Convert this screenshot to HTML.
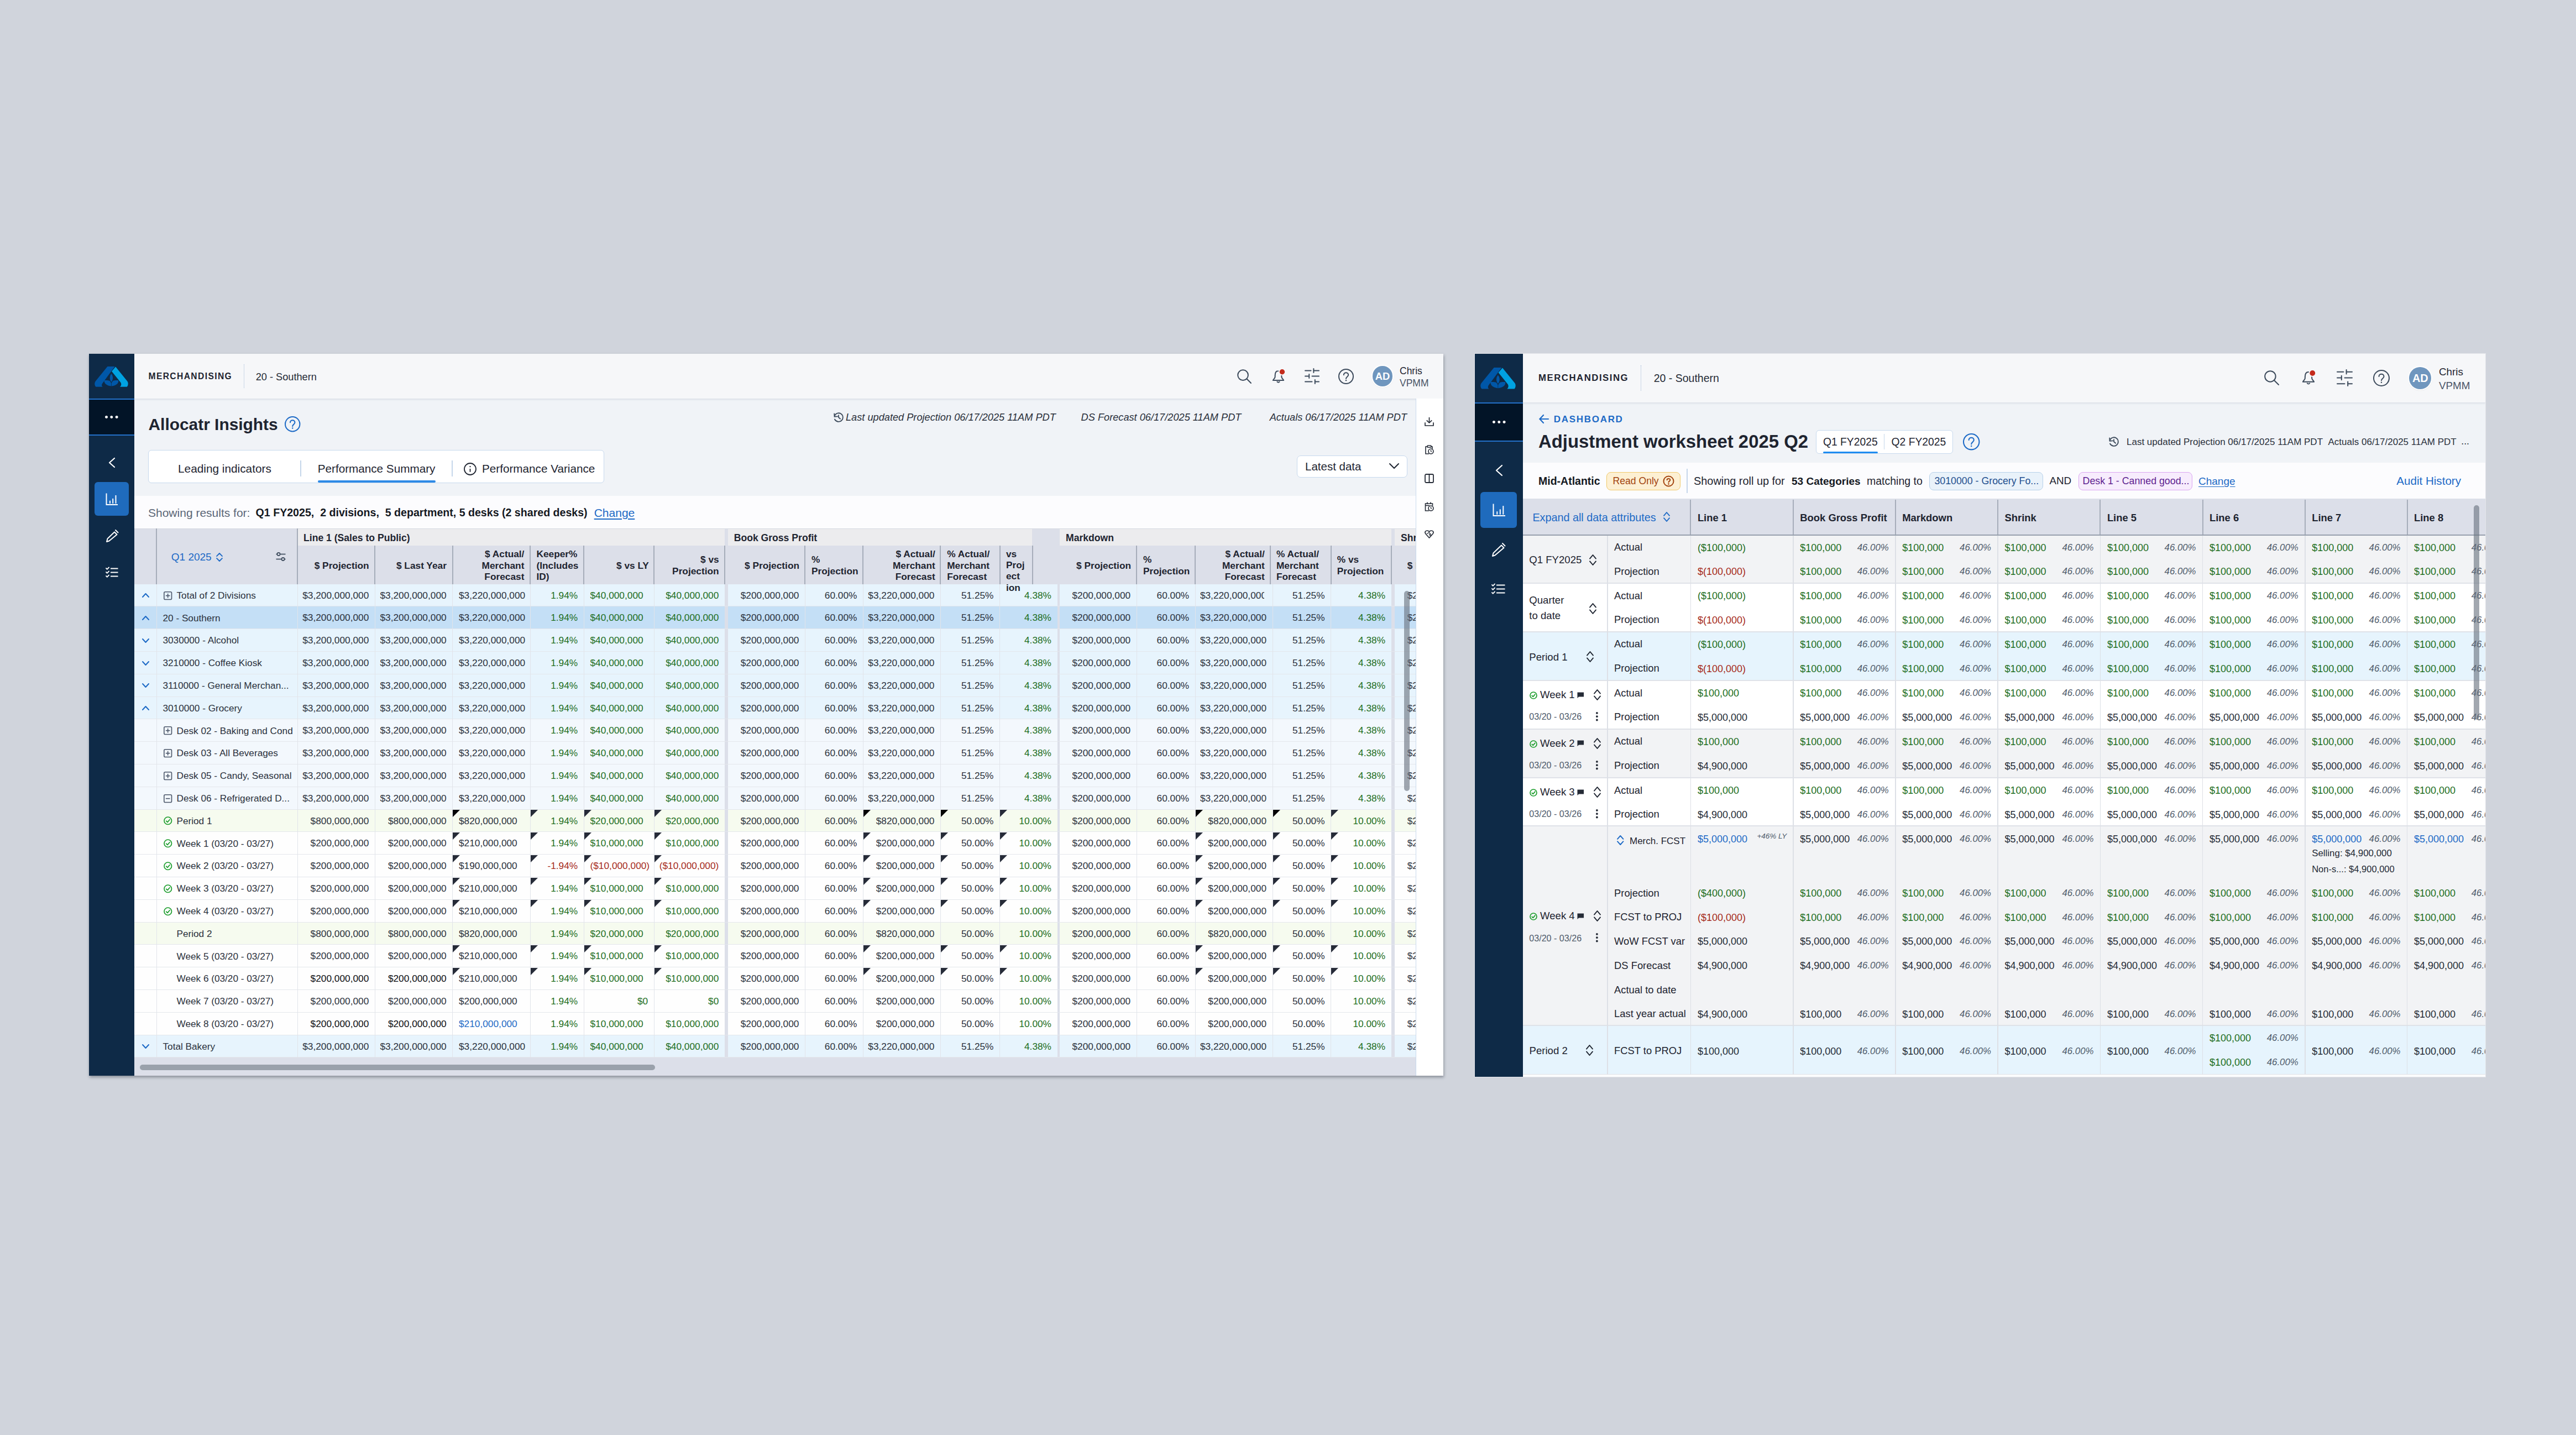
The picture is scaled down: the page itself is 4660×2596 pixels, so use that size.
<!DOCTYPE html>
<html><head><meta charset="utf-8"><title>Merchandising</title>
<style>
html,body{margin:0;padding:0;}
body{width:4660px;height:2596px;background:#d0d4dc;position:relative;overflow:hidden;font-family:'Liberation Sans', sans-serif;}
.a{position:absolute;}
.t{white-space:nowrap;}
svg{overflow:visible;}
</style></head><body>
<div class="a" style="left:161px;top:640px;width:2450px;height:1306px;overflow:hidden;box-shadow:1px 3px 5px rgba(30,36,50,0.38);background:#f0f3f7;"><div class="a" style="left:82.0px;top:81.0px;width:2368.0px;height:1225.0px;background:#f0f3f7;"></div><div class="a" style="left:0.0px;top:0.0px;width:82.0px;height:1306.0px;background:#0e2a47;"></div><svg class="a" style="left:10.2px;top:22.5px;width:61px;height:37px;" width="61" height="37" viewBox="0 0 64 38.6">
<path d="M24.6 0 L38.4 0 L15.2 31.5 C13 34.5 13.5 37 15.6 38.4 L2.5 38.4 C0 36 -0.5 31 1.8 28 Z" fill="#0057a8"/>
<path d="M40 0.4 L62.3 27.9 C64.5 31 64 36 61.6 38.4 L48.2 38.4 C51 36.5 51.5 32.5 49.3 29.7 L32.6 9.1 Z" fill="#00a2e2"/>
<path d="M31.9 30.8 C30.5 28 29 26.3 24 26.1 L19.5 26.1 C18 26.5 18.3 28 19 30 C21 35 27 36.5 31.9 37.2 Z" fill="#0057a8"/>
<path d="M31.9 30.8 C33.3 28 34.8 26.3 39.8 26.1 L44.3 26.1 C45.8 26.5 45.5 28 44.8 30 C42.8 35 36.8 36.5 31.9 37.2 Z" fill="#0057a8"/>
<path d="M31.9 12.3 C28 17 26.5 24 31.9 30.4 C37.3 24 35.8 17 31.9 12.3 Z" fill="#0057a8" stroke="#0e2a47" stroke-width="1.3"/>
<line x1="31.9" y1="31" x2="31.9" y2="37" stroke="#0e2a47" stroke-width="0.6"/>
</svg><div class="a" style="left:0.0px;top:81.0px;width:82.0px;height:2.0px;background:#2370c9;"></div><div class="a" style="left:0.0px;top:83.0px;width:82.0px;height:63.0px;background:#021427;"></div><div class="a" style="left:0.0px;top:146.0px;width:82.0px;height:2.0px;background:#2370c9;"></div><svg class="a" style="left:29.2px;top:112.0px;" width="23.6" height="5.0" viewBox="0 0 23.6 5.0"><circle cx="2.5" cy="2.5" r="2.5" fill="#fff"/><circle cx="11.8" cy="2.5" r="2.5" fill="#fff"/><circle cx="21.1" cy="2.5" r="2.5" fill="#fff"/></svg><svg class="a" style="left:36.0px;top:188.0px;" width="11" height="18" viewBox="0 0 11 18"><polyline points="10,1 1,9.0 10,17" fill="none" stroke="#fff" stroke-width="2.2" stroke-linecap="round" stroke-linejoin="round"/></svg><div class="a" style="left:10.4px;top:232.0px;width:61.2px;height:61.0px;background:#1f6bbd;border-radius:6px;"></div><svg class="a" style="left:30.0px;top:252.0px;" width="23" height="22" viewBox="0 0 23 22"><polyline points="1.5,0.5 1.5,21 22,21" fill="none" stroke="#fff" stroke-width="2"/>
<line x1="7.92" y1="13.64" x2="7.92" y2="18.919999999999998" stroke="#fff" stroke-width="2"/>
<line x1="13.2" y1="9.9" x2="13.2" y2="18.919999999999998" stroke="#fff" stroke-width="2"/>
<line x1="18.48" y1="3.96" x2="18.48" y2="18.919999999999998" stroke="#fff" stroke-width="2"/></svg><svg class="a" style="left:30.0px;top:318.0px;" width="23" height="23" viewBox="0 0 23 23"><path d="M2 22 L3.5 16.5 L16 4.5 L20.5 9 L6.5 20.5 Z" fill="none" stroke="#fff" stroke-width="2" stroke-linejoin="round"/>
<line x1="18" y1="1" x2="22.5" y2="5.5" stroke="#fff" stroke-width="2" stroke-linecap="round"/></svg><svg class="a" style="left:30.0px;top:386.0px;" width="23" height="19" viewBox="0 0 23 19"><polyline points="1,2.0 2.8,3.8 6,0.5" fill="none" stroke="#fff" stroke-width="1.8" stroke-linecap="round"/><line x1="9" y1="2.5" x2="22.5" y2="2.5" stroke="#fff" stroke-width="2"/><polyline points="1,9.0 2.8,10.8 6,7.5" fill="none" stroke="#fff" stroke-width="1.8" stroke-linecap="round"/><line x1="9" y1="9.5" x2="22.5" y2="9.5" stroke="#fff" stroke-width="2"/><polyline points="1,16.0 2.8,17.8 6,14.5" fill="none" stroke="#fff" stroke-width="1.8" stroke-linecap="round"/><line x1="9" y1="16.5" x2="22.5" y2="16.5" stroke="#fff" stroke-width="2"/></svg><div class="a" style="left:82.0px;top:0.0px;width:2368.0px;height:81.0px;background:#f6f7f9;border-bottom:1px solid #dde3ea;box-shadow:0 1px 3px rgba(40,60,90,0.10);"></div><div class="a t" style="top:33.2px;font-size:15.6px;line-height:15.6px;color:#1e2430;font-weight:700;letter-spacing:1.4px;left:107.5px;">MERCHANDISING</div><div class="a" style="left:280.0px;top:19.0px;width:0.0px;height:43.0px;border-left:1.5px dotted #9fb8d6;"></div><div class="a t" style="top:33.0px;font-size:18.2px;line-height:18.2px;color:#252b36;left:301.7px;">20 - Southern</div><svg class="a" style="left:2077.0px;top:28.0px;" width="26" height="26" viewBox="0 0 26 26"><circle cx="10.559999999999999" cy="10.559999999999999" r="9.36" fill="none" stroke="#3d4b5c" stroke-width="2"/><line x1="17.2992" y1="17.2992" x2="25" y2="25" stroke="#3d4b5c" stroke-width="2" stroke-linecap="round"/></svg><svg class="a" style="left:2141.0px;top:28.0px;" width="23" height="25" viewBox="0 0 23 25"><path d="M10.5 3.0 C5.880000000000001 3.0 4.62 7.5 4.62 11.25 L4.62 13.750000000000002 C4.62 16.5 1.68 17.5 0.84 20.0 L20.16 20.0 C19.32 17.5 16.38 16.5 16.38 13.750000000000002 L16.38 11.25 C16.38 7.5 15.12 3.0 10.5 3.0 Z" fill="none" stroke="#3d4b5c" stroke-width="2" stroke-linejoin="round"/>
<path d="M8.4 22.5 Q10.5 24.75 12.6 22.5" fill="none" stroke="#3d4b5c" stroke-width="2" stroke-linecap="round"/>
<circle cx="17.43" cy="4.75" r="5.67" fill="#c42b1c" stroke="#f6f7f9" stroke-width="1.89"/></svg><svg class="a" style="left:2200.0px;top:27.0px;" width="25" height="27" viewBox="0 0 25 27"><line x1="0.0" y1="3.5100000000000002" x2="10.576923076923077" y2="3.5100000000000002" stroke="#3d4b5c" stroke-width="2" stroke-linecap="round"/><line x1="15.384615384615385" y1="3.5100000000000002" x2="25.0" y2="3.5100000000000002" stroke="#3d4b5c" stroke-width="2" stroke-linecap="round"/><line x1="15.384615384615385" y1="0.048461538461538556" x2="15.384615384615385" y2="6.9715384615384615" stroke="#3d4b5c" stroke-width="2" stroke-linecap="round"/><line x1="0.0" y1="13.5" x2="7.211538461538462" y2="13.5" stroke="#3d4b5c" stroke-width="2" stroke-linecap="round"/><line x1="12.5" y1="13.5" x2="25.0" y2="13.5" stroke="#3d4b5c" stroke-width="2" stroke-linecap="round"/><line x1="7.211538461538462" y1="10.038461538461538" x2="7.211538461538462" y2="16.96153846153846" stroke="#3d4b5c" stroke-width="2" stroke-linecap="round"/><line x1="0.0" y1="23.49" x2="12.5" y2="23.49" stroke="#3d4b5c" stroke-width="2" stroke-linecap="round"/><line x1="17.78846153846154" y1="23.49" x2="25.0" y2="23.49" stroke="#3d4b5c" stroke-width="2" stroke-linecap="round"/><line x1="17.78846153846154" y1="20.028461538461535" x2="17.78846153846154" y2="26.951538461538462" stroke="#3d4b5c" stroke-width="2" stroke-linecap="round"/></svg><svg class="a" style="left:2259.5px;top:26.5px;" width="28" height="28" viewBox="0 0 28 28"><circle cx="14.0" cy="14.0" r="13" fill="none" stroke="#3d4b5c" stroke-width="2"/>
<path d="M9.84 11.14 C9.84 5.9399999999999995 18.16 5.9399999999999995 18.16 11.14 C18.16 14.65 14.0 14.65 14.0 17.9" fill="none" stroke="#3d4b5c" stroke-width="2" stroke-linecap="round"/>
<circle cx="14.0" cy="21.15" r="1.2" fill="#3d4b5c"/></svg><div class="a" style="left:2321.6px;top:22.3px;width:36.8px;height:36.8px;border-radius:50%;background:#6f96be;box-shadow:0 0 0 2px #fff,0 1px 3px rgba(0,0,0,0.25);"></div><div class="a t" style="top:32.2px;font-size:18.4px;line-height:18.4px;color:#fff;font-weight:700;left:1590.0px;width:1500px;text-align:center;">AD</div><div class="a t" style="top:22.8px;font-size:17.5px;line-height:17.5px;color:#1e2430;left:2371.0px;">Chris</div><div class="a t" style="top:45.1px;font-size:17.5px;line-height:17.5px;color:#4a5568;left:2371.0px;">VPMM</div><div class="a t" style="top:113.1px;font-size:29.9px;line-height:29.9px;color:#1e2430;font-weight:700;left:107.5px;">Allocatr Insights</div><svg class="a" style="left:354.4px;top:112.8px;" width="28.4" height="28.4" viewBox="0 0 28.4 28.4"><circle cx="14.2" cy="14.2" r="13.2" fill="none" stroke="#1d6ac6" stroke-width="2"/>
<path d="M9.975999999999999 11.296 C9.975999999999999 6.016 18.424 6.016 18.424 11.296 C18.424 14.86 14.2 14.86 14.2 18.16" fill="none" stroke="#1d6ac6" stroke-width="2" stroke-linecap="round"/>
<circle cx="14.2" cy="21.46" r="1.2" fill="#1d6ac6"/></svg><svg class="a" style="left:1347.0px;top:106.0px;" width="18" height="18" viewBox="0 0 18 18"><path d="M1.5900000000000007 6.66 A7.8 7.8 0 1 1 1.9800000000000004 12.51" fill="none" stroke="#3d4b5c" stroke-width="1.8" stroke-linecap="round"/>
<polyline points="1.2000000000000002 2.37,1.5900000000000007 7.83,7.05 7.4399999999999995" fill="none" stroke="#3d4b5c" stroke-width="1.8" stroke-linecap="round" stroke-linejoin="round"/>
<polyline points="9.0 5.1,9.0 9.0,12.120000000000001 11.73" fill="none" stroke="#3d4b5c" stroke-width="1.8" stroke-linecap="round"/></svg><div class="a t" style="top:105.5px;font-size:18.2px;line-height:18.2px;color:#2a303b;font-style:italic;left:1369.0px;">Last updated Projection 06/17/2025 11AM PDT</div><div class="a t" style="top:105.5px;font-size:18.2px;line-height:18.2px;color:#2a303b;font-style:italic;left:1794.6px;">DS Forecast 06/17/2025 11AM PDT</div><div class="a t" style="top:105.5px;font-size:18.2px;line-height:18.2px;color:#2a303b;font-style:italic;left:884.0px;width:1500px;text-align:right;">Actuals 06/17/2025 11AM PDT</div><div class="a" style="left:107.0px;top:174.0px;width:825.0px;height:60.0px;background:#fff;box-sizing:border-box;border:1.5px solid #c7d9ed;border-radius:6px;"></div><div class="a t" style="top:197.8px;font-size:20.8px;line-height:20.8px;color:#1e2430;left:161.0px;">Leading indicators</div><div class="a" style="left:382.0px;top:193.0px;width:1.5px;height:29.0px;background:#c5d6ea;"></div><div class="a t" style="top:197.9px;font-size:20.7px;line-height:20.7px;color:#1e2430;left:413.7px;">Performance Summary</div><div class="a" style="left:413.5px;top:229.0px;width:213.5px;height:4.0px;background:#2d8ae6;border-radius:2px;"></div><div class="a" style="left:656.0px;top:193.0px;width:1.5px;height:29.0px;background:#c5d6ea;"></div><svg class="a" style="left:677.5px;top:196.5px;" width="23.0" height="23.0" viewBox="0 0 23.0 23.0"><circle cx="11.5" cy="11.5" r="10.5" fill="none" stroke="#1e2430" stroke-width="1.8"/>
<line x1="11.5" y1="10.975" x2="11.5" y2="16.75" stroke="#1e2430" stroke-width="1.8"/>
<circle cx="11.5" cy="7.09" r="1.1700000000000002" fill="#1e2430"/></svg><div class="a t" style="top:197.9px;font-size:20.7px;line-height:20.7px;color:#1e2430;left:711.0px;">Performance Variance</div><div class="a" style="left:2185.0px;top:184.0px;width:200.0px;height:40.0px;background:#fff;box-sizing:border-box;border:1.5px solid #c7d9ed;border-radius:7px;"></div><div class="a t" style="top:193.9px;font-size:20.5px;line-height:20.5px;color:#1e2430;left:2200.0px;">Latest data</div><svg class="a" style="left:2352.0px;top:198.0px;" width="18" height="10" viewBox="0 0 18 10"><polyline points="1,1 9.0,9 17,1" fill="none" stroke="#1e2430" stroke-width="2" stroke-linecap="round" stroke-linejoin="round"/></svg><div class="a" style="left:2400.0px;top:81.0px;width:50.0px;height:1225.0px;background:#fff;border-left:1px solid #c9daee;"></div><svg class="a" style="left:2416.0px;top:114.0px;" width="17" height="17" viewBox="0 0 17 17"><line x1="8.5" y1="1" x2="8.5" y2="10.54" stroke="#252b36" stroke-width="1.7"/><polyline points="3.74,6.46 8.5,10.88 13.26,6.46" fill="none" stroke="#252b36" stroke-width="1.7" stroke-linejoin="round"/><polyline points="1,10.2 1,16 16,16 16,10.2" fill="none" stroke="#252b36" stroke-width="1.7" stroke-linejoin="round"/></svg><svg class="a" style="left:2416.0px;top:165.0px;" width="17" height="17" viewBox="0 0 17 17"><path d="M6 3 L2 3 L2 16 L8 16" fill="none" stroke="#252b36" stroke-width="1.6"/><rect x="5" y="1" width="7" height="3.2" rx="1" fill="none" stroke="#252b36" stroke-width="1.6"/><path d="M11 3 L14 3 L14 7" fill="none" stroke="#252b36" stroke-width="1.6"/><circle cx="11.5" cy="11.5" r="4.5" fill="#fff" stroke="#252b36" stroke-width="1.6"/><polyline points="11.5,9 11.5,11.5 13,12.5" fill="none" stroke="#252b36" stroke-width="1.3"/></svg><svg class="a" style="left:2416.0px;top:217.0px;" width="17" height="17" viewBox="0 0 17 17"><rect x="1" y="1" width="15" height="15" rx="2" fill="none" stroke="#252b36" stroke-width="1.8"/><line x1="8.5" y1="1" x2="8.5" y2="16" stroke="#252b36" stroke-width="1.8"/></svg><svg class="a" style="left:2416.0px;top:268.0px;" width="17" height="17" viewBox="0 0 17 17"><path d="M8 16 L1.5 16 L1.5 3 L14.5 3 L14.5 7" fill="none" stroke="#252b36" stroke-width="1.6"/><line x1="1.5" y1="6.5" x2="9" y2="6.5" stroke="#252b36" stroke-width="1.6"/><line x1="5" y1="0.5" x2="5" y2="4" stroke="#252b36" stroke-width="1.6"/><line x1="11" y1="0.5" x2="11" y2="4" stroke="#252b36" stroke-width="1.6"/><circle cx="11.5" cy="11.5" r="4.5" fill="#fff" stroke="#252b36" stroke-width="1.6"/><polyline points="11.5,9 11.5,11.5 13,12.5" fill="none" stroke="#252b36" stroke-width="1.3"/></svg><svg class="a" style="left:2416.0px;top:319.0px;" width="17" height="15" viewBox="0 0 17 15"><path d="M8.5 14 L2 6.75 C-0.5 3.0 2 1 5 1 C6.8 1 7.8 2 8.5 3 C9.2 2 10.2 1 12 1 C15 1 17.5 3.0 15 6.75 Z" fill="none" stroke="#252b36" stroke-width="1.7" stroke-linejoin="round"/><path d="M4 6.75 L8 4.5 L11 7 M8 9 L11 6.5 M9.5 10.5 L12 8" fill="none" stroke="#252b36" stroke-width="1.4"/></svg><div class="a" style="left:82.0px;top:256.5px;width:2318.0px;height:60.0px;background:#fcfcfe;"></div><div class="a t" style="top:276.6px;font-size:21px;line-height:21px;color:#5b6676;left:107.0px;">Showing results for:</div><div class="a t" style="top:277.8px;font-size:19.6px;line-height:19.6px;color:#14181f;font-weight:700;left:301.6px;">Q1 FY2025,  2 divisions,  5 department, 5 desks (2 shared desks)</div><div class="a t" style="top:276.6px;font-size:21px;line-height:21px;color:#1d6ac6;left:913.7px;text-decoration:underline;text-underline-offset:3px;">Change</div><div class="a" style="left:0;top:0;width:2400px;height:1306px;overflow:hidden;clip-path:inset(0 0 0 82px);"><div class="a" style="left:82.0px;top:316.4px;width:2318.0px;height:100.2px;background:#dcdfe9;border-top:1px solid #d3d7e0;box-sizing:border-box;"></div><div class="a" style="left:377.0px;top:317.4px;width:773.3px;height:30.0px;background:#ececee;"></div><div class="a t" style="top:325.3px;font-size:17.6px;line-height:17.6px;color:#1e2430;font-weight:700;left:388.0px;">Line 1 (Sales to Public)</div><div class="a" style="left:1155.7px;top:317.4px;width:550.8px;height:30.0px;background:#ececee;"></div><div class="a t" style="top:325.3px;font-size:17.6px;line-height:17.6px;color:#1e2430;font-weight:700;left:1166.7px;">Book Gross Profit</div><div class="a" style="left:1756.0px;top:317.4px;width:600.1px;height:30.0px;background:#ececee;"></div><div class="a t" style="top:325.3px;font-size:17.6px;line-height:17.6px;color:#1e2430;font-weight:700;left:1767.0px;">Markdown</div><div class="a" style="left:2362.0px;top:317.4px;width:38.0px;height:30.0px;background:#ececee;"></div><div class="a t" style="top:325.3px;font-size:17.6px;line-height:17.6px;color:#1e2430;font-weight:700;left:2373.0px;">Shrink</div><div class="a" style="left:121.0px;top:316.4px;width:2.0px;height:100.2px;background:#a6adba;"></div><div class="a" style="left:376.0px;top:316.4px;width:2.0px;height:100.2px;background:#a6adba;"></div><div class="a" style="left:516.3px;top:347.4px;width:2.0px;height:69.2px;background:#a6adba;"></div><div class="a" style="left:656.6px;top:347.4px;width:2.0px;height:69.2px;background:#a6adba;"></div><div class="a" style="left:797.1px;top:347.4px;width:2.0px;height:69.2px;background:#a6adba;"></div><div class="a" style="left:894.2px;top:347.4px;width:2.0px;height:69.2px;background:#a6adba;"></div><div class="a" style="left:1021.2px;top:347.4px;width:2.0px;height:69.2px;background:#a6adba;"></div><div class="a" style="left:1149.3px;top:347.4px;width:2.0px;height:69.2px;background:#a6adba;"></div><div class="a" style="left:1294.4px;top:347.4px;width:2.0px;height:69.2px;background:#a6adba;"></div><div class="a" style="left:1399.4px;top:347.4px;width:2.0px;height:69.2px;background:#a6adba;"></div><div class="a" style="left:1539.4px;top:347.4px;width:2.0px;height:69.2px;background:#a6adba;"></div><div class="a" style="left:1646.5px;top:347.4px;width:2.0px;height:69.2px;background:#a6adba;"></div><div class="a" style="left:1705.5px;top:347.4px;width:2.0px;height:69.2px;background:#a6adba;"></div><div class="a" style="left:1894.2px;top:347.4px;width:2.0px;height:69.2px;background:#a6adba;"></div><div class="a" style="left:2000.2px;top:347.4px;width:2.0px;height:69.2px;background:#a6adba;"></div><div class="a" style="left:2135.5px;top:347.4px;width:2.0px;height:69.2px;background:#a6adba;"></div><div class="a" style="left:2245.6px;top:347.4px;width:2.0px;height:69.2px;background:#a6adba;"></div><div class="a" style="left:2355.1px;top:347.4px;width:2.0px;height:69.2px;background:#a6adba;"></div><div class="a t" style="top:358.2px;font-size:19px;line-height:19px;color:#1d6ac6;left:148.8px;">Q1 2025</div><svg class="a" style="left:230.4px;top:359.7px;" width="12" height="16" viewBox="0 0 12 16"><polyline points="1,6.08 6.0,1 11,6.08" fill="none" stroke="#1d6ac6" stroke-width="1.8" stroke-linecap="round" stroke-linejoin="round"/><polyline points="1,9.92 6.0,15 11,9.92" fill="none" stroke="#1d6ac6" stroke-width="1.8" stroke-linecap="round" stroke-linejoin="round"/></svg><svg class="a" style="left:338.0px;top:359.0px;" width="18" height="16" viewBox="0 0 18 16"><line x1="0.5" y1="3.5" x2="17.5" y2="3.5" stroke="#3d4b5c" stroke-width="1.7"/>
<circle cx="5" cy="3.5" r="2.6" fill="#dcdfe9" stroke="#3d4b5c" stroke-width="1.7"/>
<line x1="0.5" y1="12.5" x2="17.5" y2="12.5" stroke="#3d4b5c" stroke-width="1.7"/>
<circle cx="13" cy="12.5" r="2.6" fill="#dcdfe9" stroke="#3d4b5c" stroke-width="1.7"/></svg><div class="a t" style="top:374.6px;font-size:17.3px;line-height:17.3px;color:#1e2430;font-weight:700;left:-993.4px;width:1500px;text-align:right;">$ Projection</div><div class="a t" style="top:374.6px;font-size:17.3px;line-height:17.3px;color:#1e2430;font-weight:700;left:-853.1px;width:1500px;text-align:right;">$ Last Year</div><div class="a t" style="top:354.2px;font-size:17.3px;line-height:17.3px;color:#1e2430;font-weight:700;left:-712.6px;width:1500px;text-align:right;">$ Actual/</div><div class="a t" style="top:374.6px;font-size:17.3px;line-height:17.3px;color:#1e2430;font-weight:700;left:-712.6px;width:1500px;text-align:right;">Merchant</div><div class="a t" style="top:395.0px;font-size:17.3px;line-height:17.3px;color:#1e2430;font-weight:700;left:-712.6px;width:1500px;text-align:right;">Forecast</div><div class="a t" style="top:354.2px;font-size:17.3px;line-height:17.3px;color:#1e2430;font-weight:700;left:809.5px;">Keeper%</div><div class="a t" style="top:374.6px;font-size:17.3px;line-height:17.3px;color:#1e2430;font-weight:700;left:809.5px;">(Includes</div><div class="a t" style="top:395.0px;font-size:17.3px;line-height:17.3px;color:#1e2430;font-weight:700;left:809.5px;">ID)</div><div class="a t" style="top:374.6px;font-size:17.3px;line-height:17.3px;color:#1e2430;font-weight:700;left:-487.1px;width:1500px;text-align:right;">$ vs LY</div><div class="a t" style="top:364.4px;font-size:17.3px;line-height:17.3px;color:#1e2430;font-weight:700;left:-360.4px;width:1500px;text-align:right;">$ vs</div><div class="a t" style="top:384.8px;font-size:17.3px;line-height:17.3px;color:#1e2430;font-weight:700;left:-360.4px;width:1500px;text-align:right;">Projection</div><div class="a t" style="top:374.6px;font-size:17.3px;line-height:17.3px;color:#1e2430;font-weight:700;left:-215.0px;width:1500px;text-align:right;">$ Projection</div><div class="a t" style="top:364.4px;font-size:17.3px;line-height:17.3px;color:#1e2430;font-weight:700;left:1307.0px;">%</div><div class="a t" style="top:384.8px;font-size:17.3px;line-height:17.3px;color:#1e2430;font-weight:700;left:1307.0px;">Projection</div><div class="a t" style="top:354.2px;font-size:17.3px;line-height:17.3px;color:#1e2430;font-weight:700;left:30.8px;width:1500px;text-align:right;">$ Actual/</div><div class="a t" style="top:374.6px;font-size:17.3px;line-height:17.3px;color:#1e2430;font-weight:700;left:30.8px;width:1500px;text-align:right;">Merchant</div><div class="a t" style="top:395.0px;font-size:17.3px;line-height:17.3px;color:#1e2430;font-weight:700;left:30.8px;width:1500px;text-align:right;">Forecast</div><div class="a t" style="top:354.2px;font-size:17.3px;line-height:17.3px;color:#1e2430;font-weight:700;left:1552.2px;">% Actual/</div><div class="a t" style="top:374.6px;font-size:17.3px;line-height:17.3px;color:#1e2430;font-weight:700;left:1552.2px;">Merchant</div><div class="a t" style="top:395.0px;font-size:17.3px;line-height:17.3px;color:#1e2430;font-weight:700;left:1552.2px;">Forecast</div><div class="a t" style="top:374.6px;font-size:17.3px;line-height:17.3px;color:#1e2430;font-weight:700;left:385.0px;width:1500px;text-align:right;">$ Projection</div><div class="a t" style="top:364.4px;font-size:17.3px;line-height:17.3px;color:#1e2430;font-weight:700;left:1906.9px;">%</div><div class="a t" style="top:384.8px;font-size:17.3px;line-height:17.3px;color:#1e2430;font-weight:700;left:1906.9px;">Projection</div><div class="a t" style="top:354.2px;font-size:17.3px;line-height:17.3px;color:#1e2430;font-weight:700;left:626.8px;width:1500px;text-align:right;">$ Actual/</div><div class="a t" style="top:374.6px;font-size:17.3px;line-height:17.3px;color:#1e2430;font-weight:700;left:626.8px;width:1500px;text-align:right;">Merchant</div><div class="a t" style="top:395.0px;font-size:17.3px;line-height:17.3px;color:#1e2430;font-weight:700;left:626.8px;width:1500px;text-align:right;">Forecast</div><div class="a t" style="top:354.2px;font-size:17.3px;line-height:17.3px;color:#1e2430;font-weight:700;left:2147.9px;">% Actual/</div><div class="a t" style="top:374.6px;font-size:17.3px;line-height:17.3px;color:#1e2430;font-weight:700;left:2147.9px;">Merchant</div><div class="a t" style="top:395.0px;font-size:17.3px;line-height:17.3px;color:#1e2430;font-weight:700;left:2147.9px;">Forecast</div><div class="a t" style="top:364.4px;font-size:17.3px;line-height:17.3px;color:#1e2430;font-weight:700;left:2257.8px;">% vs</div><div class="a t" style="top:384.8px;font-size:17.3px;line-height:17.3px;color:#1e2430;font-weight:700;left:2257.8px;">Projection</div><div class="a t" style="top:374.8px;font-size:17.3px;line-height:17.3px;color:#1e2430;font-weight:700;left:2384.7px;">$ Projection</div><div class="a" style="left:82.0px;top:416.6px;width:2318.0px;height:40.8px;background:#e7f4fd;"></div><div class="a" style="left:1150.3px;top:416.6px;width:5.4px;height:40.8px;background:#dcdfe9;"></div><div class="a" style="left:1752.0px;top:416.6px;width:4.0px;height:40.8px;background:#dcdfe9;"></div><div class="a" style="left:2356.1px;top:416.6px;width:5.9px;height:40.8px;background:#dcdfe9;"></div><div class="a" style="left:82.0px;top:456.4px;width:2318.0px;height:1.0px;background:#e4e7ec;"></div><div class="a" style="left:121.5px;top:416.6px;width:1.0px;height:40.8px;background:#e1e4ea;"></div><div class="a" style="left:376.5px;top:416.6px;width:1.0px;height:40.8px;background:#e1e4ea;"></div><div class="a" style="left:516.8px;top:416.6px;width:1.0px;height:40.8px;background:#e1e4ea;"></div><div class="a" style="left:657.1px;top:416.6px;width:1.0px;height:40.8px;background:#e1e4ea;"></div><div class="a" style="left:797.6px;top:416.6px;width:1.0px;height:40.8px;background:#e1e4ea;"></div><div class="a" style="left:894.7px;top:416.6px;width:1.0px;height:40.8px;background:#e1e4ea;"></div><div class="a" style="left:1021.7px;top:416.6px;width:1.0px;height:40.8px;background:#e1e4ea;"></div><div class="a" style="left:1294.9px;top:416.6px;width:1.0px;height:40.8px;background:#e1e4ea;"></div><div class="a" style="left:1399.9px;top:416.6px;width:1.0px;height:40.8px;background:#e1e4ea;"></div><div class="a" style="left:1539.9px;top:416.6px;width:1.0px;height:40.8px;background:#e1e4ea;"></div><div class="a" style="left:1647.0px;top:416.6px;width:1.0px;height:40.8px;background:#e1e4ea;"></div><div class="a" style="left:1894.7px;top:416.6px;width:1.0px;height:40.8px;background:#e1e4ea;"></div><div class="a" style="left:2000.7px;top:416.6px;width:1.0px;height:40.8px;background:#e1e4ea;"></div><div class="a" style="left:2140.5px;top:416.6px;width:1.0px;height:40.8px;background:#e1e4ea;"></div><div class="a" style="left:2246.1px;top:416.6px;width:1.0px;height:40.8px;background:#e1e4ea;"></div><svg class="a" style="left:96.0px;top:433.1px;" width="13" height="8" viewBox="0 0 13 8"><polyline points="1,7 6.5,1 12,7" fill="none" stroke="#1d6ac6" stroke-width="2" stroke-linecap="round" stroke-linejoin="round"/></svg><svg class="a" style="left:135.0px;top:429.6px;" width="15.3" height="15.3" viewBox="0 0 15.3 15.3"><rect x="0.8" y="0.8" width="13.700000000000001" height="13.700000000000001" rx="2" fill="none" stroke="#4a5568" stroke-width="1.6"/><line x1="3.825" y1="7.65" x2="11.475000000000001" y2="7.65" stroke="#4a5568" stroke-width="1.6"/><line x1="7.65" y1="3.825" x2="7.65" y2="11.475000000000001" stroke="#4a5568" stroke-width="1.6"/></svg><div class="a t" style="top:428.7px;font-size:17.2px;line-height:17.2px;color:#2b313c;left:158.5px;">Total of 2 Divisions</div><div class="a t" style="top:428.6px;font-size:17.3px;line-height:17.3px;color:#2b313c;left:-993.7px;width:1500px;text-align:right;">$3,200,000,000</div><div class="a t" style="top:428.6px;font-size:17.3px;line-height:17.3px;color:#2b313c;left:-853.4px;width:1500px;text-align:right;">$3,200,000,000</div><div class="a t" style="top:428.6px;font-size:17.3px;line-height:17.3px;color:#2b313c;left:669.0px;">$3,220,000,000</div><div class="a t" style="top:428.6px;font-size:17.3px;line-height:17.3px;color:#1d6e1d;left:-615.8px;width:1500px;text-align:right;">1.94%</div><div class="a t" style="top:428.6px;font-size:17.3px;line-height:17.3px;color:#1d6e1d;left:906.5px;">$40,000,000</div><div class="a t" style="top:428.6px;font-size:17.3px;line-height:17.3px;color:#1d6e1d;left:-360.7px;width:1500px;text-align:right;">$40,000,000</div><div class="a t" style="top:428.6px;font-size:17.3px;line-height:17.3px;color:#2b313c;left:-215.6px;width:1500px;text-align:right;">$200,000,000</div><div class="a t" style="top:428.6px;font-size:17.3px;line-height:17.3px;color:#2b313c;left:-110.6px;width:1500px;text-align:right;">60.00%</div><div class="a t" style="top:428.6px;font-size:17.3px;line-height:17.3px;color:#2b313c;left:29.4px;width:1500px;text-align:right;">$3,220,000,000</div><div class="a t" style="top:428.6px;font-size:17.3px;line-height:17.3px;color:#2b313c;left:136.5px;width:1500px;text-align:right;">51.25%</div><div class="a t" style="top:428.6px;font-size:17.3px;line-height:17.3px;color:#1d6e1d;left:241.0px;width:1500px;text-align:right;">4.38%</div><div class="a t" style="top:428.6px;font-size:17.3px;line-height:17.3px;color:#2b313c;left:384.2px;width:1500px;text-align:right;">$200,000,000</div><div class="a t" style="top:428.6px;font-size:17.3px;line-height:17.3px;color:#2b313c;left:490.2px;width:1500px;text-align:right;">60.00%</div><div class="a" style="left:2001.2px;top:416.6px;width:125.29999999999995px;height:40.8px;overflow:hidden;"><div class="a t" style="top:12.0px;font-size:17.3px;line-height:17.3px;color:#2b313c;left:-1371.2px;width:1500px;text-align:right;">$3,220,000,000</div></div><div class="a t" style="top:428.6px;font-size:17.3px;line-height:17.3px;color:#2b313c;left:735.6px;width:1500px;text-align:right;">51.25%</div><div class="a t" style="top:428.6px;font-size:17.3px;line-height:17.3px;color:#1d6e1d;left:845.1px;width:1500px;text-align:right;">4.38%</div><div class="a t" style="top:428.6px;font-size:17.3px;line-height:17.3px;color:#2b313c;left:2384.7px;">$200,000,000</div><div class="a" style="left:82.0px;top:457.4px;width:2318.0px;height:40.8px;background:#c4dff6;"></div><div class="a" style="left:1150.3px;top:457.4px;width:5.4px;height:40.8px;background:#dcdfe9;"></div><div class="a" style="left:1752.0px;top:457.4px;width:4.0px;height:40.8px;background:#dcdfe9;"></div><div class="a" style="left:2356.1px;top:457.4px;width:5.9px;height:40.8px;background:#dcdfe9;"></div><div class="a" style="left:82.0px;top:497.2px;width:2318.0px;height:1.0px;background:#e4e7ec;"></div><div class="a" style="left:121.5px;top:457.4px;width:1.0px;height:40.8px;background:#e1e4ea;"></div><div class="a" style="left:376.5px;top:457.4px;width:1.0px;height:40.8px;background:#e1e4ea;"></div><div class="a" style="left:516.8px;top:457.4px;width:1.0px;height:40.8px;background:#e1e4ea;"></div><div class="a" style="left:657.1px;top:457.4px;width:1.0px;height:40.8px;background:#e1e4ea;"></div><div class="a" style="left:797.6px;top:457.4px;width:1.0px;height:40.8px;background:#e1e4ea;"></div><div class="a" style="left:894.7px;top:457.4px;width:1.0px;height:40.8px;background:#e1e4ea;"></div><div class="a" style="left:1021.7px;top:457.4px;width:1.0px;height:40.8px;background:#e1e4ea;"></div><div class="a" style="left:1294.9px;top:457.4px;width:1.0px;height:40.8px;background:#e1e4ea;"></div><div class="a" style="left:1399.9px;top:457.4px;width:1.0px;height:40.8px;background:#e1e4ea;"></div><div class="a" style="left:1539.9px;top:457.4px;width:1.0px;height:40.8px;background:#e1e4ea;"></div><div class="a" style="left:1647.0px;top:457.4px;width:1.0px;height:40.8px;background:#e1e4ea;"></div><div class="a" style="left:1894.7px;top:457.4px;width:1.0px;height:40.8px;background:#e1e4ea;"></div><div class="a" style="left:2000.7px;top:457.4px;width:1.0px;height:40.8px;background:#e1e4ea;"></div><div class="a" style="left:2140.5px;top:457.4px;width:1.0px;height:40.8px;background:#e1e4ea;"></div><div class="a" style="left:2246.1px;top:457.4px;width:1.0px;height:40.8px;background:#e1e4ea;"></div><svg class="a" style="left:96.0px;top:473.9px;" width="13" height="8" viewBox="0 0 13 8"><polyline points="1,7 6.5,1 12,7" fill="none" stroke="#1d6ac6" stroke-width="2" stroke-linecap="round" stroke-linejoin="round"/></svg><div class="a t" style="top:469.5px;font-size:17.2px;line-height:17.2px;color:#2b313c;left:133.5px;">20 - Southern</div><div class="a t" style="top:469.4px;font-size:17.3px;line-height:17.3px;color:#2b313c;left:-993.7px;width:1500px;text-align:right;">$3,200,000,000</div><div class="a t" style="top:469.4px;font-size:17.3px;line-height:17.3px;color:#2b313c;left:-853.4px;width:1500px;text-align:right;">$3,200,000,000</div><div class="a t" style="top:469.4px;font-size:17.3px;line-height:17.3px;color:#2b313c;left:669.0px;">$3,220,000,000</div><div class="a t" style="top:469.4px;font-size:17.3px;line-height:17.3px;color:#1d6e1d;left:-615.8px;width:1500px;text-align:right;">1.94%</div><div class="a t" style="top:469.4px;font-size:17.3px;line-height:17.3px;color:#1d6e1d;left:906.5px;">$40,000,000</div><div class="a t" style="top:469.4px;font-size:17.3px;line-height:17.3px;color:#1d6e1d;left:-360.7px;width:1500px;text-align:right;">$40,000,000</div><div class="a t" style="top:469.4px;font-size:17.3px;line-height:17.3px;color:#2b313c;left:-215.6px;width:1500px;text-align:right;">$200,000,000</div><div class="a t" style="top:469.4px;font-size:17.3px;line-height:17.3px;color:#2b313c;left:-110.6px;width:1500px;text-align:right;">60.00%</div><div class="a t" style="top:469.4px;font-size:17.3px;line-height:17.3px;color:#2b313c;left:29.4px;width:1500px;text-align:right;">$3,220,000,000</div><div class="a t" style="top:469.4px;font-size:17.3px;line-height:17.3px;color:#2b313c;left:136.5px;width:1500px;text-align:right;">51.25%</div><div class="a t" style="top:469.4px;font-size:17.3px;line-height:17.3px;color:#1d6e1d;left:241.0px;width:1500px;text-align:right;">4.38%</div><div class="a t" style="top:469.4px;font-size:17.3px;line-height:17.3px;color:#2b313c;left:384.2px;width:1500px;text-align:right;">$200,000,000</div><div class="a t" style="top:469.4px;font-size:17.3px;line-height:17.3px;color:#2b313c;left:490.2px;width:1500px;text-align:right;">60.00%</div><div class="a t" style="top:469.4px;font-size:17.3px;line-height:17.3px;color:#2b313c;left:630.0px;width:1500px;text-align:right;">$3,220,000,000</div><div class="a t" style="top:469.4px;font-size:17.3px;line-height:17.3px;color:#2b313c;left:735.6px;width:1500px;text-align:right;">51.25%</div><div class="a t" style="top:469.4px;font-size:17.3px;line-height:17.3px;color:#1d6e1d;left:845.1px;width:1500px;text-align:right;">4.38%</div><div class="a t" style="top:469.4px;font-size:17.3px;line-height:17.3px;color:#2b313c;left:2384.7px;">$200,000,000</div><div class="a" style="left:82.0px;top:498.2px;width:2318.0px;height:40.8px;background:#e7f4fd;"></div><div class="a" style="left:1150.3px;top:498.2px;width:5.4px;height:40.8px;background:#dcdfe9;"></div><div class="a" style="left:1752.0px;top:498.2px;width:4.0px;height:40.8px;background:#dcdfe9;"></div><div class="a" style="left:2356.1px;top:498.2px;width:5.9px;height:40.8px;background:#dcdfe9;"></div><div class="a" style="left:82.0px;top:538.0px;width:2318.0px;height:1.0px;background:#e4e7ec;"></div><div class="a" style="left:121.5px;top:498.2px;width:1.0px;height:40.8px;background:#e1e4ea;"></div><div class="a" style="left:376.5px;top:498.2px;width:1.0px;height:40.8px;background:#e1e4ea;"></div><div class="a" style="left:516.8px;top:498.2px;width:1.0px;height:40.8px;background:#e1e4ea;"></div><div class="a" style="left:657.1px;top:498.2px;width:1.0px;height:40.8px;background:#e1e4ea;"></div><div class="a" style="left:797.6px;top:498.2px;width:1.0px;height:40.8px;background:#e1e4ea;"></div><div class="a" style="left:894.7px;top:498.2px;width:1.0px;height:40.8px;background:#e1e4ea;"></div><div class="a" style="left:1021.7px;top:498.2px;width:1.0px;height:40.8px;background:#e1e4ea;"></div><div class="a" style="left:1294.9px;top:498.2px;width:1.0px;height:40.8px;background:#e1e4ea;"></div><div class="a" style="left:1399.9px;top:498.2px;width:1.0px;height:40.8px;background:#e1e4ea;"></div><div class="a" style="left:1539.9px;top:498.2px;width:1.0px;height:40.8px;background:#e1e4ea;"></div><div class="a" style="left:1647.0px;top:498.2px;width:1.0px;height:40.8px;background:#e1e4ea;"></div><div class="a" style="left:1894.7px;top:498.2px;width:1.0px;height:40.8px;background:#e1e4ea;"></div><div class="a" style="left:2000.7px;top:498.2px;width:1.0px;height:40.8px;background:#e1e4ea;"></div><div class="a" style="left:2140.5px;top:498.2px;width:1.0px;height:40.8px;background:#e1e4ea;"></div><div class="a" style="left:2246.1px;top:498.2px;width:1.0px;height:40.8px;background:#e1e4ea;"></div><svg class="a" style="left:96.0px;top:514.7px;" width="13" height="8" viewBox="0 0 13 8"><polyline points="1,1 6.5,7 12,1" fill="none" stroke="#1d6ac6" stroke-width="2" stroke-linecap="round" stroke-linejoin="round"/></svg><div class="a t" style="top:510.3px;font-size:17.2px;line-height:17.2px;color:#2b313c;left:133.5px;">3030000 - Alcohol</div><div class="a t" style="top:510.2px;font-size:17.3px;line-height:17.3px;color:#2b313c;left:-993.7px;width:1500px;text-align:right;">$3,200,000,000</div><div class="a t" style="top:510.2px;font-size:17.3px;line-height:17.3px;color:#2b313c;left:-853.4px;width:1500px;text-align:right;">$3,200,000,000</div><div class="a t" style="top:510.2px;font-size:17.3px;line-height:17.3px;color:#2b313c;left:669.0px;">$3,220,000,000</div><div class="a t" style="top:510.2px;font-size:17.3px;line-height:17.3px;color:#1d6e1d;left:-615.8px;width:1500px;text-align:right;">1.94%</div><div class="a t" style="top:510.2px;font-size:17.3px;line-height:17.3px;color:#1d6e1d;left:906.5px;">$40,000,000</div><div class="a t" style="top:510.2px;font-size:17.3px;line-height:17.3px;color:#1d6e1d;left:-360.7px;width:1500px;text-align:right;">$40,000,000</div><div class="a t" style="top:510.2px;font-size:17.3px;line-height:17.3px;color:#2b313c;left:-215.6px;width:1500px;text-align:right;">$200,000,000</div><div class="a t" style="top:510.2px;font-size:17.3px;line-height:17.3px;color:#2b313c;left:-110.6px;width:1500px;text-align:right;">60.00%</div><div class="a t" style="top:510.2px;font-size:17.3px;line-height:17.3px;color:#2b313c;left:29.4px;width:1500px;text-align:right;">$3,220,000,000</div><div class="a t" style="top:510.2px;font-size:17.3px;line-height:17.3px;color:#2b313c;left:136.5px;width:1500px;text-align:right;">51.25%</div><div class="a t" style="top:510.2px;font-size:17.3px;line-height:17.3px;color:#1d6e1d;left:241.0px;width:1500px;text-align:right;">4.38%</div><div class="a t" style="top:510.2px;font-size:17.3px;line-height:17.3px;color:#2b313c;left:384.2px;width:1500px;text-align:right;">$200,000,000</div><div class="a t" style="top:510.2px;font-size:17.3px;line-height:17.3px;color:#2b313c;left:490.2px;width:1500px;text-align:right;">60.00%</div><div class="a t" style="top:510.2px;font-size:17.3px;line-height:17.3px;color:#2b313c;left:630.0px;width:1500px;text-align:right;">$3,220,000,000</div><div class="a t" style="top:510.2px;font-size:17.3px;line-height:17.3px;color:#2b313c;left:735.6px;width:1500px;text-align:right;">51.25%</div><div class="a t" style="top:510.2px;font-size:17.3px;line-height:17.3px;color:#1d6e1d;left:845.1px;width:1500px;text-align:right;">4.38%</div><div class="a t" style="top:510.2px;font-size:17.3px;line-height:17.3px;color:#2b313c;left:2384.7px;">$200,000,000</div><div class="a" style="left:82.0px;top:539.0px;width:2318.0px;height:40.8px;background:#e7f4fd;"></div><div class="a" style="left:1150.3px;top:539.0px;width:5.4px;height:40.8px;background:#dcdfe9;"></div><div class="a" style="left:1752.0px;top:539.0px;width:4.0px;height:40.8px;background:#dcdfe9;"></div><div class="a" style="left:2356.1px;top:539.0px;width:5.9px;height:40.8px;background:#dcdfe9;"></div><div class="a" style="left:82.0px;top:578.8px;width:2318.0px;height:1.0px;background:#e4e7ec;"></div><div class="a" style="left:121.5px;top:539.0px;width:1.0px;height:40.8px;background:#e1e4ea;"></div><div class="a" style="left:376.5px;top:539.0px;width:1.0px;height:40.8px;background:#e1e4ea;"></div><div class="a" style="left:516.8px;top:539.0px;width:1.0px;height:40.8px;background:#e1e4ea;"></div><div class="a" style="left:657.1px;top:539.0px;width:1.0px;height:40.8px;background:#e1e4ea;"></div><div class="a" style="left:797.6px;top:539.0px;width:1.0px;height:40.8px;background:#e1e4ea;"></div><div class="a" style="left:894.7px;top:539.0px;width:1.0px;height:40.8px;background:#e1e4ea;"></div><div class="a" style="left:1021.7px;top:539.0px;width:1.0px;height:40.8px;background:#e1e4ea;"></div><div class="a" style="left:1294.9px;top:539.0px;width:1.0px;height:40.8px;background:#e1e4ea;"></div><div class="a" style="left:1399.9px;top:539.0px;width:1.0px;height:40.8px;background:#e1e4ea;"></div><div class="a" style="left:1539.9px;top:539.0px;width:1.0px;height:40.8px;background:#e1e4ea;"></div><div class="a" style="left:1647.0px;top:539.0px;width:1.0px;height:40.8px;background:#e1e4ea;"></div><div class="a" style="left:1894.7px;top:539.0px;width:1.0px;height:40.8px;background:#e1e4ea;"></div><div class="a" style="left:2000.7px;top:539.0px;width:1.0px;height:40.8px;background:#e1e4ea;"></div><div class="a" style="left:2140.5px;top:539.0px;width:1.0px;height:40.8px;background:#e1e4ea;"></div><div class="a" style="left:2246.1px;top:539.0px;width:1.0px;height:40.8px;background:#e1e4ea;"></div><svg class="a" style="left:96.0px;top:555.5px;" width="13" height="8" viewBox="0 0 13 8"><polyline points="1,1 6.5,7 12,1" fill="none" stroke="#1d6ac6" stroke-width="2" stroke-linecap="round" stroke-linejoin="round"/></svg><div class="a t" style="top:551.1px;font-size:17.2px;line-height:17.2px;color:#2b313c;left:133.5px;">3210000 - Coffee Kiosk</div><div class="a t" style="top:551.0px;font-size:17.3px;line-height:17.3px;color:#2b313c;left:-993.7px;width:1500px;text-align:right;">$3,200,000,000</div><div class="a t" style="top:551.0px;font-size:17.3px;line-height:17.3px;color:#2b313c;left:-853.4px;width:1500px;text-align:right;">$3,200,000,000</div><div class="a t" style="top:551.0px;font-size:17.3px;line-height:17.3px;color:#2b313c;left:669.0px;">$3,220,000,000</div><div class="a t" style="top:551.0px;font-size:17.3px;line-height:17.3px;color:#1d6e1d;left:-615.8px;width:1500px;text-align:right;">1.94%</div><div class="a t" style="top:551.0px;font-size:17.3px;line-height:17.3px;color:#1d6e1d;left:906.5px;">$40,000,000</div><div class="a t" style="top:551.0px;font-size:17.3px;line-height:17.3px;color:#1d6e1d;left:-360.7px;width:1500px;text-align:right;">$40,000,000</div><div class="a t" style="top:551.0px;font-size:17.3px;line-height:17.3px;color:#2b313c;left:-215.6px;width:1500px;text-align:right;">$200,000,000</div><div class="a t" style="top:551.0px;font-size:17.3px;line-height:17.3px;color:#2b313c;left:-110.6px;width:1500px;text-align:right;">60.00%</div><div class="a t" style="top:551.0px;font-size:17.3px;line-height:17.3px;color:#2b313c;left:29.4px;width:1500px;text-align:right;">$3,220,000,000</div><div class="a t" style="top:551.0px;font-size:17.3px;line-height:17.3px;color:#2b313c;left:136.5px;width:1500px;text-align:right;">51.25%</div><div class="a t" style="top:551.0px;font-size:17.3px;line-height:17.3px;color:#1d6e1d;left:241.0px;width:1500px;text-align:right;">4.38%</div><div class="a t" style="top:551.0px;font-size:17.3px;line-height:17.3px;color:#2b313c;left:384.2px;width:1500px;text-align:right;">$200,000,000</div><div class="a t" style="top:551.0px;font-size:17.3px;line-height:17.3px;color:#2b313c;left:490.2px;width:1500px;text-align:right;">60.00%</div><div class="a t" style="top:551.0px;font-size:17.3px;line-height:17.3px;color:#2b313c;left:630.0px;width:1500px;text-align:right;">$3,220,000,000</div><div class="a t" style="top:551.0px;font-size:17.3px;line-height:17.3px;color:#2b313c;left:735.6px;width:1500px;text-align:right;">51.25%</div><div class="a t" style="top:551.0px;font-size:17.3px;line-height:17.3px;color:#1d6e1d;left:845.1px;width:1500px;text-align:right;">4.38%</div><div class="a t" style="top:551.0px;font-size:17.3px;line-height:17.3px;color:#2b313c;left:2384.7px;">$200,000,000</div><div class="a" style="left:82.0px;top:579.8px;width:2318.0px;height:40.8px;background:#e7f4fd;"></div><div class="a" style="left:1150.3px;top:579.8px;width:5.4px;height:40.8px;background:#dcdfe9;"></div><div class="a" style="left:1752.0px;top:579.8px;width:4.0px;height:40.8px;background:#dcdfe9;"></div><div class="a" style="left:2356.1px;top:579.8px;width:5.9px;height:40.8px;background:#dcdfe9;"></div><div class="a" style="left:82.0px;top:619.6px;width:2318.0px;height:1.0px;background:#e4e7ec;"></div><div class="a" style="left:121.5px;top:579.8px;width:1.0px;height:40.8px;background:#e1e4ea;"></div><div class="a" style="left:376.5px;top:579.8px;width:1.0px;height:40.8px;background:#e1e4ea;"></div><div class="a" style="left:516.8px;top:579.8px;width:1.0px;height:40.8px;background:#e1e4ea;"></div><div class="a" style="left:657.1px;top:579.8px;width:1.0px;height:40.8px;background:#e1e4ea;"></div><div class="a" style="left:797.6px;top:579.8px;width:1.0px;height:40.8px;background:#e1e4ea;"></div><div class="a" style="left:894.7px;top:579.8px;width:1.0px;height:40.8px;background:#e1e4ea;"></div><div class="a" style="left:1021.7px;top:579.8px;width:1.0px;height:40.8px;background:#e1e4ea;"></div><div class="a" style="left:1294.9px;top:579.8px;width:1.0px;height:40.8px;background:#e1e4ea;"></div><div class="a" style="left:1399.9px;top:579.8px;width:1.0px;height:40.8px;background:#e1e4ea;"></div><div class="a" style="left:1539.9px;top:579.8px;width:1.0px;height:40.8px;background:#e1e4ea;"></div><div class="a" style="left:1647.0px;top:579.8px;width:1.0px;height:40.8px;background:#e1e4ea;"></div><div class="a" style="left:1894.7px;top:579.8px;width:1.0px;height:40.8px;background:#e1e4ea;"></div><div class="a" style="left:2000.7px;top:579.8px;width:1.0px;height:40.8px;background:#e1e4ea;"></div><div class="a" style="left:2140.5px;top:579.8px;width:1.0px;height:40.8px;background:#e1e4ea;"></div><div class="a" style="left:2246.1px;top:579.8px;width:1.0px;height:40.8px;background:#e1e4ea;"></div><svg class="a" style="left:96.0px;top:596.3px;" width="13" height="8" viewBox="0 0 13 8"><polyline points="1,1 6.5,7 12,1" fill="none" stroke="#1d6ac6" stroke-width="2" stroke-linecap="round" stroke-linejoin="round"/></svg><div class="a t" style="top:591.9px;font-size:17.2px;line-height:17.2px;color:#2b313c;left:133.5px;">3110000 - General Merchan...</div><div class="a t" style="top:591.8px;font-size:17.3px;line-height:17.3px;color:#2b313c;left:-993.7px;width:1500px;text-align:right;">$3,200,000,000</div><div class="a t" style="top:591.8px;font-size:17.3px;line-height:17.3px;color:#2b313c;left:-853.4px;width:1500px;text-align:right;">$3,200,000,000</div><div class="a t" style="top:591.8px;font-size:17.3px;line-height:17.3px;color:#2b313c;left:669.0px;">$3,220,000,000</div><div class="a t" style="top:591.8px;font-size:17.3px;line-height:17.3px;color:#1d6e1d;left:-615.8px;width:1500px;text-align:right;">1.94%</div><div class="a t" style="top:591.8px;font-size:17.3px;line-height:17.3px;color:#1d6e1d;left:906.5px;">$40,000,000</div><div class="a t" style="top:591.8px;font-size:17.3px;line-height:17.3px;color:#1d6e1d;left:-360.7px;width:1500px;text-align:right;">$40,000,000</div><div class="a t" style="top:591.8px;font-size:17.3px;line-height:17.3px;color:#2b313c;left:-215.6px;width:1500px;text-align:right;">$200,000,000</div><div class="a t" style="top:591.8px;font-size:17.3px;line-height:17.3px;color:#2b313c;left:-110.6px;width:1500px;text-align:right;">60.00%</div><div class="a t" style="top:591.8px;font-size:17.3px;line-height:17.3px;color:#2b313c;left:29.4px;width:1500px;text-align:right;">$3,220,000,000</div><div class="a t" style="top:591.8px;font-size:17.3px;line-height:17.3px;color:#2b313c;left:136.5px;width:1500px;text-align:right;">51.25%</div><div class="a t" style="top:591.8px;font-size:17.3px;line-height:17.3px;color:#1d6e1d;left:241.0px;width:1500px;text-align:right;">4.38%</div><div class="a t" style="top:591.8px;font-size:17.3px;line-height:17.3px;color:#2b313c;left:384.2px;width:1500px;text-align:right;">$200,000,000</div><div class="a t" style="top:591.8px;font-size:17.3px;line-height:17.3px;color:#2b313c;left:490.2px;width:1500px;text-align:right;">60.00%</div><div class="a t" style="top:591.8px;font-size:17.3px;line-height:17.3px;color:#2b313c;left:630.0px;width:1500px;text-align:right;">$3,220,000,000</div><div class="a t" style="top:591.8px;font-size:17.3px;line-height:17.3px;color:#2b313c;left:735.6px;width:1500px;text-align:right;">51.25%</div><div class="a t" style="top:591.8px;font-size:17.3px;line-height:17.3px;color:#1d6e1d;left:845.1px;width:1500px;text-align:right;">4.38%</div><div class="a t" style="top:591.8px;font-size:17.3px;line-height:17.3px;color:#2b313c;left:2384.7px;">$200,000,000</div><div class="a" style="left:82.0px;top:620.6px;width:2318.0px;height:40.8px;background:#e7f4fd;"></div><div class="a" style="left:1150.3px;top:620.6px;width:5.4px;height:40.8px;background:#dcdfe9;"></div><div class="a" style="left:1752.0px;top:620.6px;width:4.0px;height:40.8px;background:#dcdfe9;"></div><div class="a" style="left:2356.1px;top:620.6px;width:5.9px;height:40.8px;background:#dcdfe9;"></div><div class="a" style="left:82.0px;top:660.4px;width:2318.0px;height:1.0px;background:#e4e7ec;"></div><div class="a" style="left:121.5px;top:620.6px;width:1.0px;height:40.8px;background:#e1e4ea;"></div><div class="a" style="left:376.5px;top:620.6px;width:1.0px;height:40.8px;background:#e1e4ea;"></div><div class="a" style="left:516.8px;top:620.6px;width:1.0px;height:40.8px;background:#e1e4ea;"></div><div class="a" style="left:657.1px;top:620.6px;width:1.0px;height:40.8px;background:#e1e4ea;"></div><div class="a" style="left:797.6px;top:620.6px;width:1.0px;height:40.8px;background:#e1e4ea;"></div><div class="a" style="left:894.7px;top:620.6px;width:1.0px;height:40.8px;background:#e1e4ea;"></div><div class="a" style="left:1021.7px;top:620.6px;width:1.0px;height:40.8px;background:#e1e4ea;"></div><div class="a" style="left:1294.9px;top:620.6px;width:1.0px;height:40.8px;background:#e1e4ea;"></div><div class="a" style="left:1399.9px;top:620.6px;width:1.0px;height:40.8px;background:#e1e4ea;"></div><div class="a" style="left:1539.9px;top:620.6px;width:1.0px;height:40.8px;background:#e1e4ea;"></div><div class="a" style="left:1647.0px;top:620.6px;width:1.0px;height:40.8px;background:#e1e4ea;"></div><div class="a" style="left:1894.7px;top:620.6px;width:1.0px;height:40.8px;background:#e1e4ea;"></div><div class="a" style="left:2000.7px;top:620.6px;width:1.0px;height:40.8px;background:#e1e4ea;"></div><div class="a" style="left:2140.5px;top:620.6px;width:1.0px;height:40.8px;background:#e1e4ea;"></div><div class="a" style="left:2246.1px;top:620.6px;width:1.0px;height:40.8px;background:#e1e4ea;"></div><svg class="a" style="left:96.0px;top:637.1px;" width="13" height="8" viewBox="0 0 13 8"><polyline points="1,7 6.5,1 12,7" fill="none" stroke="#1d6ac6" stroke-width="2" stroke-linecap="round" stroke-linejoin="round"/></svg><div class="a t" style="top:632.7px;font-size:17.2px;line-height:17.2px;color:#2b313c;left:133.5px;">3010000 - Grocery</div><div class="a t" style="top:632.6px;font-size:17.3px;line-height:17.3px;color:#2b313c;left:-993.7px;width:1500px;text-align:right;">$3,200,000,000</div><div class="a t" style="top:632.6px;font-size:17.3px;line-height:17.3px;color:#2b313c;left:-853.4px;width:1500px;text-align:right;">$3,200,000,000</div><div class="a t" style="top:632.6px;font-size:17.3px;line-height:17.3px;color:#2b313c;left:669.0px;">$3,220,000,000</div><div class="a t" style="top:632.6px;font-size:17.3px;line-height:17.3px;color:#1d6e1d;left:-615.8px;width:1500px;text-align:right;">1.94%</div><div class="a t" style="top:632.6px;font-size:17.3px;line-height:17.3px;color:#1d6e1d;left:906.5px;">$40,000,000</div><div class="a t" style="top:632.6px;font-size:17.3px;line-height:17.3px;color:#1d6e1d;left:-360.7px;width:1500px;text-align:right;">$40,000,000</div><div class="a t" style="top:632.6px;font-size:17.3px;line-height:17.3px;color:#2b313c;left:-215.6px;width:1500px;text-align:right;">$200,000,000</div><div class="a t" style="top:632.6px;font-size:17.3px;line-height:17.3px;color:#2b313c;left:-110.6px;width:1500px;text-align:right;">60.00%</div><div class="a t" style="top:632.6px;font-size:17.3px;line-height:17.3px;color:#2b313c;left:29.4px;width:1500px;text-align:right;">$3,220,000,000</div><div class="a t" style="top:632.6px;font-size:17.3px;line-height:17.3px;color:#2b313c;left:136.5px;width:1500px;text-align:right;">51.25%</div><div class="a t" style="top:632.6px;font-size:17.3px;line-height:17.3px;color:#1d6e1d;left:241.0px;width:1500px;text-align:right;">4.38%</div><div class="a t" style="top:632.6px;font-size:17.3px;line-height:17.3px;color:#2b313c;left:384.2px;width:1500px;text-align:right;">$200,000,000</div><div class="a t" style="top:632.6px;font-size:17.3px;line-height:17.3px;color:#2b313c;left:490.2px;width:1500px;text-align:right;">60.00%</div><div class="a t" style="top:632.6px;font-size:17.3px;line-height:17.3px;color:#2b313c;left:630.0px;width:1500px;text-align:right;">$3,220,000,000</div><div class="a t" style="top:632.6px;font-size:17.3px;line-height:17.3px;color:#2b313c;left:735.6px;width:1500px;text-align:right;">51.25%</div><div class="a t" style="top:632.6px;font-size:17.3px;line-height:17.3px;color:#1d6e1d;left:845.1px;width:1500px;text-align:right;">4.38%</div><div class="a t" style="top:632.6px;font-size:17.3px;line-height:17.3px;color:#2b313c;left:2384.7px;">$200,000,000</div><div class="a" style="left:82.0px;top:661.4px;width:2318.0px;height:40.8px;background:#f3f8fd;"></div><div class="a" style="left:1150.3px;top:661.4px;width:5.4px;height:40.8px;background:#dcdfe9;"></div><div class="a" style="left:1752.0px;top:661.4px;width:4.0px;height:40.8px;background:#dcdfe9;"></div><div class="a" style="left:2356.1px;top:661.4px;width:5.9px;height:40.8px;background:#dcdfe9;"></div><div class="a" style="left:82.0px;top:701.2px;width:2318.0px;height:1.0px;background:#e4e7ec;"></div><div class="a" style="left:121.5px;top:661.4px;width:1.0px;height:40.8px;background:#e1e4ea;"></div><div class="a" style="left:376.5px;top:661.4px;width:1.0px;height:40.8px;background:#e1e4ea;"></div><div class="a" style="left:516.8px;top:661.4px;width:1.0px;height:40.8px;background:#e1e4ea;"></div><div class="a" style="left:657.1px;top:661.4px;width:1.0px;height:40.8px;background:#e1e4ea;"></div><div class="a" style="left:797.6px;top:661.4px;width:1.0px;height:40.8px;background:#e1e4ea;"></div><div class="a" style="left:894.7px;top:661.4px;width:1.0px;height:40.8px;background:#e1e4ea;"></div><div class="a" style="left:1021.7px;top:661.4px;width:1.0px;height:40.8px;background:#e1e4ea;"></div><div class="a" style="left:1294.9px;top:661.4px;width:1.0px;height:40.8px;background:#e1e4ea;"></div><div class="a" style="left:1399.9px;top:661.4px;width:1.0px;height:40.8px;background:#e1e4ea;"></div><div class="a" style="left:1539.9px;top:661.4px;width:1.0px;height:40.8px;background:#e1e4ea;"></div><div class="a" style="left:1647.0px;top:661.4px;width:1.0px;height:40.8px;background:#e1e4ea;"></div><div class="a" style="left:1894.7px;top:661.4px;width:1.0px;height:40.8px;background:#e1e4ea;"></div><div class="a" style="left:2000.7px;top:661.4px;width:1.0px;height:40.8px;background:#e1e4ea;"></div><div class="a" style="left:2140.5px;top:661.4px;width:1.0px;height:40.8px;background:#e1e4ea;"></div><div class="a" style="left:2246.1px;top:661.4px;width:1.0px;height:40.8px;background:#e1e4ea;"></div><svg class="a" style="left:135.0px;top:674.4px;" width="15.3" height="15.3" viewBox="0 0 15.3 15.3"><rect x="0.8" y="0.8" width="13.700000000000001" height="13.700000000000001" rx="2" fill="none" stroke="#4a5568" stroke-width="1.6"/><line x1="3.825" y1="7.65" x2="11.475000000000001" y2="7.65" stroke="#4a5568" stroke-width="1.6"/><line x1="7.65" y1="3.825" x2="7.65" y2="11.475000000000001" stroke="#4a5568" stroke-width="1.6"/></svg><div class="a t" style="top:673.5px;font-size:17.2px;line-height:17.2px;color:#2b313c;left:158.5px;">Desk 02 - Baking and Cond</div><div class="a t" style="top:673.4px;font-size:17.3px;line-height:17.3px;color:#2b313c;left:-993.7px;width:1500px;text-align:right;">$3,200,000,000</div><div class="a t" style="top:673.4px;font-size:17.3px;line-height:17.3px;color:#2b313c;left:-853.4px;width:1500px;text-align:right;">$3,200,000,000</div><div class="a t" style="top:673.4px;font-size:17.3px;line-height:17.3px;color:#2b313c;left:669.0px;">$3,220,000,000</div><div class="a t" style="top:673.4px;font-size:17.3px;line-height:17.3px;color:#1d6e1d;left:-615.8px;width:1500px;text-align:right;">1.94%</div><div class="a t" style="top:673.4px;font-size:17.3px;line-height:17.3px;color:#1d6e1d;left:906.5px;">$40,000,000</div><div class="a t" style="top:673.4px;font-size:17.3px;line-height:17.3px;color:#1d6e1d;left:-360.7px;width:1500px;text-align:right;">$40,000,000</div><div class="a t" style="top:673.4px;font-size:17.3px;line-height:17.3px;color:#2b313c;left:-215.6px;width:1500px;text-align:right;">$200,000,000</div><div class="a t" style="top:673.4px;font-size:17.3px;line-height:17.3px;color:#2b313c;left:-110.6px;width:1500px;text-align:right;">60.00%</div><div class="a t" style="top:673.4px;font-size:17.3px;line-height:17.3px;color:#2b313c;left:29.4px;width:1500px;text-align:right;">$3,220,000,000</div><div class="a t" style="top:673.4px;font-size:17.3px;line-height:17.3px;color:#2b313c;left:136.5px;width:1500px;text-align:right;">51.25%</div><div class="a t" style="top:673.4px;font-size:17.3px;line-height:17.3px;color:#1d6e1d;left:241.0px;width:1500px;text-align:right;">4.38%</div><div class="a t" style="top:673.4px;font-size:17.3px;line-height:17.3px;color:#2b313c;left:384.2px;width:1500px;text-align:right;">$200,000,000</div><div class="a t" style="top:673.4px;font-size:17.3px;line-height:17.3px;color:#2b313c;left:490.2px;width:1500px;text-align:right;">60.00%</div><div class="a t" style="top:673.4px;font-size:17.3px;line-height:17.3px;color:#2b313c;left:630.0px;width:1500px;text-align:right;">$3,220,000,000</div><div class="a t" style="top:673.4px;font-size:17.3px;line-height:17.3px;color:#2b313c;left:735.6px;width:1500px;text-align:right;">51.25%</div><div class="a t" style="top:673.4px;font-size:17.3px;line-height:17.3px;color:#1d6e1d;left:845.1px;width:1500px;text-align:right;">4.38%</div><div class="a t" style="top:673.4px;font-size:17.3px;line-height:17.3px;color:#2b313c;left:2384.7px;">$200,000,000</div><div class="a" style="left:82.0px;top:702.2px;width:2318.0px;height:40.8px;background:#f3f8fd;"></div><div class="a" style="left:1150.3px;top:702.2px;width:5.4px;height:40.8px;background:#dcdfe9;"></div><div class="a" style="left:1752.0px;top:702.2px;width:4.0px;height:40.8px;background:#dcdfe9;"></div><div class="a" style="left:2356.1px;top:702.2px;width:5.9px;height:40.8px;background:#dcdfe9;"></div><div class="a" style="left:82.0px;top:742.0px;width:2318.0px;height:1.0px;background:#e4e7ec;"></div><div class="a" style="left:121.5px;top:702.2px;width:1.0px;height:40.8px;background:#e1e4ea;"></div><div class="a" style="left:376.5px;top:702.2px;width:1.0px;height:40.8px;background:#e1e4ea;"></div><div class="a" style="left:516.8px;top:702.2px;width:1.0px;height:40.8px;background:#e1e4ea;"></div><div class="a" style="left:657.1px;top:702.2px;width:1.0px;height:40.8px;background:#e1e4ea;"></div><div class="a" style="left:797.6px;top:702.2px;width:1.0px;height:40.8px;background:#e1e4ea;"></div><div class="a" style="left:894.7px;top:702.2px;width:1.0px;height:40.8px;background:#e1e4ea;"></div><div class="a" style="left:1021.7px;top:702.2px;width:1.0px;height:40.8px;background:#e1e4ea;"></div><div class="a" style="left:1294.9px;top:702.2px;width:1.0px;height:40.8px;background:#e1e4ea;"></div><div class="a" style="left:1399.9px;top:702.2px;width:1.0px;height:40.8px;background:#e1e4ea;"></div><div class="a" style="left:1539.9px;top:702.2px;width:1.0px;height:40.8px;background:#e1e4ea;"></div><div class="a" style="left:1647.0px;top:702.2px;width:1.0px;height:40.8px;background:#e1e4ea;"></div><div class="a" style="left:1894.7px;top:702.2px;width:1.0px;height:40.8px;background:#e1e4ea;"></div><div class="a" style="left:2000.7px;top:702.2px;width:1.0px;height:40.8px;background:#e1e4ea;"></div><div class="a" style="left:2140.5px;top:702.2px;width:1.0px;height:40.8px;background:#e1e4ea;"></div><div class="a" style="left:2246.1px;top:702.2px;width:1.0px;height:40.8px;background:#e1e4ea;"></div><svg class="a" style="left:135.0px;top:715.2px;" width="15.3" height="15.3" viewBox="0 0 15.3 15.3"><rect x="0.8" y="0.8" width="13.700000000000001" height="13.700000000000001" rx="2" fill="none" stroke="#4a5568" stroke-width="1.6"/><line x1="3.825" y1="7.65" x2="11.475000000000001" y2="7.65" stroke="#4a5568" stroke-width="1.6"/><line x1="7.65" y1="3.825" x2="7.65" y2="11.475000000000001" stroke="#4a5568" stroke-width="1.6"/></svg><div class="a t" style="top:714.3px;font-size:17.2px;line-height:17.2px;color:#2b313c;left:158.5px;">Desk 03 - All Beverages</div><div class="a t" style="top:714.2px;font-size:17.3px;line-height:17.3px;color:#2b313c;left:-993.7px;width:1500px;text-align:right;">$3,200,000,000</div><div class="a t" style="top:714.2px;font-size:17.3px;line-height:17.3px;color:#2b313c;left:-853.4px;width:1500px;text-align:right;">$3,200,000,000</div><div class="a t" style="top:714.2px;font-size:17.3px;line-height:17.3px;color:#2b313c;left:669.0px;">$3,220,000,000</div><div class="a t" style="top:714.2px;font-size:17.3px;line-height:17.3px;color:#1d6e1d;left:-615.8px;width:1500px;text-align:right;">1.94%</div><div class="a t" style="top:714.2px;font-size:17.3px;line-height:17.3px;color:#1d6e1d;left:906.5px;">$40,000,000</div><div class="a t" style="top:714.2px;font-size:17.3px;line-height:17.3px;color:#1d6e1d;left:-360.7px;width:1500px;text-align:right;">$40,000,000</div><div class="a t" style="top:714.2px;font-size:17.3px;line-height:17.3px;color:#2b313c;left:-215.6px;width:1500px;text-align:right;">$200,000,000</div><div class="a t" style="top:714.2px;font-size:17.3px;line-height:17.3px;color:#2b313c;left:-110.6px;width:1500px;text-align:right;">60.00%</div><div class="a t" style="top:714.2px;font-size:17.3px;line-height:17.3px;color:#2b313c;left:29.4px;width:1500px;text-align:right;">$3,220,000,000</div><div class="a t" style="top:714.2px;font-size:17.3px;line-height:17.3px;color:#2b313c;left:136.5px;width:1500px;text-align:right;">51.25%</div><div class="a t" style="top:714.2px;font-size:17.3px;line-height:17.3px;color:#1d6e1d;left:241.0px;width:1500px;text-align:right;">4.38%</div><div class="a t" style="top:714.2px;font-size:17.3px;line-height:17.3px;color:#2b313c;left:384.2px;width:1500px;text-align:right;">$200,000,000</div><div class="a t" style="top:714.2px;font-size:17.3px;line-height:17.3px;color:#2b313c;left:490.2px;width:1500px;text-align:right;">60.00%</div><div class="a t" style="top:714.2px;font-size:17.3px;line-height:17.3px;color:#2b313c;left:630.0px;width:1500px;text-align:right;">$3,220,000,000</div><div class="a t" style="top:714.2px;font-size:17.3px;line-height:17.3px;color:#2b313c;left:735.6px;width:1500px;text-align:right;">51.25%</div><div class="a t" style="top:714.2px;font-size:17.3px;line-height:17.3px;color:#1d6e1d;left:845.1px;width:1500px;text-align:right;">4.38%</div><div class="a t" style="top:714.2px;font-size:17.3px;line-height:17.3px;color:#2b313c;left:2384.7px;">$200,000,000</div><div class="a" style="left:82.0px;top:743.0px;width:2318.0px;height:40.8px;background:#f3f8fd;"></div><div class="a" style="left:1150.3px;top:743.0px;width:5.4px;height:40.8px;background:#dcdfe9;"></div><div class="a" style="left:1752.0px;top:743.0px;width:4.0px;height:40.8px;background:#dcdfe9;"></div><div class="a" style="left:2356.1px;top:743.0px;width:5.9px;height:40.8px;background:#dcdfe9;"></div><div class="a" style="left:82.0px;top:782.8px;width:2318.0px;height:1.0px;background:#e4e7ec;"></div><div class="a" style="left:121.5px;top:743.0px;width:1.0px;height:40.8px;background:#e1e4ea;"></div><div class="a" style="left:376.5px;top:743.0px;width:1.0px;height:40.8px;background:#e1e4ea;"></div><div class="a" style="left:516.8px;top:743.0px;width:1.0px;height:40.8px;background:#e1e4ea;"></div><div class="a" style="left:657.1px;top:743.0px;width:1.0px;height:40.8px;background:#e1e4ea;"></div><div class="a" style="left:797.6px;top:743.0px;width:1.0px;height:40.8px;background:#e1e4ea;"></div><div class="a" style="left:894.7px;top:743.0px;width:1.0px;height:40.8px;background:#e1e4ea;"></div><div class="a" style="left:1021.7px;top:743.0px;width:1.0px;height:40.8px;background:#e1e4ea;"></div><div class="a" style="left:1294.9px;top:743.0px;width:1.0px;height:40.8px;background:#e1e4ea;"></div><div class="a" style="left:1399.9px;top:743.0px;width:1.0px;height:40.8px;background:#e1e4ea;"></div><div class="a" style="left:1539.9px;top:743.0px;width:1.0px;height:40.8px;background:#e1e4ea;"></div><div class="a" style="left:1647.0px;top:743.0px;width:1.0px;height:40.8px;background:#e1e4ea;"></div><div class="a" style="left:1894.7px;top:743.0px;width:1.0px;height:40.8px;background:#e1e4ea;"></div><div class="a" style="left:2000.7px;top:743.0px;width:1.0px;height:40.8px;background:#e1e4ea;"></div><div class="a" style="left:2140.5px;top:743.0px;width:1.0px;height:40.8px;background:#e1e4ea;"></div><div class="a" style="left:2246.1px;top:743.0px;width:1.0px;height:40.8px;background:#e1e4ea;"></div><svg class="a" style="left:135.0px;top:756.0px;" width="15.3" height="15.3" viewBox="0 0 15.3 15.3"><rect x="0.8" y="0.8" width="13.700000000000001" height="13.700000000000001" rx="2" fill="none" stroke="#4a5568" stroke-width="1.6"/><line x1="3.825" y1="7.65" x2="11.475000000000001" y2="7.65" stroke="#4a5568" stroke-width="1.6"/><line x1="7.65" y1="3.825" x2="7.65" y2="11.475000000000001" stroke="#4a5568" stroke-width="1.6"/></svg><div class="a t" style="top:755.1px;font-size:17.2px;line-height:17.2px;color:#2b313c;left:158.5px;">Desk 05 - Candy, Seasonal</div><div class="a t" style="top:755.0px;font-size:17.3px;line-height:17.3px;color:#2b313c;left:-993.7px;width:1500px;text-align:right;">$3,200,000,000</div><div class="a t" style="top:755.0px;font-size:17.3px;line-height:17.3px;color:#2b313c;left:-853.4px;width:1500px;text-align:right;">$3,200,000,000</div><div class="a t" style="top:755.0px;font-size:17.3px;line-height:17.3px;color:#2b313c;left:669.0px;">$3,220,000,000</div><div class="a t" style="top:755.0px;font-size:17.3px;line-height:17.3px;color:#1d6e1d;left:-615.8px;width:1500px;text-align:right;">1.94%</div><div class="a t" style="top:755.0px;font-size:17.3px;line-height:17.3px;color:#1d6e1d;left:906.5px;">$40,000,000</div><div class="a t" style="top:755.0px;font-size:17.3px;line-height:17.3px;color:#1d6e1d;left:-360.7px;width:1500px;text-align:right;">$40,000,000</div><div class="a t" style="top:755.0px;font-size:17.3px;line-height:17.3px;color:#2b313c;left:-215.6px;width:1500px;text-align:right;">$200,000,000</div><div class="a t" style="top:755.0px;font-size:17.3px;line-height:17.3px;color:#2b313c;left:-110.6px;width:1500px;text-align:right;">60.00%</div><div class="a t" style="top:755.0px;font-size:17.3px;line-height:17.3px;color:#2b313c;left:29.4px;width:1500px;text-align:right;">$3,220,000,000</div><div class="a t" style="top:755.0px;font-size:17.3px;line-height:17.3px;color:#2b313c;left:136.5px;width:1500px;text-align:right;">51.25%</div><div class="a t" style="top:755.0px;font-size:17.3px;line-height:17.3px;color:#1d6e1d;left:241.0px;width:1500px;text-align:right;">4.38%</div><div class="a t" style="top:755.0px;font-size:17.3px;line-height:17.3px;color:#2b313c;left:384.2px;width:1500px;text-align:right;">$200,000,000</div><div class="a t" style="top:755.0px;font-size:17.3px;line-height:17.3px;color:#2b313c;left:490.2px;width:1500px;text-align:right;">60.00%</div><div class="a t" style="top:755.0px;font-size:17.3px;line-height:17.3px;color:#2b313c;left:630.0px;width:1500px;text-align:right;">$3,220,000,000</div><div class="a t" style="top:755.0px;font-size:17.3px;line-height:17.3px;color:#2b313c;left:735.6px;width:1500px;text-align:right;">51.25%</div><div class="a t" style="top:755.0px;font-size:17.3px;line-height:17.3px;color:#1d6e1d;left:845.1px;width:1500px;text-align:right;">4.38%</div><div class="a t" style="top:755.0px;font-size:17.3px;line-height:17.3px;color:#2b313c;left:2384.7px;">$200,000,000</div><div class="a" style="left:82.0px;top:783.8px;width:2318.0px;height:40.8px;background:#f3f8fd;"></div><div class="a" style="left:1150.3px;top:783.8px;width:5.4px;height:40.8px;background:#dcdfe9;"></div><div class="a" style="left:1752.0px;top:783.8px;width:4.0px;height:40.8px;background:#dcdfe9;"></div><div class="a" style="left:2356.1px;top:783.8px;width:5.9px;height:40.8px;background:#dcdfe9;"></div><div class="a" style="left:82.0px;top:823.6px;width:2318.0px;height:1.0px;background:#e4e7ec;"></div><div class="a" style="left:121.5px;top:783.8px;width:1.0px;height:40.8px;background:#e1e4ea;"></div><div class="a" style="left:376.5px;top:783.8px;width:1.0px;height:40.8px;background:#e1e4ea;"></div><div class="a" style="left:516.8px;top:783.8px;width:1.0px;height:40.8px;background:#e1e4ea;"></div><div class="a" style="left:657.1px;top:783.8px;width:1.0px;height:40.8px;background:#e1e4ea;"></div><div class="a" style="left:797.6px;top:783.8px;width:1.0px;height:40.8px;background:#e1e4ea;"></div><div class="a" style="left:894.7px;top:783.8px;width:1.0px;height:40.8px;background:#e1e4ea;"></div><div class="a" style="left:1021.7px;top:783.8px;width:1.0px;height:40.8px;background:#e1e4ea;"></div><div class="a" style="left:1294.9px;top:783.8px;width:1.0px;height:40.8px;background:#e1e4ea;"></div><div class="a" style="left:1399.9px;top:783.8px;width:1.0px;height:40.8px;background:#e1e4ea;"></div><div class="a" style="left:1539.9px;top:783.8px;width:1.0px;height:40.8px;background:#e1e4ea;"></div><div class="a" style="left:1647.0px;top:783.8px;width:1.0px;height:40.8px;background:#e1e4ea;"></div><div class="a" style="left:1894.7px;top:783.8px;width:1.0px;height:40.8px;background:#e1e4ea;"></div><div class="a" style="left:2000.7px;top:783.8px;width:1.0px;height:40.8px;background:#e1e4ea;"></div><div class="a" style="left:2140.5px;top:783.8px;width:1.0px;height:40.8px;background:#e1e4ea;"></div><div class="a" style="left:2246.1px;top:783.8px;width:1.0px;height:40.8px;background:#e1e4ea;"></div><svg class="a" style="left:135.0px;top:796.8px;" width="15.3" height="15.3" viewBox="0 0 15.3 15.3"><rect x="0.8" y="0.8" width="13.700000000000001" height="13.700000000000001" rx="2" fill="none" stroke="#4a5568" stroke-width="1.6"/><line x1="3.825" y1="7.65" x2="11.475000000000001" y2="7.65" stroke="#4a5568" stroke-width="1.6"/></svg><div class="a t" style="top:795.9px;font-size:17.2px;line-height:17.2px;color:#2b313c;left:158.5px;">Desk 06 - Refrigerated D...</div><div class="a t" style="top:795.8px;font-size:17.3px;line-height:17.3px;color:#2b313c;left:-993.7px;width:1500px;text-align:right;">$3,200,000,000</div><div class="a t" style="top:795.8px;font-size:17.3px;line-height:17.3px;color:#2b313c;left:-853.4px;width:1500px;text-align:right;">$3,200,000,000</div><div class="a t" style="top:795.8px;font-size:17.3px;line-height:17.3px;color:#2b313c;left:669.0px;">$3,220,000,000</div><div class="a t" style="top:795.8px;font-size:17.3px;line-height:17.3px;color:#1d6e1d;left:-615.8px;width:1500px;text-align:right;">1.94%</div><div class="a t" style="top:795.8px;font-size:17.3px;line-height:17.3px;color:#1d6e1d;left:906.5px;">$40,000,000</div><div class="a t" style="top:795.8px;font-size:17.3px;line-height:17.3px;color:#1d6e1d;left:-360.7px;width:1500px;text-align:right;">$40,000,000</div><div class="a t" style="top:795.8px;font-size:17.3px;line-height:17.3px;color:#2b313c;left:-215.6px;width:1500px;text-align:right;">$200,000,000</div><div class="a t" style="top:795.8px;font-size:17.3px;line-height:17.3px;color:#2b313c;left:-110.6px;width:1500px;text-align:right;">60.00%</div><div class="a t" style="top:795.8px;font-size:17.3px;line-height:17.3px;color:#2b313c;left:29.4px;width:1500px;text-align:right;">$3,220,000,000</div><div class="a t" style="top:795.8px;font-size:17.3px;line-height:17.3px;color:#2b313c;left:136.5px;width:1500px;text-align:right;">51.25%</div><div class="a t" style="top:795.8px;font-size:17.3px;line-height:17.3px;color:#1d6e1d;left:241.0px;width:1500px;text-align:right;">4.38%</div><div class="a t" style="top:795.8px;font-size:17.3px;line-height:17.3px;color:#2b313c;left:384.2px;width:1500px;text-align:right;">$200,000,000</div><div class="a t" style="top:795.8px;font-size:17.3px;line-height:17.3px;color:#2b313c;left:490.2px;width:1500px;text-align:right;">60.00%</div><div class="a t" style="top:795.8px;font-size:17.3px;line-height:17.3px;color:#2b313c;left:630.0px;width:1500px;text-align:right;">$3,220,000,000</div><div class="a t" style="top:795.8px;font-size:17.3px;line-height:17.3px;color:#2b313c;left:735.6px;width:1500px;text-align:right;">51.25%</div><div class="a t" style="top:795.8px;font-size:17.3px;line-height:17.3px;color:#1d6e1d;left:845.1px;width:1500px;text-align:right;">4.38%</div><div class="a t" style="top:795.8px;font-size:17.3px;line-height:17.3px;color:#2b313c;left:2384.7px;">$200,000,000</div><div class="a" style="left:82.0px;top:824.6px;width:2318.0px;height:40.8px;background:#f6fbef;"></div><div class="a" style="left:1150.3px;top:824.6px;width:5.4px;height:40.8px;background:#dcdfe9;"></div><div class="a" style="left:1752.0px;top:824.6px;width:4.0px;height:40.8px;background:#dcdfe9;"></div><div class="a" style="left:2356.1px;top:824.6px;width:5.9px;height:40.8px;background:#dcdfe9;"></div><div class="a" style="left:82.0px;top:864.4px;width:2318.0px;height:1.0px;background:#e4e7ec;"></div><div class="a" style="left:121.5px;top:824.6px;width:1.0px;height:40.8px;background:#e1e4ea;"></div><div class="a" style="left:376.5px;top:824.6px;width:1.0px;height:40.8px;background:#e1e4ea;"></div><div class="a" style="left:516.8px;top:824.6px;width:1.0px;height:40.8px;background:#e1e4ea;"></div><div class="a" style="left:657.1px;top:824.6px;width:1.0px;height:40.8px;background:#e1e4ea;"></div><div class="a" style="left:797.6px;top:824.6px;width:1.0px;height:40.8px;background:#e1e4ea;"></div><div class="a" style="left:894.7px;top:824.6px;width:1.0px;height:40.8px;background:#e1e4ea;"></div><div class="a" style="left:1021.7px;top:824.6px;width:1.0px;height:40.8px;background:#e1e4ea;"></div><div class="a" style="left:1294.9px;top:824.6px;width:1.0px;height:40.8px;background:#e1e4ea;"></div><div class="a" style="left:1399.9px;top:824.6px;width:1.0px;height:40.8px;background:#e1e4ea;"></div><div class="a" style="left:1539.9px;top:824.6px;width:1.0px;height:40.8px;background:#e1e4ea;"></div><div class="a" style="left:1647.0px;top:824.6px;width:1.0px;height:40.8px;background:#e1e4ea;"></div><div class="a" style="left:1894.7px;top:824.6px;width:1.0px;height:40.8px;background:#e1e4ea;"></div><div class="a" style="left:2000.7px;top:824.6px;width:1.0px;height:40.8px;background:#e1e4ea;"></div><div class="a" style="left:2140.5px;top:824.6px;width:1.0px;height:40.8px;background:#e1e4ea;"></div><div class="a" style="left:2246.1px;top:824.6px;width:1.0px;height:40.8px;background:#e1e4ea;"></div><svg class="a" style="left:135.0px;top:837.3px;" width="15.5" height="15.5" viewBox="0 0 15.5 15.5"><circle cx="7.75" cy="7.75" r="6.75" fill="none" stroke="#1a9c2a" stroke-width="1.7"/><polyline points="4.6499999999999995,8.06 6.9750000000000005,10.385 11.004999999999999,5.735" fill="none" stroke="#1a9c2a" stroke-width="1.7" stroke-linecap="round" stroke-linejoin="round"/></svg><div class="a t" style="top:836.7px;font-size:17.2px;line-height:17.2px;color:#2b313c;left:158.5px;">Period 1</div><div class="a t" style="top:836.6px;font-size:17.3px;line-height:17.3px;color:#2b313c;left:-993.7px;width:1500px;text-align:right;">$800,000,000</div><div class="a t" style="top:836.6px;font-size:17.3px;line-height:17.3px;color:#2b313c;left:-853.4px;width:1500px;text-align:right;">$800,000,000</div><div class="a t" style="top:836.6px;font-size:17.3px;line-height:17.3px;color:#2b313c;left:669.0px;">$820,000,000</div><div class="a t" style="top:836.6px;font-size:17.3px;line-height:17.3px;color:#1d6e1d;left:-615.8px;width:1500px;text-align:right;">1.94%</div><div class="a t" style="top:836.6px;font-size:17.3px;line-height:17.3px;color:#1d6e1d;left:906.5px;">$20,000,000</div><div class="a t" style="top:836.6px;font-size:17.3px;line-height:17.3px;color:#1d6e1d;left:-360.7px;width:1500px;text-align:right;">$20,000,000</div><div class="a t" style="top:836.6px;font-size:17.3px;line-height:17.3px;color:#2b313c;left:-215.6px;width:1500px;text-align:right;">$200,000,000</div><div class="a t" style="top:836.6px;font-size:17.3px;line-height:17.3px;color:#2b313c;left:-110.6px;width:1500px;text-align:right;">60.00%</div><div class="a t" style="top:836.6px;font-size:17.3px;line-height:17.3px;color:#2b313c;left:29.4px;width:1500px;text-align:right;">$820,000,000</div><div class="a t" style="top:836.6px;font-size:17.3px;line-height:17.3px;color:#2b313c;left:136.5px;width:1500px;text-align:right;">50.00%</div><div class="a t" style="top:836.6px;font-size:17.3px;line-height:17.3px;color:#1d6e1d;left:241.0px;width:1500px;text-align:right;">10.00%</div><div class="a t" style="top:836.6px;font-size:17.3px;line-height:17.3px;color:#2b313c;left:384.2px;width:1500px;text-align:right;">$200,000,000</div><div class="a t" style="top:836.6px;font-size:17.3px;line-height:17.3px;color:#2b313c;left:490.2px;width:1500px;text-align:right;">60.00%</div><div class="a t" style="top:836.6px;font-size:17.3px;line-height:17.3px;color:#2b313c;left:630.0px;width:1500px;text-align:right;">$820,000,000</div><div class="a t" style="top:836.6px;font-size:17.3px;line-height:17.3px;color:#2b313c;left:735.6px;width:1500px;text-align:right;">50.00%</div><div class="a t" style="top:836.6px;font-size:17.3px;line-height:17.3px;color:#1d6e1d;left:845.1px;width:1500px;text-align:right;">10.00%</div><div class="a t" style="top:836.6px;font-size:17.3px;line-height:17.3px;color:#2b313c;left:2384.7px;">$200,000,000</div><svg class="a" style="left:658.1px;top:825.1px;" width="13" height="13" viewBox="0 0 13 13"><polygon points="0,0 13,0 0,13" fill="#050505"/></svg><svg class="a" style="left:798.6px;top:825.1px;" width="13" height="13" viewBox="0 0 13 13"><polygon points="0,0 13,0 0,13" fill="#262b38"/></svg><svg class="a" style="left:895.7px;top:825.1px;" width="13" height="13" viewBox="0 0 13 13"><polygon points="0,0 13,0 0,13" fill="#262b38"/></svg><svg class="a" style="left:1022.7px;top:825.1px;" width="13" height="13" viewBox="0 0 13 13"><polygon points="0,0 13,0 0,13" fill="#262b38"/></svg><svg class="a" style="left:1400.9px;top:825.1px;" width="13" height="13" viewBox="0 0 13 13"><polygon points="0,0 13,0 0,13" fill="#050505"/></svg><svg class="a" style="left:1540.9px;top:825.1px;" width="13" height="13" viewBox="0 0 13 13"><polygon points="0,0 13,0 0,13" fill="#050505"/></svg><svg class="a" style="left:1648.0px;top:825.1px;" width="13" height="13" viewBox="0 0 13 13"><polygon points="0,0 13,0 0,13" fill="#262b38"/></svg><svg class="a" style="left:2001.7px;top:825.1px;" width="13" height="13" viewBox="0 0 13 13"><polygon points="0,0 13,0 0,13" fill="#050505"/></svg><svg class="a" style="left:2141.5px;top:825.1px;" width="13" height="13" viewBox="0 0 13 13"><polygon points="0,0 13,0 0,13" fill="#050505"/></svg><svg class="a" style="left:2247.1px;top:825.1px;" width="13" height="13" viewBox="0 0 13 13"><polygon points="0,0 13,0 0,13" fill="#262b38"/></svg><div class="a" style="left:82.0px;top:865.4px;width:2318.0px;height:40.8px;background:#fefefe;"></div><div class="a" style="left:1150.3px;top:865.4px;width:5.4px;height:40.8px;background:#dcdfe9;"></div><div class="a" style="left:1752.0px;top:865.4px;width:4.0px;height:40.8px;background:#dcdfe9;"></div><div class="a" style="left:2356.1px;top:865.4px;width:5.9px;height:40.8px;background:#dcdfe9;"></div><div class="a" style="left:82.0px;top:905.2px;width:2318.0px;height:1.0px;background:#e4e7ec;"></div><div class="a" style="left:121.5px;top:865.4px;width:1.0px;height:40.8px;background:#e1e4ea;"></div><div class="a" style="left:376.5px;top:865.4px;width:1.0px;height:40.8px;background:#e1e4ea;"></div><div class="a" style="left:516.8px;top:865.4px;width:1.0px;height:40.8px;background:#e1e4ea;"></div><div class="a" style="left:657.1px;top:865.4px;width:1.0px;height:40.8px;background:#e1e4ea;"></div><div class="a" style="left:797.6px;top:865.4px;width:1.0px;height:40.8px;background:#e1e4ea;"></div><div class="a" style="left:894.7px;top:865.4px;width:1.0px;height:40.8px;background:#e1e4ea;"></div><div class="a" style="left:1021.7px;top:865.4px;width:1.0px;height:40.8px;background:#e1e4ea;"></div><div class="a" style="left:1294.9px;top:865.4px;width:1.0px;height:40.8px;background:#e1e4ea;"></div><div class="a" style="left:1399.9px;top:865.4px;width:1.0px;height:40.8px;background:#e1e4ea;"></div><div class="a" style="left:1539.9px;top:865.4px;width:1.0px;height:40.8px;background:#e1e4ea;"></div><div class="a" style="left:1647.0px;top:865.4px;width:1.0px;height:40.8px;background:#e1e4ea;"></div><div class="a" style="left:1894.7px;top:865.4px;width:1.0px;height:40.8px;background:#e1e4ea;"></div><div class="a" style="left:2000.7px;top:865.4px;width:1.0px;height:40.8px;background:#e1e4ea;"></div><div class="a" style="left:2140.5px;top:865.4px;width:1.0px;height:40.8px;background:#e1e4ea;"></div><div class="a" style="left:2246.1px;top:865.4px;width:1.0px;height:40.8px;background:#e1e4ea;"></div><svg class="a" style="left:135.0px;top:878.1px;" width="15.5" height="15.5" viewBox="0 0 15.5 15.5"><circle cx="7.75" cy="7.75" r="6.75" fill="none" stroke="#1a9c2a" stroke-width="1.7"/><polyline points="4.6499999999999995,8.06 6.9750000000000005,10.385 11.004999999999999,5.735" fill="none" stroke="#1a9c2a" stroke-width="1.7" stroke-linecap="round" stroke-linejoin="round"/></svg><div class="a t" style="top:877.5px;font-size:17.2px;line-height:17.2px;color:#2b313c;left:158.5px;">Week 1 (03/20 - 03/27)</div><div class="a t" style="top:877.4px;font-size:17.3px;line-height:17.3px;color:#2b313c;left:-993.7px;width:1500px;text-align:right;">$200,000,000</div><div class="a t" style="top:877.4px;font-size:17.3px;line-height:17.3px;color:#2b313c;left:-853.4px;width:1500px;text-align:right;">$200,000,000</div><div class="a t" style="top:877.4px;font-size:17.3px;line-height:17.3px;color:#2b313c;left:669.0px;">$210,000,000</div><div class="a t" style="top:877.4px;font-size:17.3px;line-height:17.3px;color:#1d6e1d;left:-615.8px;width:1500px;text-align:right;">1.94%</div><div class="a t" style="top:877.4px;font-size:17.3px;line-height:17.3px;color:#1d6e1d;left:906.5px;">$10,000,000</div><div class="a t" style="top:877.4px;font-size:17.3px;line-height:17.3px;color:#1d6e1d;left:-360.7px;width:1500px;text-align:right;">$10,000,000</div><div class="a t" style="top:877.4px;font-size:17.3px;line-height:17.3px;color:#2b313c;left:-215.6px;width:1500px;text-align:right;">$200,000,000</div><div class="a t" style="top:877.4px;font-size:17.3px;line-height:17.3px;color:#2b313c;left:-110.6px;width:1500px;text-align:right;">60.00%</div><div class="a t" style="top:877.4px;font-size:17.3px;line-height:17.3px;color:#2b313c;left:29.4px;width:1500px;text-align:right;">$200,000,000</div><div class="a t" style="top:877.4px;font-size:17.3px;line-height:17.3px;color:#2b313c;left:136.5px;width:1500px;text-align:right;">50.00%</div><div class="a t" style="top:877.4px;font-size:17.3px;line-height:17.3px;color:#1d6e1d;left:241.0px;width:1500px;text-align:right;">10.00%</div><div class="a t" style="top:877.4px;font-size:17.3px;line-height:17.3px;color:#2b313c;left:384.2px;width:1500px;text-align:right;">$200,000,000</div><div class="a t" style="top:877.4px;font-size:17.3px;line-height:17.3px;color:#2b313c;left:490.2px;width:1500px;text-align:right;">60.00%</div><div class="a t" style="top:877.4px;font-size:17.3px;line-height:17.3px;color:#2b313c;left:630.0px;width:1500px;text-align:right;">$200,000,000</div><div class="a t" style="top:877.4px;font-size:17.3px;line-height:17.3px;color:#2b313c;left:735.6px;width:1500px;text-align:right;">50.00%</div><div class="a t" style="top:877.4px;font-size:17.3px;line-height:17.3px;color:#1d6e1d;left:845.1px;width:1500px;text-align:right;">10.00%</div><div class="a t" style="top:877.4px;font-size:17.3px;line-height:17.3px;color:#2b313c;left:2384.7px;">$200,000,000</div><svg class="a" style="left:658.1px;top:865.9px;" width="13" height="13" viewBox="0 0 13 13"><polygon points="0,0 13,0 0,13" fill="#262b38"/></svg><svg class="a" style="left:798.6px;top:865.9px;" width="13" height="13" viewBox="0 0 13 13"><polygon points="0,0 13,0 0,13" fill="#262b38"/></svg><svg class="a" style="left:895.7px;top:865.9px;" width="13" height="13" viewBox="0 0 13 13"><polygon points="0,0 13,0 0,13" fill="#262b38"/></svg><svg class="a" style="left:1022.7px;top:865.9px;" width="13" height="13" viewBox="0 0 13 13"><polygon points="0,0 13,0 0,13" fill="#262b38"/></svg><svg class="a" style="left:1400.9px;top:865.9px;" width="13" height="13" viewBox="0 0 13 13"><polygon points="0,0 13,0 0,13" fill="#262b38"/></svg><svg class="a" style="left:1540.9px;top:865.9px;" width="13" height="13" viewBox="0 0 13 13"><polygon points="0,0 13,0 0,13" fill="#262b38"/></svg><svg class="a" style="left:1648.0px;top:865.9px;" width="13" height="13" viewBox="0 0 13 13"><polygon points="0,0 13,0 0,13" fill="#262b38"/></svg><svg class="a" style="left:2001.7px;top:865.9px;" width="13" height="13" viewBox="0 0 13 13"><polygon points="0,0 13,0 0,13" fill="#262b38"/></svg><svg class="a" style="left:2141.5px;top:865.9px;" width="13" height="13" viewBox="0 0 13 13"><polygon points="0,0 13,0 0,13" fill="#262b38"/></svg><svg class="a" style="left:2247.1px;top:865.9px;" width="13" height="13" viewBox="0 0 13 13"><polygon points="0,0 13,0 0,13" fill="#262b38"/></svg><div class="a" style="left:82.0px;top:906.2px;width:2318.0px;height:40.8px;background:#fefefe;"></div><div class="a" style="left:1150.3px;top:906.2px;width:5.4px;height:40.8px;background:#dcdfe9;"></div><div class="a" style="left:1752.0px;top:906.2px;width:4.0px;height:40.8px;background:#dcdfe9;"></div><div class="a" style="left:2356.1px;top:906.2px;width:5.9px;height:40.8px;background:#dcdfe9;"></div><div class="a" style="left:82.0px;top:946.0px;width:2318.0px;height:1.0px;background:#e4e7ec;"></div><div class="a" style="left:121.5px;top:906.2px;width:1.0px;height:40.8px;background:#e1e4ea;"></div><div class="a" style="left:376.5px;top:906.2px;width:1.0px;height:40.8px;background:#e1e4ea;"></div><div class="a" style="left:516.8px;top:906.2px;width:1.0px;height:40.8px;background:#e1e4ea;"></div><div class="a" style="left:657.1px;top:906.2px;width:1.0px;height:40.8px;background:#e1e4ea;"></div><div class="a" style="left:797.6px;top:906.2px;width:1.0px;height:40.8px;background:#e1e4ea;"></div><div class="a" style="left:894.7px;top:906.2px;width:1.0px;height:40.8px;background:#e1e4ea;"></div><div class="a" style="left:1021.7px;top:906.2px;width:1.0px;height:40.8px;background:#e1e4ea;"></div><div class="a" style="left:1294.9px;top:906.2px;width:1.0px;height:40.8px;background:#e1e4ea;"></div><div class="a" style="left:1399.9px;top:906.2px;width:1.0px;height:40.8px;background:#e1e4ea;"></div><div class="a" style="left:1539.9px;top:906.2px;width:1.0px;height:40.8px;background:#e1e4ea;"></div><div class="a" style="left:1647.0px;top:906.2px;width:1.0px;height:40.8px;background:#e1e4ea;"></div><div class="a" style="left:1894.7px;top:906.2px;width:1.0px;height:40.8px;background:#e1e4ea;"></div><div class="a" style="left:2000.7px;top:906.2px;width:1.0px;height:40.8px;background:#e1e4ea;"></div><div class="a" style="left:2140.5px;top:906.2px;width:1.0px;height:40.8px;background:#e1e4ea;"></div><div class="a" style="left:2246.1px;top:906.2px;width:1.0px;height:40.8px;background:#e1e4ea;"></div><svg class="a" style="left:135.0px;top:918.9px;" width="15.5" height="15.5" viewBox="0 0 15.5 15.5"><circle cx="7.75" cy="7.75" r="6.75" fill="none" stroke="#1a9c2a" stroke-width="1.7"/><polyline points="4.6499999999999995,8.06 6.9750000000000005,10.385 11.004999999999999,5.735" fill="none" stroke="#1a9c2a" stroke-width="1.7" stroke-linecap="round" stroke-linejoin="round"/></svg><div class="a t" style="top:918.3px;font-size:17.2px;line-height:17.2px;color:#2b313c;left:158.5px;">Week 2 (03/20 - 03/27)</div><div class="a t" style="top:918.2px;font-size:17.3px;line-height:17.3px;color:#2b313c;left:-993.7px;width:1500px;text-align:right;">$200,000,000</div><div class="a t" style="top:918.2px;font-size:17.3px;line-height:17.3px;color:#2b313c;left:-853.4px;width:1500px;text-align:right;">$200,000,000</div><div class="a t" style="top:918.2px;font-size:17.3px;line-height:17.3px;color:#2b313c;left:669.0px;">$190,000,000</div><div class="a t" style="top:918.2px;font-size:17.3px;line-height:17.3px;color:#a62a1a;left:-615.8px;width:1500px;text-align:right;">-1.94%</div><div class="a t" style="top:918.2px;font-size:17.3px;line-height:17.3px;color:#a62a1a;left:906.5px;">($10,000,000)</div><div class="a t" style="top:918.2px;font-size:17.3px;line-height:17.3px;color:#a62a1a;left:-360.7px;width:1500px;text-align:right;">($10,000,000)</div><div class="a t" style="top:918.2px;font-size:17.3px;line-height:17.3px;color:#2b313c;left:-215.6px;width:1500px;text-align:right;">$200,000,000</div><div class="a t" style="top:918.2px;font-size:17.3px;line-height:17.3px;color:#2b313c;left:-110.6px;width:1500px;text-align:right;">60.00%</div><div class="a t" style="top:918.2px;font-size:17.3px;line-height:17.3px;color:#2b313c;left:29.4px;width:1500px;text-align:right;">$200,000,000</div><div class="a t" style="top:918.2px;font-size:17.3px;line-height:17.3px;color:#2b313c;left:136.5px;width:1500px;text-align:right;">50.00%</div><div class="a t" style="top:918.2px;font-size:17.3px;line-height:17.3px;color:#1d6e1d;left:241.0px;width:1500px;text-align:right;">10.00%</div><div class="a t" style="top:918.2px;font-size:17.3px;line-height:17.3px;color:#2b313c;left:384.2px;width:1500px;text-align:right;">$200,000,000</div><div class="a t" style="top:918.2px;font-size:17.3px;line-height:17.3px;color:#2b313c;left:490.2px;width:1500px;text-align:right;">60.00%</div><div class="a t" style="top:918.2px;font-size:17.3px;line-height:17.3px;color:#2b313c;left:630.0px;width:1500px;text-align:right;">$200,000,000</div><div class="a t" style="top:918.2px;font-size:17.3px;line-height:17.3px;color:#2b313c;left:735.6px;width:1500px;text-align:right;">50.00%</div><div class="a t" style="top:918.2px;font-size:17.3px;line-height:17.3px;color:#1d6e1d;left:845.1px;width:1500px;text-align:right;">10.00%</div><div class="a t" style="top:918.2px;font-size:17.3px;line-height:17.3px;color:#2b313c;left:2384.7px;">$200,000,000</div><svg class="a" style="left:658.1px;top:906.7px;" width="13" height="13" viewBox="0 0 13 13"><polygon points="0,0 13,0 0,13" fill="#262b38"/></svg><svg class="a" style="left:798.6px;top:906.7px;" width="13" height="13" viewBox="0 0 13 13"><polygon points="0,0 13,0 0,13" fill="#262b38"/></svg><svg class="a" style="left:895.7px;top:906.7px;" width="13" height="13" viewBox="0 0 13 13"><polygon points="0,0 13,0 0,13" fill="#262b38"/></svg><svg class="a" style="left:1022.7px;top:906.7px;" width="13" height="13" viewBox="0 0 13 13"><polygon points="0,0 13,0 0,13" fill="#262b38"/></svg><svg class="a" style="left:1400.9px;top:906.7px;" width="13" height="13" viewBox="0 0 13 13"><polygon points="0,0 13,0 0,13" fill="#262b38"/></svg><svg class="a" style="left:1540.9px;top:906.7px;" width="13" height="13" viewBox="0 0 13 13"><polygon points="0,0 13,0 0,13" fill="#262b38"/></svg><svg class="a" style="left:1648.0px;top:906.7px;" width="13" height="13" viewBox="0 0 13 13"><polygon points="0,0 13,0 0,13" fill="#262b38"/></svg><svg class="a" style="left:2001.7px;top:906.7px;" width="13" height="13" viewBox="0 0 13 13"><polygon points="0,0 13,0 0,13" fill="#262b38"/></svg><svg class="a" style="left:2141.5px;top:906.7px;" width="13" height="13" viewBox="0 0 13 13"><polygon points="0,0 13,0 0,13" fill="#262b38"/></svg><svg class="a" style="left:2247.1px;top:906.7px;" width="13" height="13" viewBox="0 0 13 13"><polygon points="0,0 13,0 0,13" fill="#262b38"/></svg><div class="a" style="left:82.0px;top:947.0px;width:2318.0px;height:40.8px;background:#fefefe;"></div><div class="a" style="left:1150.3px;top:947.0px;width:5.4px;height:40.8px;background:#dcdfe9;"></div><div class="a" style="left:1752.0px;top:947.0px;width:4.0px;height:40.8px;background:#dcdfe9;"></div><div class="a" style="left:2356.1px;top:947.0px;width:5.9px;height:40.8px;background:#dcdfe9;"></div><div class="a" style="left:82.0px;top:986.8px;width:2318.0px;height:1.0px;background:#e4e7ec;"></div><div class="a" style="left:121.5px;top:947.0px;width:1.0px;height:40.8px;background:#e1e4ea;"></div><div class="a" style="left:376.5px;top:947.0px;width:1.0px;height:40.8px;background:#e1e4ea;"></div><div class="a" style="left:516.8px;top:947.0px;width:1.0px;height:40.8px;background:#e1e4ea;"></div><div class="a" style="left:657.1px;top:947.0px;width:1.0px;height:40.8px;background:#e1e4ea;"></div><div class="a" style="left:797.6px;top:947.0px;width:1.0px;height:40.8px;background:#e1e4ea;"></div><div class="a" style="left:894.7px;top:947.0px;width:1.0px;height:40.8px;background:#e1e4ea;"></div><div class="a" style="left:1021.7px;top:947.0px;width:1.0px;height:40.8px;background:#e1e4ea;"></div><div class="a" style="left:1294.9px;top:947.0px;width:1.0px;height:40.8px;background:#e1e4ea;"></div><div class="a" style="left:1399.9px;top:947.0px;width:1.0px;height:40.8px;background:#e1e4ea;"></div><div class="a" style="left:1539.9px;top:947.0px;width:1.0px;height:40.8px;background:#e1e4ea;"></div><div class="a" style="left:1647.0px;top:947.0px;width:1.0px;height:40.8px;background:#e1e4ea;"></div><div class="a" style="left:1894.7px;top:947.0px;width:1.0px;height:40.8px;background:#e1e4ea;"></div><div class="a" style="left:2000.7px;top:947.0px;width:1.0px;height:40.8px;background:#e1e4ea;"></div><div class="a" style="left:2140.5px;top:947.0px;width:1.0px;height:40.8px;background:#e1e4ea;"></div><div class="a" style="left:2246.1px;top:947.0px;width:1.0px;height:40.8px;background:#e1e4ea;"></div><svg class="a" style="left:135.0px;top:959.7px;" width="15.5" height="15.5" viewBox="0 0 15.5 15.5"><circle cx="7.75" cy="7.75" r="6.75" fill="none" stroke="#1a9c2a" stroke-width="1.7"/><polyline points="4.6499999999999995,8.06 6.9750000000000005,10.385 11.004999999999999,5.735" fill="none" stroke="#1a9c2a" stroke-width="1.7" stroke-linecap="round" stroke-linejoin="round"/></svg><div class="a t" style="top:959.1px;font-size:17.2px;line-height:17.2px;color:#2b313c;left:158.5px;">Week 3 (03/20 - 03/27)</div><div class="a t" style="top:959.0px;font-size:17.3px;line-height:17.3px;color:#2b313c;left:-993.7px;width:1500px;text-align:right;">$200,000,000</div><div class="a t" style="top:959.0px;font-size:17.3px;line-height:17.3px;color:#2b313c;left:-853.4px;width:1500px;text-align:right;">$200,000,000</div><div class="a t" style="top:959.0px;font-size:17.3px;line-height:17.3px;color:#2b313c;left:669.0px;">$210,000,000</div><div class="a t" style="top:959.0px;font-size:17.3px;line-height:17.3px;color:#1d6e1d;left:-615.8px;width:1500px;text-align:right;">1.94%</div><div class="a t" style="top:959.0px;font-size:17.3px;line-height:17.3px;color:#1d6e1d;left:906.5px;">$10,000,000</div><div class="a t" style="top:959.0px;font-size:17.3px;line-height:17.3px;color:#1d6e1d;left:-360.7px;width:1500px;text-align:right;">$10,000,000</div><div class="a t" style="top:959.0px;font-size:17.3px;line-height:17.3px;color:#2b313c;left:-215.6px;width:1500px;text-align:right;">$200,000,000</div><div class="a t" style="top:959.0px;font-size:17.3px;line-height:17.3px;color:#2b313c;left:-110.6px;width:1500px;text-align:right;">60.00%</div><div class="a t" style="top:959.0px;font-size:17.3px;line-height:17.3px;color:#2b313c;left:29.4px;width:1500px;text-align:right;">$200,000,000</div><div class="a t" style="top:959.0px;font-size:17.3px;line-height:17.3px;color:#2b313c;left:136.5px;width:1500px;text-align:right;">50.00%</div><div class="a t" style="top:959.0px;font-size:17.3px;line-height:17.3px;color:#1d6e1d;left:241.0px;width:1500px;text-align:right;">10.00%</div><div class="a t" style="top:959.0px;font-size:17.3px;line-height:17.3px;color:#2b313c;left:384.2px;width:1500px;text-align:right;">$200,000,000</div><div class="a t" style="top:959.0px;font-size:17.3px;line-height:17.3px;color:#2b313c;left:490.2px;width:1500px;text-align:right;">60.00%</div><div class="a t" style="top:959.0px;font-size:17.3px;line-height:17.3px;color:#2b313c;left:630.0px;width:1500px;text-align:right;">$200,000,000</div><div class="a t" style="top:959.0px;font-size:17.3px;line-height:17.3px;color:#2b313c;left:735.6px;width:1500px;text-align:right;">50.00%</div><div class="a t" style="top:959.0px;font-size:17.3px;line-height:17.3px;color:#1d6e1d;left:845.1px;width:1500px;text-align:right;">10.00%</div><div class="a t" style="top:959.0px;font-size:17.3px;line-height:17.3px;color:#2b313c;left:2384.7px;">$200,000,000</div><svg class="a" style="left:658.1px;top:947.5px;" width="13" height="13" viewBox="0 0 13 13"><polygon points="0,0 13,0 0,13" fill="#262b38"/></svg><svg class="a" style="left:798.6px;top:947.5px;" width="13" height="13" viewBox="0 0 13 13"><polygon points="0,0 13,0 0,13" fill="#262b38"/></svg><svg class="a" style="left:895.7px;top:947.5px;" width="13" height="13" viewBox="0 0 13 13"><polygon points="0,0 13,0 0,13" fill="#262b38"/></svg><svg class="a" style="left:1022.7px;top:947.5px;" width="13" height="13" viewBox="0 0 13 13"><polygon points="0,0 13,0 0,13" fill="#262b38"/></svg><svg class="a" style="left:1400.9px;top:947.5px;" width="13" height="13" viewBox="0 0 13 13"><polygon points="0,0 13,0 0,13" fill="#262b38"/></svg><svg class="a" style="left:1540.9px;top:947.5px;" width="13" height="13" viewBox="0 0 13 13"><polygon points="0,0 13,0 0,13" fill="#262b38"/></svg><svg class="a" style="left:1648.0px;top:947.5px;" width="13" height="13" viewBox="0 0 13 13"><polygon points="0,0 13,0 0,13" fill="#262b38"/></svg><svg class="a" style="left:2001.7px;top:947.5px;" width="13" height="13" viewBox="0 0 13 13"><polygon points="0,0 13,0 0,13" fill="#262b38"/></svg><svg class="a" style="left:2141.5px;top:947.5px;" width="13" height="13" viewBox="0 0 13 13"><polygon points="0,0 13,0 0,13" fill="#262b38"/></svg><svg class="a" style="left:2247.1px;top:947.5px;" width="13" height="13" viewBox="0 0 13 13"><polygon points="0,0 13,0 0,13" fill="#262b38"/></svg><div class="a" style="left:82.0px;top:987.8px;width:2318.0px;height:40.8px;background:#fefefe;"></div><div class="a" style="left:1150.3px;top:987.8px;width:5.4px;height:40.8px;background:#dcdfe9;"></div><div class="a" style="left:1752.0px;top:987.8px;width:4.0px;height:40.8px;background:#dcdfe9;"></div><div class="a" style="left:2356.1px;top:987.8px;width:5.9px;height:40.8px;background:#dcdfe9;"></div><div class="a" style="left:82.0px;top:1027.6px;width:2318.0px;height:1.0px;background:#e4e7ec;"></div><div class="a" style="left:121.5px;top:987.8px;width:1.0px;height:40.8px;background:#e1e4ea;"></div><div class="a" style="left:376.5px;top:987.8px;width:1.0px;height:40.8px;background:#e1e4ea;"></div><div class="a" style="left:516.8px;top:987.8px;width:1.0px;height:40.8px;background:#e1e4ea;"></div><div class="a" style="left:657.1px;top:987.8px;width:1.0px;height:40.8px;background:#e1e4ea;"></div><div class="a" style="left:797.6px;top:987.8px;width:1.0px;height:40.8px;background:#e1e4ea;"></div><div class="a" style="left:894.7px;top:987.8px;width:1.0px;height:40.8px;background:#e1e4ea;"></div><div class="a" style="left:1021.7px;top:987.8px;width:1.0px;height:40.8px;background:#e1e4ea;"></div><div class="a" style="left:1294.9px;top:987.8px;width:1.0px;height:40.8px;background:#e1e4ea;"></div><div class="a" style="left:1399.9px;top:987.8px;width:1.0px;height:40.8px;background:#e1e4ea;"></div><div class="a" style="left:1539.9px;top:987.8px;width:1.0px;height:40.8px;background:#e1e4ea;"></div><div class="a" style="left:1647.0px;top:987.8px;width:1.0px;height:40.8px;background:#e1e4ea;"></div><div class="a" style="left:1894.7px;top:987.8px;width:1.0px;height:40.8px;background:#e1e4ea;"></div><div class="a" style="left:2000.7px;top:987.8px;width:1.0px;height:40.8px;background:#e1e4ea;"></div><div class="a" style="left:2140.5px;top:987.8px;width:1.0px;height:40.8px;background:#e1e4ea;"></div><div class="a" style="left:2246.1px;top:987.8px;width:1.0px;height:40.8px;background:#e1e4ea;"></div><svg class="a" style="left:135.0px;top:1000.5px;" width="15.5" height="15.5" viewBox="0 0 15.5 15.5"><circle cx="7.75" cy="7.75" r="6.75" fill="none" stroke="#1a9c2a" stroke-width="1.7"/><polyline points="4.6499999999999995,8.06 6.9750000000000005,10.385 11.004999999999999,5.735" fill="none" stroke="#1a9c2a" stroke-width="1.7" stroke-linecap="round" stroke-linejoin="round"/></svg><div class="a t" style="top:999.9px;font-size:17.2px;line-height:17.2px;color:#2b313c;left:158.5px;">Week 4 (03/20 - 03/27)</div><div class="a t" style="top:999.8px;font-size:17.3px;line-height:17.3px;color:#2b313c;left:-993.7px;width:1500px;text-align:right;">$200,000,000</div><div class="a t" style="top:999.8px;font-size:17.3px;line-height:17.3px;color:#2b313c;left:-853.4px;width:1500px;text-align:right;">$200,000,000</div><div class="a t" style="top:999.8px;font-size:17.3px;line-height:17.3px;color:#2b313c;left:669.0px;">$210,000,000</div><div class="a t" style="top:999.8px;font-size:17.3px;line-height:17.3px;color:#1d6e1d;left:-615.8px;width:1500px;text-align:right;">1.94%</div><div class="a t" style="top:999.8px;font-size:17.3px;line-height:17.3px;color:#1d6e1d;left:906.5px;">$10,000,000</div><div class="a t" style="top:999.8px;font-size:17.3px;line-height:17.3px;color:#1d6e1d;left:-360.7px;width:1500px;text-align:right;">$10,000,000</div><div class="a t" style="top:999.8px;font-size:17.3px;line-height:17.3px;color:#2b313c;left:-215.6px;width:1500px;text-align:right;">$200,000,000</div><div class="a t" style="top:999.8px;font-size:17.3px;line-height:17.3px;color:#2b313c;left:-110.6px;width:1500px;text-align:right;">60.00%</div><div class="a t" style="top:999.8px;font-size:17.3px;line-height:17.3px;color:#2b313c;left:29.4px;width:1500px;text-align:right;">$200,000,000</div><div class="a t" style="top:999.8px;font-size:17.3px;line-height:17.3px;color:#2b313c;left:136.5px;width:1500px;text-align:right;">50.00%</div><div class="a t" style="top:999.8px;font-size:17.3px;line-height:17.3px;color:#1d6e1d;left:241.0px;width:1500px;text-align:right;">10.00%</div><div class="a t" style="top:999.8px;font-size:17.3px;line-height:17.3px;color:#2b313c;left:384.2px;width:1500px;text-align:right;">$200,000,000</div><div class="a t" style="top:999.8px;font-size:17.3px;line-height:17.3px;color:#2b313c;left:490.2px;width:1500px;text-align:right;">60.00%</div><div class="a t" style="top:999.8px;font-size:17.3px;line-height:17.3px;color:#2b313c;left:630.0px;width:1500px;text-align:right;">$200,000,000</div><div class="a t" style="top:999.8px;font-size:17.3px;line-height:17.3px;color:#2b313c;left:735.6px;width:1500px;text-align:right;">50.00%</div><div class="a t" style="top:999.8px;font-size:17.3px;line-height:17.3px;color:#1d6e1d;left:845.1px;width:1500px;text-align:right;">10.00%</div><div class="a t" style="top:999.8px;font-size:17.3px;line-height:17.3px;color:#2b313c;left:2384.7px;">$200,000,000</div><svg class="a" style="left:658.1px;top:988.3px;" width="13" height="13" viewBox="0 0 13 13"><polygon points="0,0 13,0 0,13" fill="#262b38"/></svg><svg class="a" style="left:798.6px;top:988.3px;" width="13" height="13" viewBox="0 0 13 13"><polygon points="0,0 13,0 0,13" fill="#262b38"/></svg><svg class="a" style="left:895.7px;top:988.3px;" width="13" height="13" viewBox="0 0 13 13"><polygon points="0,0 13,0 0,13" fill="#262b38"/></svg><svg class="a" style="left:1022.7px;top:988.3px;" width="13" height="13" viewBox="0 0 13 13"><polygon points="0,0 13,0 0,13" fill="#262b38"/></svg><svg class="a" style="left:1400.9px;top:988.3px;" width="13" height="13" viewBox="0 0 13 13"><polygon points="0,0 13,0 0,13" fill="#262b38"/></svg><svg class="a" style="left:1540.9px;top:988.3px;" width="13" height="13" viewBox="0 0 13 13"><polygon points="0,0 13,0 0,13" fill="#262b38"/></svg><svg class="a" style="left:1648.0px;top:988.3px;" width="13" height="13" viewBox="0 0 13 13"><polygon points="0,0 13,0 0,13" fill="#262b38"/></svg><svg class="a" style="left:2001.7px;top:988.3px;" width="13" height="13" viewBox="0 0 13 13"><polygon points="0,0 13,0 0,13" fill="#262b38"/></svg><svg class="a" style="left:2141.5px;top:988.3px;" width="13" height="13" viewBox="0 0 13 13"><polygon points="0,0 13,0 0,13" fill="#262b38"/></svg><svg class="a" style="left:2247.1px;top:988.3px;" width="13" height="13" viewBox="0 0 13 13"><polygon points="0,0 13,0 0,13" fill="#262b38"/></svg><div class="a" style="left:82.0px;top:1028.6px;width:2318.0px;height:40.8px;background:#f6fbef;"></div><div class="a" style="left:1150.3px;top:1028.6px;width:5.4px;height:40.8px;background:#dcdfe9;"></div><div class="a" style="left:1752.0px;top:1028.6px;width:4.0px;height:40.8px;background:#dcdfe9;"></div><div class="a" style="left:2356.1px;top:1028.6px;width:5.9px;height:40.8px;background:#dcdfe9;"></div><div class="a" style="left:82.0px;top:1068.4px;width:2318.0px;height:1.0px;background:#e4e7ec;"></div><div class="a" style="left:121.5px;top:1028.6px;width:1.0px;height:40.8px;background:#e1e4ea;"></div><div class="a" style="left:376.5px;top:1028.6px;width:1.0px;height:40.8px;background:#e1e4ea;"></div><div class="a" style="left:516.8px;top:1028.6px;width:1.0px;height:40.8px;background:#e1e4ea;"></div><div class="a" style="left:657.1px;top:1028.6px;width:1.0px;height:40.8px;background:#e1e4ea;"></div><div class="a" style="left:797.6px;top:1028.6px;width:1.0px;height:40.8px;background:#e1e4ea;"></div><div class="a" style="left:894.7px;top:1028.6px;width:1.0px;height:40.8px;background:#e1e4ea;"></div><div class="a" style="left:1021.7px;top:1028.6px;width:1.0px;height:40.8px;background:#e1e4ea;"></div><div class="a" style="left:1294.9px;top:1028.6px;width:1.0px;height:40.8px;background:#e1e4ea;"></div><div class="a" style="left:1399.9px;top:1028.6px;width:1.0px;height:40.8px;background:#e1e4ea;"></div><div class="a" style="left:1539.9px;top:1028.6px;width:1.0px;height:40.8px;background:#e1e4ea;"></div><div class="a" style="left:1647.0px;top:1028.6px;width:1.0px;height:40.8px;background:#e1e4ea;"></div><div class="a" style="left:1894.7px;top:1028.6px;width:1.0px;height:40.8px;background:#e1e4ea;"></div><div class="a" style="left:2000.7px;top:1028.6px;width:1.0px;height:40.8px;background:#e1e4ea;"></div><div class="a" style="left:2140.5px;top:1028.6px;width:1.0px;height:40.8px;background:#e1e4ea;"></div><div class="a" style="left:2246.1px;top:1028.6px;width:1.0px;height:40.8px;background:#e1e4ea;"></div><div class="a t" style="top:1040.7px;font-size:17.2px;line-height:17.2px;color:#2b313c;left:158.5px;">Period 2</div><div class="a t" style="top:1040.6px;font-size:17.3px;line-height:17.3px;color:#2b313c;left:-993.7px;width:1500px;text-align:right;">$800,000,000</div><div class="a t" style="top:1040.6px;font-size:17.3px;line-height:17.3px;color:#2b313c;left:-853.4px;width:1500px;text-align:right;">$800,000,000</div><div class="a t" style="top:1040.6px;font-size:17.3px;line-height:17.3px;color:#2b313c;left:669.0px;">$820,000,000</div><div class="a t" style="top:1040.6px;font-size:17.3px;line-height:17.3px;color:#1d6e1d;left:-615.8px;width:1500px;text-align:right;">1.94%</div><div class="a t" style="top:1040.6px;font-size:17.3px;line-height:17.3px;color:#1d6e1d;left:906.5px;">$20,000,000</div><div class="a t" style="top:1040.6px;font-size:17.3px;line-height:17.3px;color:#1d6e1d;left:-360.7px;width:1500px;text-align:right;">$20,000,000</div><div class="a t" style="top:1040.6px;font-size:17.3px;line-height:17.3px;color:#2b313c;left:-215.6px;width:1500px;text-align:right;">$200,000,000</div><div class="a t" style="top:1040.6px;font-size:17.3px;line-height:17.3px;color:#2b313c;left:-110.6px;width:1500px;text-align:right;">60.00%</div><div class="a t" style="top:1040.6px;font-size:17.3px;line-height:17.3px;color:#2b313c;left:29.4px;width:1500px;text-align:right;">$820,000,000</div><div class="a t" style="top:1040.6px;font-size:17.3px;line-height:17.3px;color:#2b313c;left:136.5px;width:1500px;text-align:right;">50.00%</div><div class="a t" style="top:1040.6px;font-size:17.3px;line-height:17.3px;color:#1d6e1d;left:241.0px;width:1500px;text-align:right;">10.00%</div><div class="a t" style="top:1040.6px;font-size:17.3px;line-height:17.3px;color:#2b313c;left:384.2px;width:1500px;text-align:right;">$200,000,000</div><div class="a t" style="top:1040.6px;font-size:17.3px;line-height:17.3px;color:#2b313c;left:490.2px;width:1500px;text-align:right;">60.00%</div><div class="a t" style="top:1040.6px;font-size:17.3px;line-height:17.3px;color:#2b313c;left:630.0px;width:1500px;text-align:right;">$820,000,000</div><div class="a t" style="top:1040.6px;font-size:17.3px;line-height:17.3px;color:#2b313c;left:735.6px;width:1500px;text-align:right;">50.00%</div><div class="a t" style="top:1040.6px;font-size:17.3px;line-height:17.3px;color:#1d6e1d;left:845.1px;width:1500px;text-align:right;">10.00%</div><div class="a t" style="top:1040.6px;font-size:17.3px;line-height:17.3px;color:#2b313c;left:2384.7px;">$200,000,000</div><div class="a" style="left:82.0px;top:1069.4px;width:2318.0px;height:40.8px;background:#fefefe;"></div><div class="a" style="left:1150.3px;top:1069.4px;width:5.4px;height:40.8px;background:#dcdfe9;"></div><div class="a" style="left:1752.0px;top:1069.4px;width:4.0px;height:40.8px;background:#dcdfe9;"></div><div class="a" style="left:2356.1px;top:1069.4px;width:5.9px;height:40.8px;background:#dcdfe9;"></div><div class="a" style="left:82.0px;top:1109.2px;width:2318.0px;height:1.0px;background:#e4e7ec;"></div><div class="a" style="left:121.5px;top:1069.4px;width:1.0px;height:40.8px;background:#e1e4ea;"></div><div class="a" style="left:376.5px;top:1069.4px;width:1.0px;height:40.8px;background:#e1e4ea;"></div><div class="a" style="left:516.8px;top:1069.4px;width:1.0px;height:40.8px;background:#e1e4ea;"></div><div class="a" style="left:657.1px;top:1069.4px;width:1.0px;height:40.8px;background:#e1e4ea;"></div><div class="a" style="left:797.6px;top:1069.4px;width:1.0px;height:40.8px;background:#e1e4ea;"></div><div class="a" style="left:894.7px;top:1069.4px;width:1.0px;height:40.8px;background:#e1e4ea;"></div><div class="a" style="left:1021.7px;top:1069.4px;width:1.0px;height:40.8px;background:#e1e4ea;"></div><div class="a" style="left:1294.9px;top:1069.4px;width:1.0px;height:40.8px;background:#e1e4ea;"></div><div class="a" style="left:1399.9px;top:1069.4px;width:1.0px;height:40.8px;background:#e1e4ea;"></div><div class="a" style="left:1539.9px;top:1069.4px;width:1.0px;height:40.8px;background:#e1e4ea;"></div><div class="a" style="left:1647.0px;top:1069.4px;width:1.0px;height:40.8px;background:#e1e4ea;"></div><div class="a" style="left:1894.7px;top:1069.4px;width:1.0px;height:40.8px;background:#e1e4ea;"></div><div class="a" style="left:2000.7px;top:1069.4px;width:1.0px;height:40.8px;background:#e1e4ea;"></div><div class="a" style="left:2140.5px;top:1069.4px;width:1.0px;height:40.8px;background:#e1e4ea;"></div><div class="a" style="left:2246.1px;top:1069.4px;width:1.0px;height:40.8px;background:#e1e4ea;"></div><div class="a t" style="top:1081.5px;font-size:17.2px;line-height:17.2px;color:#2b313c;left:158.5px;">Week 5 (03/20 - 03/27)</div><div class="a t" style="top:1081.4px;font-size:17.3px;line-height:17.3px;color:#2b313c;left:-993.7px;width:1500px;text-align:right;">$200,000,000</div><div class="a t" style="top:1081.4px;font-size:17.3px;line-height:17.3px;color:#2b313c;left:-853.4px;width:1500px;text-align:right;">$200,000,000</div><div class="a t" style="top:1081.4px;font-size:17.3px;line-height:17.3px;color:#2b313c;left:669.0px;">$210,000,000</div><div class="a t" style="top:1081.4px;font-size:17.3px;line-height:17.3px;color:#1d6e1d;left:-615.8px;width:1500px;text-align:right;">1.94%</div><div class="a t" style="top:1081.4px;font-size:17.3px;line-height:17.3px;color:#1d6e1d;left:906.5px;">$10,000,000</div><div class="a t" style="top:1081.4px;font-size:17.3px;line-height:17.3px;color:#1d6e1d;left:-360.7px;width:1500px;text-align:right;">$10,000,000</div><div class="a t" style="top:1081.4px;font-size:17.3px;line-height:17.3px;color:#2b313c;left:-215.6px;width:1500px;text-align:right;">$200,000,000</div><div class="a t" style="top:1081.4px;font-size:17.3px;line-height:17.3px;color:#2b313c;left:-110.6px;width:1500px;text-align:right;">60.00%</div><div class="a t" style="top:1081.4px;font-size:17.3px;line-height:17.3px;color:#2b313c;left:29.4px;width:1500px;text-align:right;">$200,000,000</div><div class="a t" style="top:1081.4px;font-size:17.3px;line-height:17.3px;color:#2b313c;left:136.5px;width:1500px;text-align:right;">50.00%</div><div class="a t" style="top:1081.4px;font-size:17.3px;line-height:17.3px;color:#1d6e1d;left:241.0px;width:1500px;text-align:right;">10.00%</div><div class="a t" style="top:1081.4px;font-size:17.3px;line-height:17.3px;color:#2b313c;left:384.2px;width:1500px;text-align:right;">$200,000,000</div><div class="a t" style="top:1081.4px;font-size:17.3px;line-height:17.3px;color:#2b313c;left:490.2px;width:1500px;text-align:right;">60.00%</div><div class="a t" style="top:1081.4px;font-size:17.3px;line-height:17.3px;color:#2b313c;left:630.0px;width:1500px;text-align:right;">$200,000,000</div><div class="a t" style="top:1081.4px;font-size:17.3px;line-height:17.3px;color:#2b313c;left:735.6px;width:1500px;text-align:right;">50.00%</div><div class="a t" style="top:1081.4px;font-size:17.3px;line-height:17.3px;color:#1d6e1d;left:845.1px;width:1500px;text-align:right;">10.00%</div><div class="a t" style="top:1081.4px;font-size:17.3px;line-height:17.3px;color:#2b313c;left:2384.7px;">$200,000,000</div><svg class="a" style="left:658.1px;top:1069.9px;" width="13" height="13" viewBox="0 0 13 13"><polygon points="0,0 13,0 0,13" fill="#262b38"/></svg><svg class="a" style="left:798.6px;top:1069.9px;" width="13" height="13" viewBox="0 0 13 13"><polygon points="0,0 13,0 0,13" fill="#262b38"/></svg><svg class="a" style="left:895.7px;top:1069.9px;" width="13" height="13" viewBox="0 0 13 13"><polygon points="0,0 13,0 0,13" fill="#262b38"/></svg><svg class="a" style="left:1022.7px;top:1069.9px;" width="13" height="13" viewBox="0 0 13 13"><polygon points="0,0 13,0 0,13" fill="#262b38"/></svg><svg class="a" style="left:1400.9px;top:1069.9px;" width="13" height="13" viewBox="0 0 13 13"><polygon points="0,0 13,0 0,13" fill="#262b38"/></svg><svg class="a" style="left:1540.9px;top:1069.9px;" width="13" height="13" viewBox="0 0 13 13"><polygon points="0,0 13,0 0,13" fill="#262b38"/></svg><svg class="a" style="left:1648.0px;top:1069.9px;" width="13" height="13" viewBox="0 0 13 13"><polygon points="0,0 13,0 0,13" fill="#262b38"/></svg><svg class="a" style="left:2001.7px;top:1069.9px;" width="13" height="13" viewBox="0 0 13 13"><polygon points="0,0 13,0 0,13" fill="#262b38"/></svg><svg class="a" style="left:2141.5px;top:1069.9px;" width="13" height="13" viewBox="0 0 13 13"><polygon points="0,0 13,0 0,13" fill="#262b38"/></svg><svg class="a" style="left:2247.1px;top:1069.9px;" width="13" height="13" viewBox="0 0 13 13"><polygon points="0,0 13,0 0,13" fill="#262b38"/></svg><div class="a" style="left:82.0px;top:1110.2px;width:2318.0px;height:40.8px;background:#fefefe;"></div><div class="a" style="left:1150.3px;top:1110.2px;width:5.4px;height:40.8px;background:#dcdfe9;"></div><div class="a" style="left:1752.0px;top:1110.2px;width:4.0px;height:40.8px;background:#dcdfe9;"></div><div class="a" style="left:2356.1px;top:1110.2px;width:5.9px;height:40.8px;background:#dcdfe9;"></div><div class="a" style="left:82.0px;top:1150.0px;width:2318.0px;height:1.0px;background:#e4e7ec;"></div><div class="a" style="left:121.5px;top:1110.2px;width:1.0px;height:40.8px;background:#e1e4ea;"></div><div class="a" style="left:376.5px;top:1110.2px;width:1.0px;height:40.8px;background:#e1e4ea;"></div><div class="a" style="left:516.8px;top:1110.2px;width:1.0px;height:40.8px;background:#e1e4ea;"></div><div class="a" style="left:657.1px;top:1110.2px;width:1.0px;height:40.8px;background:#e1e4ea;"></div><div class="a" style="left:797.6px;top:1110.2px;width:1.0px;height:40.8px;background:#e1e4ea;"></div><div class="a" style="left:894.7px;top:1110.2px;width:1.0px;height:40.8px;background:#e1e4ea;"></div><div class="a" style="left:1021.7px;top:1110.2px;width:1.0px;height:40.8px;background:#e1e4ea;"></div><div class="a" style="left:1294.9px;top:1110.2px;width:1.0px;height:40.8px;background:#e1e4ea;"></div><div class="a" style="left:1399.9px;top:1110.2px;width:1.0px;height:40.8px;background:#e1e4ea;"></div><div class="a" style="left:1539.9px;top:1110.2px;width:1.0px;height:40.8px;background:#e1e4ea;"></div><div class="a" style="left:1647.0px;top:1110.2px;width:1.0px;height:40.8px;background:#e1e4ea;"></div><div class="a" style="left:1894.7px;top:1110.2px;width:1.0px;height:40.8px;background:#e1e4ea;"></div><div class="a" style="left:2000.7px;top:1110.2px;width:1.0px;height:40.8px;background:#e1e4ea;"></div><div class="a" style="left:2140.5px;top:1110.2px;width:1.0px;height:40.8px;background:#e1e4ea;"></div><div class="a" style="left:2246.1px;top:1110.2px;width:1.0px;height:40.8px;background:#e1e4ea;"></div><div class="a t" style="top:1122.3px;font-size:17.2px;line-height:17.2px;color:#2b313c;left:158.5px;">Week 6 (03/20 - 03/27)</div><div class="a t" style="top:1122.2px;font-size:17.3px;line-height:17.3px;color:#0a0c10;left:-993.7px;width:1500px;text-align:right;">$200,000,000</div><div class="a t" style="top:1122.2px;font-size:17.3px;line-height:17.3px;color:#0a0c10;left:-853.4px;width:1500px;text-align:right;">$200,000,000</div><div class="a t" style="top:1122.2px;font-size:17.3px;line-height:17.3px;color:#2b313c;left:669.0px;">$210,000,000</div><div class="a t" style="top:1122.2px;font-size:17.3px;line-height:17.3px;color:#1d6e1d;left:-615.8px;width:1500px;text-align:right;">1.94%</div><div class="a t" style="top:1122.2px;font-size:17.3px;line-height:17.3px;color:#1d6e1d;left:906.5px;">$10,000,000</div><div class="a t" style="top:1122.2px;font-size:17.3px;line-height:17.3px;color:#1d6e1d;left:-360.7px;width:1500px;text-align:right;">$10,000,000</div><div class="a t" style="top:1122.2px;font-size:17.3px;line-height:17.3px;color:#2b313c;left:-215.6px;width:1500px;text-align:right;">$200,000,000</div><div class="a t" style="top:1122.2px;font-size:17.3px;line-height:17.3px;color:#2b313c;left:-110.6px;width:1500px;text-align:right;">60.00%</div><div class="a t" style="top:1122.2px;font-size:17.3px;line-height:17.3px;color:#2b313c;left:29.4px;width:1500px;text-align:right;">$200,000,000</div><div class="a t" style="top:1122.2px;font-size:17.3px;line-height:17.3px;color:#2b313c;left:136.5px;width:1500px;text-align:right;">50.00%</div><div class="a t" style="top:1122.2px;font-size:17.3px;line-height:17.3px;color:#1d6e1d;left:241.0px;width:1500px;text-align:right;">10.00%</div><div class="a t" style="top:1122.2px;font-size:17.3px;line-height:17.3px;color:#2b313c;left:384.2px;width:1500px;text-align:right;">$200,000,000</div><div class="a t" style="top:1122.2px;font-size:17.3px;line-height:17.3px;color:#2b313c;left:490.2px;width:1500px;text-align:right;">60.00%</div><div class="a t" style="top:1122.2px;font-size:17.3px;line-height:17.3px;color:#2b313c;left:630.0px;width:1500px;text-align:right;">$200,000,000</div><div class="a t" style="top:1122.2px;font-size:17.3px;line-height:17.3px;color:#2b313c;left:735.6px;width:1500px;text-align:right;">50.00%</div><div class="a t" style="top:1122.2px;font-size:17.3px;line-height:17.3px;color:#1d6e1d;left:845.1px;width:1500px;text-align:right;">10.00%</div><div class="a t" style="top:1122.2px;font-size:17.3px;line-height:17.3px;color:#2b313c;left:2384.7px;">$200,000,000</div><svg class="a" style="left:658.1px;top:1110.7px;" width="13" height="13" viewBox="0 0 13 13"><polygon points="0,0 13,0 0,13" fill="#262b38"/></svg><svg class="a" style="left:798.6px;top:1110.7px;" width="13" height="13" viewBox="0 0 13 13"><polygon points="0,0 13,0 0,13" fill="#262b38"/></svg><svg class="a" style="left:895.7px;top:1110.7px;" width="13" height="13" viewBox="0 0 13 13"><polygon points="0,0 13,0 0,13" fill="#262b38"/></svg><svg class="a" style="left:1022.7px;top:1110.7px;" width="13" height="13" viewBox="0 0 13 13"><polygon points="0,0 13,0 0,13" fill="#262b38"/></svg><svg class="a" style="left:1400.9px;top:1110.7px;" width="13" height="13" viewBox="0 0 13 13"><polygon points="0,0 13,0 0,13" fill="#262b38"/></svg><svg class="a" style="left:1540.9px;top:1110.7px;" width="13" height="13" viewBox="0 0 13 13"><polygon points="0,0 13,0 0,13" fill="#262b38"/></svg><svg class="a" style="left:1648.0px;top:1110.7px;" width="13" height="13" viewBox="0 0 13 13"><polygon points="0,0 13,0 0,13" fill="#262b38"/></svg><svg class="a" style="left:2001.7px;top:1110.7px;" width="13" height="13" viewBox="0 0 13 13"><polygon points="0,0 13,0 0,13" fill="#262b38"/></svg><svg class="a" style="left:2141.5px;top:1110.7px;" width="13" height="13" viewBox="0 0 13 13"><polygon points="0,0 13,0 0,13" fill="#262b38"/></svg><svg class="a" style="left:2247.1px;top:1110.7px;" width="13" height="13" viewBox="0 0 13 13"><polygon points="0,0 13,0 0,13" fill="#262b38"/></svg><div class="a" style="left:82.0px;top:1151.0px;width:2318.0px;height:40.8px;background:#fefefe;"></div><div class="a" style="left:1150.3px;top:1151.0px;width:5.4px;height:40.8px;background:#dcdfe9;"></div><div class="a" style="left:1752.0px;top:1151.0px;width:4.0px;height:40.8px;background:#dcdfe9;"></div><div class="a" style="left:2356.1px;top:1151.0px;width:5.9px;height:40.8px;background:#dcdfe9;"></div><div class="a" style="left:82.0px;top:1190.8px;width:2318.0px;height:1.0px;background:#e4e7ec;"></div><div class="a" style="left:121.5px;top:1151.0px;width:1.0px;height:40.8px;background:#e1e4ea;"></div><div class="a" style="left:376.5px;top:1151.0px;width:1.0px;height:40.8px;background:#e1e4ea;"></div><div class="a" style="left:516.8px;top:1151.0px;width:1.0px;height:40.8px;background:#e1e4ea;"></div><div class="a" style="left:657.1px;top:1151.0px;width:1.0px;height:40.8px;background:#e1e4ea;"></div><div class="a" style="left:797.6px;top:1151.0px;width:1.0px;height:40.8px;background:#e1e4ea;"></div><div class="a" style="left:894.7px;top:1151.0px;width:1.0px;height:40.8px;background:#e1e4ea;"></div><div class="a" style="left:1021.7px;top:1151.0px;width:1.0px;height:40.8px;background:#e1e4ea;"></div><div class="a" style="left:1294.9px;top:1151.0px;width:1.0px;height:40.8px;background:#e1e4ea;"></div><div class="a" style="left:1399.9px;top:1151.0px;width:1.0px;height:40.8px;background:#e1e4ea;"></div><div class="a" style="left:1539.9px;top:1151.0px;width:1.0px;height:40.8px;background:#e1e4ea;"></div><div class="a" style="left:1647.0px;top:1151.0px;width:1.0px;height:40.8px;background:#e1e4ea;"></div><div class="a" style="left:1894.7px;top:1151.0px;width:1.0px;height:40.8px;background:#e1e4ea;"></div><div class="a" style="left:2000.7px;top:1151.0px;width:1.0px;height:40.8px;background:#e1e4ea;"></div><div class="a" style="left:2140.5px;top:1151.0px;width:1.0px;height:40.8px;background:#e1e4ea;"></div><div class="a" style="left:2246.1px;top:1151.0px;width:1.0px;height:40.8px;background:#e1e4ea;"></div><div class="a t" style="top:1163.1px;font-size:17.2px;line-height:17.2px;color:#2b313c;left:158.5px;">Week 7 (03/20 - 03/27)</div><div class="a t" style="top:1163.0px;font-size:17.3px;line-height:17.3px;color:#2b313c;left:-993.7px;width:1500px;text-align:right;">$200,000,000</div><div class="a t" style="top:1163.0px;font-size:17.3px;line-height:17.3px;color:#2b313c;left:-853.4px;width:1500px;text-align:right;">$200,000,000</div><div class="a t" style="top:1163.0px;font-size:17.3px;line-height:17.3px;color:#2b313c;left:669.0px;">$200,000,000</div><div class="a t" style="top:1163.0px;font-size:17.3px;line-height:17.3px;color:#1d6e1d;left:-615.8px;width:1500px;text-align:right;">1.94%</div><div class="a t" style="top:1163.0px;font-size:17.3px;line-height:17.3px;color:#1d6e1d;left:-488.8px;width:1500px;text-align:right;">$0</div><div class="a t" style="top:1163.0px;font-size:17.3px;line-height:17.3px;color:#1d6e1d;left:-360.7px;width:1500px;text-align:right;">$0</div><div class="a t" style="top:1163.0px;font-size:17.3px;line-height:17.3px;color:#2b313c;left:-215.6px;width:1500px;text-align:right;">$200,000,000</div><div class="a t" style="top:1163.0px;font-size:17.3px;line-height:17.3px;color:#2b313c;left:-110.6px;width:1500px;text-align:right;">60.00%</div><div class="a t" style="top:1163.0px;font-size:17.3px;line-height:17.3px;color:#2b313c;left:29.4px;width:1500px;text-align:right;">$200,000,000</div><div class="a t" style="top:1163.0px;font-size:17.3px;line-height:17.3px;color:#2b313c;left:136.5px;width:1500px;text-align:right;">50.00%</div><div class="a t" style="top:1163.0px;font-size:17.3px;line-height:17.3px;color:#1d6e1d;left:241.0px;width:1500px;text-align:right;">10.00%</div><div class="a t" style="top:1163.0px;font-size:17.3px;line-height:17.3px;color:#2b313c;left:384.2px;width:1500px;text-align:right;">$200,000,000</div><div class="a t" style="top:1163.0px;font-size:17.3px;line-height:17.3px;color:#2b313c;left:490.2px;width:1500px;text-align:right;">60.00%</div><div class="a t" style="top:1163.0px;font-size:17.3px;line-height:17.3px;color:#2b313c;left:630.0px;width:1500px;text-align:right;">$200,000,000</div><div class="a t" style="top:1163.0px;font-size:17.3px;line-height:17.3px;color:#2b313c;left:735.6px;width:1500px;text-align:right;">50.00%</div><div class="a t" style="top:1163.0px;font-size:17.3px;line-height:17.3px;color:#1d6e1d;left:845.1px;width:1500px;text-align:right;">10.00%</div><div class="a t" style="top:1163.0px;font-size:17.3px;line-height:17.3px;color:#2b313c;left:2384.7px;">$200,000,000</div><div class="a" style="left:82.0px;top:1191.8px;width:2318.0px;height:40.8px;background:#fefefe;"></div><div class="a" style="left:1150.3px;top:1191.8px;width:5.4px;height:40.8px;background:#dcdfe9;"></div><div class="a" style="left:1752.0px;top:1191.8px;width:4.0px;height:40.8px;background:#dcdfe9;"></div><div class="a" style="left:2356.1px;top:1191.8px;width:5.9px;height:40.8px;background:#dcdfe9;"></div><div class="a" style="left:82.0px;top:1231.6px;width:2318.0px;height:1.0px;background:#e4e7ec;"></div><div class="a" style="left:121.5px;top:1191.8px;width:1.0px;height:40.8px;background:#e1e4ea;"></div><div class="a" style="left:376.5px;top:1191.8px;width:1.0px;height:40.8px;background:#e1e4ea;"></div><div class="a" style="left:516.8px;top:1191.8px;width:1.0px;height:40.8px;background:#e1e4ea;"></div><div class="a" style="left:657.1px;top:1191.8px;width:1.0px;height:40.8px;background:#e1e4ea;"></div><div class="a" style="left:797.6px;top:1191.8px;width:1.0px;height:40.8px;background:#e1e4ea;"></div><div class="a" style="left:894.7px;top:1191.8px;width:1.0px;height:40.8px;background:#e1e4ea;"></div><div class="a" style="left:1021.7px;top:1191.8px;width:1.0px;height:40.8px;background:#e1e4ea;"></div><div class="a" style="left:1294.9px;top:1191.8px;width:1.0px;height:40.8px;background:#e1e4ea;"></div><div class="a" style="left:1399.9px;top:1191.8px;width:1.0px;height:40.8px;background:#e1e4ea;"></div><div class="a" style="left:1539.9px;top:1191.8px;width:1.0px;height:40.8px;background:#e1e4ea;"></div><div class="a" style="left:1647.0px;top:1191.8px;width:1.0px;height:40.8px;background:#e1e4ea;"></div><div class="a" style="left:1894.7px;top:1191.8px;width:1.0px;height:40.8px;background:#e1e4ea;"></div><div class="a" style="left:2000.7px;top:1191.8px;width:1.0px;height:40.8px;background:#e1e4ea;"></div><div class="a" style="left:2140.5px;top:1191.8px;width:1.0px;height:40.8px;background:#e1e4ea;"></div><div class="a" style="left:2246.1px;top:1191.8px;width:1.0px;height:40.8px;background:#e1e4ea;"></div><div class="a t" style="top:1203.9px;font-size:17.2px;line-height:17.2px;color:#2b313c;left:158.5px;">Week 8 (03/20 - 03/27)</div><div class="a t" style="top:1203.8px;font-size:17.3px;line-height:17.3px;color:#0a0c10;left:-993.7px;width:1500px;text-align:right;">$200,000,000</div><div class="a t" style="top:1203.8px;font-size:17.3px;line-height:17.3px;color:#0a0c10;left:-853.4px;width:1500px;text-align:right;">$200,000,000</div><div class="a t" style="top:1203.8px;font-size:17.3px;line-height:17.3px;color:#1d6ac6;left:669.0px;">$210,000,000</div><div class="a t" style="top:1203.8px;font-size:17.3px;line-height:17.3px;color:#1d6e1d;left:-615.8px;width:1500px;text-align:right;">1.94%</div><div class="a t" style="top:1203.8px;font-size:17.3px;line-height:17.3px;color:#1d6e1d;left:906.5px;">$10,000,000</div><div class="a t" style="top:1203.8px;font-size:17.3px;line-height:17.3px;color:#1d6e1d;left:-360.7px;width:1500px;text-align:right;">$10,000,000</div><div class="a t" style="top:1203.8px;font-size:17.3px;line-height:17.3px;color:#2b313c;left:-215.6px;width:1500px;text-align:right;">$200,000,000</div><div class="a t" style="top:1203.8px;font-size:17.3px;line-height:17.3px;color:#2b313c;left:-110.6px;width:1500px;text-align:right;">60.00%</div><div class="a t" style="top:1203.8px;font-size:17.3px;line-height:17.3px;color:#2b313c;left:29.4px;width:1500px;text-align:right;">$200,000,000</div><div class="a t" style="top:1203.8px;font-size:17.3px;line-height:17.3px;color:#2b313c;left:136.5px;width:1500px;text-align:right;">50.00%</div><div class="a t" style="top:1203.8px;font-size:17.3px;line-height:17.3px;color:#1d6e1d;left:241.0px;width:1500px;text-align:right;">10.00%</div><div class="a t" style="top:1203.8px;font-size:17.3px;line-height:17.3px;color:#2b313c;left:384.2px;width:1500px;text-align:right;">$200,000,000</div><div class="a t" style="top:1203.8px;font-size:17.3px;line-height:17.3px;color:#2b313c;left:490.2px;width:1500px;text-align:right;">60.00%</div><div class="a t" style="top:1203.8px;font-size:17.3px;line-height:17.3px;color:#2b313c;left:630.0px;width:1500px;text-align:right;">$200,000,000</div><div class="a t" style="top:1203.8px;font-size:17.3px;line-height:17.3px;color:#2b313c;left:735.6px;width:1500px;text-align:right;">50.00%</div><div class="a t" style="top:1203.8px;font-size:17.3px;line-height:17.3px;color:#1d6e1d;left:845.1px;width:1500px;text-align:right;">10.00%</div><div class="a t" style="top:1203.8px;font-size:17.3px;line-height:17.3px;color:#2b313c;left:2384.7px;">$200,000,000</div><div class="a" style="left:82.0px;top:1232.6px;width:2318.0px;height:40.8px;background:#e7f4fd;"></div><div class="a" style="left:1150.3px;top:1232.6px;width:5.4px;height:40.8px;background:#dcdfe9;"></div><div class="a" style="left:1752.0px;top:1232.6px;width:4.0px;height:40.8px;background:#dcdfe9;"></div><div class="a" style="left:2356.1px;top:1232.6px;width:5.9px;height:40.8px;background:#dcdfe9;"></div><div class="a" style="left:82.0px;top:1272.4px;width:2318.0px;height:1.0px;background:#e4e7ec;"></div><div class="a" style="left:121.5px;top:1232.6px;width:1.0px;height:40.8px;background:#e1e4ea;"></div><div class="a" style="left:376.5px;top:1232.6px;width:1.0px;height:40.8px;background:#e1e4ea;"></div><div class="a" style="left:516.8px;top:1232.6px;width:1.0px;height:40.8px;background:#e1e4ea;"></div><div class="a" style="left:657.1px;top:1232.6px;width:1.0px;height:40.8px;background:#e1e4ea;"></div><div class="a" style="left:797.6px;top:1232.6px;width:1.0px;height:40.8px;background:#e1e4ea;"></div><div class="a" style="left:894.7px;top:1232.6px;width:1.0px;height:40.8px;background:#e1e4ea;"></div><div class="a" style="left:1021.7px;top:1232.6px;width:1.0px;height:40.8px;background:#e1e4ea;"></div><div class="a" style="left:1294.9px;top:1232.6px;width:1.0px;height:40.8px;background:#e1e4ea;"></div><div class="a" style="left:1399.9px;top:1232.6px;width:1.0px;height:40.8px;background:#e1e4ea;"></div><div class="a" style="left:1539.9px;top:1232.6px;width:1.0px;height:40.8px;background:#e1e4ea;"></div><div class="a" style="left:1647.0px;top:1232.6px;width:1.0px;height:40.8px;background:#e1e4ea;"></div><div class="a" style="left:1894.7px;top:1232.6px;width:1.0px;height:40.8px;background:#e1e4ea;"></div><div class="a" style="left:2000.7px;top:1232.6px;width:1.0px;height:40.8px;background:#e1e4ea;"></div><div class="a" style="left:2140.5px;top:1232.6px;width:1.0px;height:40.8px;background:#e1e4ea;"></div><div class="a" style="left:2246.1px;top:1232.6px;width:1.0px;height:40.8px;background:#e1e4ea;"></div><svg class="a" style="left:96.0px;top:1249.1px;" width="13" height="8" viewBox="0 0 13 8"><polyline points="1,1 6.5,7 12,1" fill="none" stroke="#1d6ac6" stroke-width="2" stroke-linecap="round" stroke-linejoin="round"/></svg><div class="a t" style="top:1244.7px;font-size:17.2px;line-height:17.2px;color:#2b313c;left:133.5px;">Total Bakery</div><div class="a t" style="top:1244.6px;font-size:17.3px;line-height:17.3px;color:#2b313c;left:-993.7px;width:1500px;text-align:right;">$3,200,000,000</div><div class="a t" style="top:1244.6px;font-size:17.3px;line-height:17.3px;color:#2b313c;left:-853.4px;width:1500px;text-align:right;">$3,200,000,000</div><div class="a t" style="top:1244.6px;font-size:17.3px;line-height:17.3px;color:#2b313c;left:669.0px;">$3,220,000,000</div><div class="a t" style="top:1244.6px;font-size:17.3px;line-height:17.3px;color:#1d6e1d;left:-615.8px;width:1500px;text-align:right;">1.94%</div><div class="a t" style="top:1244.6px;font-size:17.3px;line-height:17.3px;color:#1d6e1d;left:906.5px;">$40,000,000</div><div class="a t" style="top:1244.6px;font-size:17.3px;line-height:17.3px;color:#1d6e1d;left:-360.7px;width:1500px;text-align:right;">$40,000,000</div><div class="a t" style="top:1244.6px;font-size:17.3px;line-height:17.3px;color:#2b313c;left:-215.6px;width:1500px;text-align:right;">$200,000,000</div><div class="a t" style="top:1244.6px;font-size:17.3px;line-height:17.3px;color:#2b313c;left:-110.6px;width:1500px;text-align:right;">60.00%</div><div class="a t" style="top:1244.6px;font-size:17.3px;line-height:17.3px;color:#2b313c;left:29.4px;width:1500px;text-align:right;">$3,220,000,000</div><div class="a t" style="top:1244.6px;font-size:17.3px;line-height:17.3px;color:#2b313c;left:136.5px;width:1500px;text-align:right;">51.25%</div><div class="a t" style="top:1244.6px;font-size:17.3px;line-height:17.3px;color:#1d6e1d;left:241.0px;width:1500px;text-align:right;">4.38%</div><div class="a t" style="top:1244.6px;font-size:17.3px;line-height:17.3px;color:#2b313c;left:384.2px;width:1500px;text-align:right;">$200,000,000</div><div class="a t" style="top:1244.6px;font-size:17.3px;line-height:17.3px;color:#2b313c;left:490.2px;width:1500px;text-align:right;">60.00%</div><div class="a t" style="top:1244.6px;font-size:17.3px;line-height:17.3px;color:#2b313c;left:630.0px;width:1500px;text-align:right;">$3,220,000,000</div><div class="a t" style="top:1244.6px;font-size:17.3px;line-height:17.3px;color:#2b313c;left:735.6px;width:1500px;text-align:right;">51.25%</div><div class="a t" style="top:1244.6px;font-size:17.3px;line-height:17.3px;color:#1d6e1d;left:845.1px;width:1500px;text-align:right;">4.38%</div><div class="a t" style="top:1244.6px;font-size:17.3px;line-height:17.3px;color:#2b313c;left:2384.7px;">$200,000,000</div><div class="a t" style="top:353.6px;font-size:17.3px;line-height:17.3px;color:#1e2430;font-weight:700;left:1659.0px;">vs</div><div class="a t" style="top:374.0px;font-size:17.3px;line-height:17.3px;color:#1e2430;font-weight:700;left:1659.0px;">Proj</div><div class="a t" style="top:394.4px;font-size:17.3px;line-height:17.3px;color:#1e2430;font-weight:700;left:1659.0px;">ect</div><div class="a t" style="top:414.8px;font-size:17.3px;line-height:17.3px;color:#1e2430;font-weight:700;left:1659.0px;">ion</div><div class="a" style="left:82.0px;top:1273.4px;width:2318.0px;height:32.6px;background:#dcdfe9;"></div><div class="a" style="left:92.0px;top:1286.0px;width:932.0px;height:10.0px;background:#9aa1ab;border-radius:5px;"></div><div class="a" style="left:2378.5px;top:429.4px;width:10.5px;height:361.6px;background:rgba(105,114,128,0.62);border-radius:5.2px;"></div></div></div>
<div class="a" style="left:2668px;top:640px;width:1828px;height:1308px;overflow:hidden;box-shadow:0 0 0 1px #e3e5ea;background:#f0f3f7;"><div class="a" style="left:87.0px;top:88.0px;width:1741.0px;height:1220.0px;background:#f0f3f7;"></div><div class="a" style="left:0.0px;top:0.0px;width:87.0px;height:1308.0px;background:#0e2a47;"></div><svg class="a" style="left:10.3px;top:24.5px;width:64px;height:38.6px;" width="64" height="38.6" viewBox="0 0 64 38.6">
<path d="M24.6 0 L38.4 0 L15.2 31.5 C13 34.5 13.5 37 15.6 38.4 L2.5 38.4 C0 36 -0.5 31 1.8 28 Z" fill="#0057a8"/>
<path d="M40 0.4 L62.3 27.9 C64.5 31 64 36 61.6 38.4 L48.2 38.4 C51 36.5 51.5 32.5 49.3 29.7 L32.6 9.1 Z" fill="#00a2e2"/>
<path d="M31.9 30.8 C30.5 28 29 26.3 24 26.1 L19.5 26.1 C18 26.5 18.3 28 19 30 C21 35 27 36.5 31.9 37.2 Z" fill="#0057a8"/>
<path d="M31.9 30.8 C33.3 28 34.8 26.3 39.8 26.1 L44.3 26.1 C45.8 26.5 45.5 28 44.8 30 C42.8 35 36.8 36.5 31.9 37.2 Z" fill="#0057a8"/>
<path d="M31.9 12.3 C28 17 26.5 24 31.9 30.4 C37.3 24 35.8 17 31.9 12.3 Z" fill="#0057a8" stroke="#0e2a47" stroke-width="1.3"/>
<line x1="31.9" y1="31" x2="31.9" y2="37" stroke="#0e2a47" stroke-width="0.6"/>
</svg><div class="a" style="left:0.0px;top:88.0px;width:87.0px;height:2.0px;background:#2370c9;"></div><div class="a" style="left:0.0px;top:90.0px;width:87.0px;height:67.4px;background:#021427;"></div><div class="a" style="left:0.0px;top:157.4px;width:87.0px;height:2.0px;background:#2370c9;"></div><svg class="a" style="left:31.7px;top:121.2px;" width="23.6" height="5.0" viewBox="0 0 23.6 5.0"><circle cx="2.5" cy="2.5" r="2.5" fill="#fff"/><circle cx="11.8" cy="2.5" r="2.5" fill="#fff"/><circle cx="21.1" cy="2.5" r="2.5" fill="#fff"/></svg><svg class="a" style="left:38.0px;top:201.0px;" width="12" height="20" viewBox="0 0 12 20"><polyline points="11,1 1,10.0 11,19" fill="none" stroke="#fff" stroke-width="2.2" stroke-linecap="round" stroke-linejoin="round"/></svg><div class="a" style="left:10.4px;top:249.6px;width:65.6px;height:65.4px;background:#1f6bbd;border-radius:6px;"></div><svg class="a" style="left:31.5px;top:271.0px;" width="24" height="23" viewBox="0 0 24 23"><polyline points="1.5,0.5 1.5,22 23,22" fill="none" stroke="#fff" stroke-width="2"/>
<line x1="8.28" y1="14.26" x2="8.28" y2="19.78" stroke="#fff" stroke-width="2"/>
<line x1="13.799999999999999" y1="10.35" x2="13.799999999999999" y2="19.78" stroke="#fff" stroke-width="2"/>
<line x1="19.32" y1="4.14" x2="19.32" y2="19.78" stroke="#fff" stroke-width="2"/></svg><svg class="a" style="left:30.0px;top:341.6px;" width="25" height="25" viewBox="0 0 25 25"><path d="M2 24 L3.5 18.5 L18 4.5 L22.5 9 L6.5 22.5 Z" fill="none" stroke="#fff" stroke-width="2" stroke-linejoin="round"/>
<line x1="20" y1="1" x2="24.5" y2="5.5" stroke="#fff" stroke-width="2" stroke-linecap="round"/></svg><svg class="a" style="left:30.0px;top:415.8px;" width="25" height="19" viewBox="0 0 25 19"><polyline points="1,2.0 2.8,3.8 6,0.5" fill="none" stroke="#fff" stroke-width="1.8" stroke-linecap="round"/><line x1="9" y1="2.5" x2="24.5" y2="2.5" stroke="#fff" stroke-width="2"/><polyline points="1,9.0 2.8,10.8 6,7.5" fill="none" stroke="#fff" stroke-width="1.8" stroke-linecap="round"/><line x1="9" y1="9.5" x2="24.5" y2="9.5" stroke="#fff" stroke-width="2"/><polyline points="1,16.0 2.8,17.8 6,14.5" fill="none" stroke="#fff" stroke-width="1.8" stroke-linecap="round"/><line x1="9" y1="16.5" x2="24.5" y2="16.5" stroke="#fff" stroke-width="2"/></svg><div class="a" style="left:87.0px;top:0.0px;width:1741.0px;height:88.0px;background:#f6f7f9;border-bottom:1px solid #dde3ea;box-shadow:0 1px 3px rgba(40,60,90,0.10);"></div><div class="a t" style="top:36.4px;font-size:16.8px;line-height:16.8px;color:#1e2430;font-weight:700;letter-spacing:1.5px;left:115.0px;">MERCHANDISING</div><div class="a" style="left:300.4px;top:21.0px;width:0.0px;height:46.0px;border-left:1.5px dotted #9fb8d6;"></div><div class="a t" style="top:35.4px;font-size:19.5px;line-height:19.5px;color:#252b36;left:323.7px;">20 - Southern</div><svg class="a" style="left:1428.0px;top:30.0px;" width="27" height="27" viewBox="0 0 27 27"><circle cx="10.919999999999998" cy="10.919999999999998" r="9.719999999999999" fill="none" stroke="#3d4b5c" stroke-width="2"/><line x1="17.9184" y1="17.9184" x2="26" y2="26" stroke="#3d4b5c" stroke-width="2" stroke-linecap="round"/></svg><svg class="a" style="left:1497.0px;top:30.0px;" width="24" height="26" viewBox="0 0 24 26"><path d="M11.0 3.12 C6.16 3.12 4.84 7.8 4.84 11.700000000000001 L4.84 14.3 C4.84 17.16 1.76 18.2 0.88 20.8 L21.119999999999997 20.8 C20.240000000000002 18.2 17.16 17.16 17.16 14.3 L17.16 11.700000000000001 C17.16 7.8 15.84 3.12 11.0 3.12 Z" fill="none" stroke="#3d4b5c" stroke-width="2" stroke-linejoin="round"/>
<path d="M8.8 23.400000000000002 Q11.0 25.74 13.2 23.400000000000002" fill="none" stroke="#3d4b5c" stroke-width="2" stroke-linecap="round"/>
<circle cx="18.259999999999998" cy="4.94" r="5.94" fill="#c42b1c" stroke="#f6f7f9" stroke-width="1.98"/></svg><svg class="a" style="left:1560.0px;top:29.0px;" width="27" height="29" viewBox="0 0 27 29"><line x1="0.0" y1="3.77" x2="11.423076923076923" y2="3.77" stroke="#3d4b5c" stroke-width="2" stroke-linecap="round"/><line x1="16.615384615384617" y1="3.77" x2="27.000000000000004" y2="3.77" stroke="#3d4b5c" stroke-width="2" stroke-linecap="round"/><line x1="16.615384615384617" y1="0.03153846153846107" x2="16.615384615384617" y2="7.508461538461539" stroke="#3d4b5c" stroke-width="2" stroke-linecap="round"/><line x1="0.0" y1="14.5" x2="7.788461538461539" y2="14.5" stroke="#3d4b5c" stroke-width="2" stroke-linecap="round"/><line x1="13.500000000000002" y1="14.5" x2="27.000000000000004" y2="14.5" stroke="#3d4b5c" stroke-width="2" stroke-linecap="round"/><line x1="7.788461538461539" y1="10.76153846153846" x2="7.788461538461539" y2="18.23846153846154" stroke="#3d4b5c" stroke-width="2" stroke-linecap="round"/><line x1="0.0" y1="25.23" x2="13.500000000000002" y2="25.23" stroke="#3d4b5c" stroke-width="2" stroke-linecap="round"/><line x1="19.211538461538463" y1="25.23" x2="27.000000000000004" y2="25.23" stroke="#3d4b5c" stroke-width="2" stroke-linecap="round"/><line x1="19.211538461538463" y1="21.49153846153846" x2="19.211538461538463" y2="28.96846153846154" stroke="#3d4b5c" stroke-width="2" stroke-linecap="round"/></svg><svg class="a" style="left:1624.5px;top:28.6px;" width="30" height="30" viewBox="0 0 30 30"><circle cx="15.0" cy="15.0" r="14" fill="none" stroke="#3d4b5c" stroke-width="2"/>
<path d="M10.52 11.92 C10.52 6.32 19.48 6.32 19.48 11.92 C19.48 15.7 15.0 15.7 15.0 19.2" fill="none" stroke="#3d4b5c" stroke-width="2" stroke-linecap="round"/>
<circle cx="15.0" cy="22.700000000000003" r="1.2" fill="#3d4b5c"/></svg><div class="a" style="left:1690.4px;top:24.2px;width:39.8px;height:39.8px;border-radius:50%;background:#6f96be;box-shadow:0 0 0 2px #fff,0 1px 3px rgba(0,0,0,0.25);"></div><div class="a t" style="top:34.8px;font-size:19.9px;line-height:19.9px;color:#fff;font-weight:700;left:960.3px;width:1500px;text-align:center;">AD</div><div class="a t" style="top:24.1px;font-size:18.8px;line-height:18.8px;color:#1e2430;left:1744.0px;">Chris</div><div class="a t" style="top:49.3px;font-size:18.8px;line-height:18.8px;color:#4a5568;left:1744.0px;">VPMM</div><svg class="a" style="left:116.0px;top:110.0px;" width="18" height="16" viewBox="0 0 18 16"><line x1="1.5" y1="8.0" x2="17" y2="8.0" stroke="#1d6ac6" stroke-width="2.2" stroke-linecap="round"/><polyline points="8.0,1 1.5,8.0 8.0,15" fill="none" stroke="#1d6ac6" stroke-width="2.2" stroke-linecap="round" stroke-linejoin="round"/></svg><div class="a t" style="top:109.8px;font-size:17px;line-height:17px;color:#1d6ac6;font-weight:700;letter-spacing:1.7px;left:142.8px;">DASHBOARD</div><div class="a t" style="top:142.6px;font-size:32.9px;line-height:32.9px;color:#1e2430;font-weight:700;left:115.0px;">Adjustment worksheet 2025 Q2</div><div class="a" style="left:617.0px;top:137.5px;width:248.3px;height:43.0px;background:#fff;box-sizing:border-box;border:1.5px solid #c7d9ed;border-radius:6px;"></div><div class="a t" style="top:150.1px;font-size:19.3px;line-height:19.3px;color:#1e2430;left:630.0px;">Q1 FY2025</div><div class="a" style="left:630.0px;top:176.5px;width:99.0px;height:3.0px;background:#1f8cf0;border-radius:2px;"></div><div class="a" style="left:739.5px;top:145.0px;width:1.5px;height:28.0px;background:#c5d6ea;"></div><div class="a t" style="top:150.1px;font-size:19.3px;line-height:19.3px;color:#1e2430;left:753.6px;">Q2 FY2025</div><svg class="a" style="left:883.2px;top:143.5px;" width="30.4" height="30.4" viewBox="0 0 30.4 30.4"><circle cx="15.2" cy="15.2" r="14.2" fill="none" stroke="#1d6ac6" stroke-width="2.1"/>
<path d="M10.655999999999999 12.076 C10.655999999999999 6.395999999999999 19.744 6.395999999999999 19.744 12.076 C19.744 15.91 15.2 15.91 15.2 19.46" fill="none" stroke="#1d6ac6" stroke-width="2.1" stroke-linecap="round"/>
<circle cx="15.2" cy="23.009999999999998" r="1.26" fill="#1d6ac6"/></svg><svg class="a" style="left:1147.0px;top:149.5px;" width="18" height="18" viewBox="0 0 18 18"><path d="M1.5900000000000007 6.66 A7.8 7.8 0 1 1 1.9800000000000004 12.51" fill="none" stroke="#3d4b5c" stroke-width="1.8" stroke-linecap="round"/>
<polyline points="1.2000000000000002 2.37,1.5900000000000007 7.83,7.05 7.4399999999999995" fill="none" stroke="#3d4b5c" stroke-width="1.8" stroke-linecap="round" stroke-linejoin="round"/>
<polyline points="9.0 5.1,9.0 9.0,12.120000000000001 11.73" fill="none" stroke="#3d4b5c" stroke-width="1.8" stroke-linecap="round"/></svg><div class="a t" style="top:150.7px;font-size:17.0px;line-height:17.0px;color:#2a303b;left:1179.0px;">Last updated Projection 06/17/2025 11AM PDT</div><div class="a t" style="top:150.7px;font-size:17.0px;line-height:17.0px;color:#2a303b;left:1543.5px;">Actuals 06/17/2025 11AM PDT</div><div class="a t" style="top:150.1px;font-size:17.6px;line-height:17.6px;color:#2a303b;left:299.0px;width:1500px;text-align:right;">...</div><div class="a" style="left:87.0px;top:197.2px;width:1741.0px;height:65.0px;background:#fcfcfe;"></div><div class="a t" style="top:220.8px;font-size:19.5px;line-height:19.5px;color:#14181f;font-weight:700;left:115.0px;">Mid-Atlantic</div><div class="a" style="left:237.6px;top:213.6px;width:134.8px;height:33.4px;background:#fdf0d3;box-sizing:border-box;border:1.5px solid #f1c96a;border-radius:8px;"></div><div class="a t" style="top:222.4px;font-size:17.6px;line-height:17.6px;color:#a3440f;left:249.5px;">Read Only</div><svg class="a" style="left:339.5px;top:219.8px;" width="21" height="21" viewBox="0 0 21 21"><circle cx="10.5" cy="10.5" r="9" fill="none" stroke="#a3440f" stroke-width="2"/><path d="M7.6 8.3 C7.6 5.2 13.4 5.2 13.4 8.3 C13.4 10.4 10.5 10.4 10.5 12.5" fill="none" stroke="#a3440f" stroke-width="2" stroke-linecap="round"/><circle cx="10.5" cy="15.6" r="1.3" fill="#a3440f"/></svg><div class="a" style="left:383.3px;top:208.0px;width:1.5px;height:44.0px;background:#c5d6ea;"></div><div class="a t" style="top:220.5px;font-size:19.9px;line-height:19.9px;color:#1e2430;left:396.0px;">Showing roll up for</div><div class="a t" style="top:221.2px;font-size:19px;line-height:19px;color:#14181f;font-weight:700;left:573.0px;">53 Categories</div><div class="a t" style="top:220.8px;font-size:19.5px;line-height:19.5px;color:#1e2430;left:709.0px;">matching to</div><div class="a" style="left:822.0px;top:213.5px;width:205.6px;height:33.5px;background:#e9f2fa;box-sizing:border-box;border:1.5px solid #b7d1ea;border-radius:8px;"></div><div class="a t" style="top:222.3px;font-size:17.8px;line-height:17.8px;color:#1f4f8f;left:831.4px;">3010000 - Grocery Fo...</div><div class="a t" style="top:221.4px;font-size:18.8px;line-height:18.8px;color:#1e2430;left:1039.5px;">AND</div><div class="a" style="left:1092.0px;top:213.5px;width:205.7px;height:33.5px;background:#f7ecfd;box-sizing:border-box;border:1.5px solid #dba6f2;border-radius:8px;"></div><div class="a t" style="top:222.3px;font-size:17.8px;line-height:17.8px;color:#5e2390;left:1099.6px;">Desk 1 - Canned good...</div><div class="a t" style="top:221.2px;font-size:19px;line-height:19px;color:#1d6ac6;left:1309.0px;text-decoration:underline;text-underline-offset:3px;">Change</div><div class="a t" style="top:220.4px;font-size:20.6px;line-height:20.6px;color:#1d6ac6;left:284.0px;width:1500px;text-align:right;">Audit History</div><div class="a" style="left:0;top:0;width:1828px;height:1308px;overflow:hidden;"><div class="a" style="left:87.0px;top:262.0px;width:1741.0px;height:66.5px;background:#dcdfe9;border-bottom:2px solid #97a0ad;box-sizing:border-box;"></div><div class="a" style="left:389.4px;top:264.0px;width:2.0px;height:62.5px;background:#a6adba;"></div><div class="a" style="left:574.8px;top:264.0px;width:2.0px;height:62.5px;background:#a6adba;"></div><div class="a" style="left:759.7px;top:264.0px;width:2.0px;height:62.5px;background:#a6adba;"></div><div class="a" style="left:945.0px;top:264.0px;width:2.0px;height:62.5px;background:#a6adba;"></div><div class="a" style="left:1130.4px;top:264.0px;width:2.0px;height:62.5px;background:#a6adba;"></div><div class="a" style="left:1315.5px;top:264.0px;width:2.0px;height:62.5px;background:#a6adba;"></div><div class="a" style="left:1500.7px;top:264.0px;width:2.0px;height:62.5px;background:#a6adba;"></div><div class="a" style="left:1685.5px;top:264.0px;width:2.0px;height:62.5px;background:#a6adba;"></div><div class="a t" style="top:287.9px;font-size:18.4px;line-height:18.4px;color:#1e2430;font-weight:700;left:402.9px;">Line 1</div><div class="a t" style="top:287.9px;font-size:18.4px;line-height:18.4px;color:#1e2430;font-weight:700;left:588.3px;">Book Gross Profit</div><div class="a t" style="top:287.9px;font-size:18.4px;line-height:18.4px;color:#1e2430;font-weight:700;left:773.2px;">Markdown</div><div class="a t" style="top:287.9px;font-size:18.4px;line-height:18.4px;color:#1e2430;font-weight:700;left:958.5px;">Shrink</div><div class="a t" style="top:287.9px;font-size:18.4px;line-height:18.4px;color:#1e2430;font-weight:700;left:1143.9px;">Line 5</div><div class="a t" style="top:287.9px;font-size:18.4px;line-height:18.4px;color:#1e2430;font-weight:700;left:1329.0px;">Line 6</div><div class="a t" style="top:287.9px;font-size:18.4px;line-height:18.4px;color:#1e2430;font-weight:700;left:1514.2px;">Line 7</div><div class="a t" style="top:287.9px;font-size:18.4px;line-height:18.4px;color:#1e2430;font-weight:700;left:1699.0px;">Line 8</div><div class="a t" style="top:286.7px;font-size:19.8px;line-height:19.8px;color:#1d6ac6;left:104.4px;">Expand all data attributes</div><svg class="a" style="left:341.4px;top:286.0px;" width="12" height="18" viewBox="0 0 12 18"><polyline points="1,6.84 6.0,1 11,6.84" fill="none" stroke="#1d6ac6" stroke-width="1.9" stroke-linecap="round" stroke-linejoin="round"/><polyline points="1,11.16 6.0,17 11,11.16" fill="none" stroke="#1d6ac6" stroke-width="1.9" stroke-linecap="round" stroke-linejoin="round"/></svg><div class="a" style="left:87.0px;top:1300.0px;width:1741.0px;height:8.0px;background:#fbfcfd;"></div><div class="a" style="left:87.0px;top:328.5px;width:1741.0px;height:87.3px;background:#f2f3f5;"></div><div class="a" style="left:87.0px;top:414.3px;width:1741.0px;height:1.5px;background:#dfe2e8;"></div><div class="a" style="left:87.0px;top:415.8px;width:1741.0px;height:87.8px;background:#ffffff;"></div><div class="a" style="left:87.0px;top:502.1px;width:1741.0px;height:1.5px;background:#dfe2e8;"></div><div class="a" style="left:87.0px;top:503.6px;width:1741.0px;height:88.2px;background:#e6f4fd;"></div><div class="a" style="left:87.0px;top:590.3px;width:1741.0px;height:1.5px;background:#dfe2e8;"></div><div class="a" style="left:87.0px;top:591.8px;width:1741.0px;height:87.8px;background:#ffffff;"></div><div class="a" style="left:87.0px;top:678.1px;width:1741.0px;height:1.5px;background:#dfe2e8;"></div><div class="a" style="left:87.0px;top:679.6px;width:1741.0px;height:88.1px;background:#f2f3f5;"></div><div class="a" style="left:87.0px;top:766.2px;width:1741.0px;height:1.5px;background:#dfe2e8;"></div><div class="a" style="left:87.0px;top:767.7px;width:1741.0px;height:87.1px;background:#ffffff;"></div><div class="a" style="left:87.0px;top:853.3px;width:1741.0px;height:1.5px;background:#dfe2e8;"></div><div class="a" style="left:87.0px;top:854.8px;width:1741.0px;height:361.0px;background:#f2f3f5;"></div><div class="a" style="left:87.0px;top:1214.3px;width:1741.0px;height:1.5px;background:#dfe2e8;"></div><div class="a" style="left:87.0px;top:1215.8px;width:1741.0px;height:88.6px;background:#e6f4fd;"></div><div class="a" style="left:87.0px;top:1302.9px;width:1741.0px;height:1.5px;background:#dfe2e8;"></div><div class="a" style="left:239.2px;top:328.5px;width:1.5px;height:975.9px;background:#dde0e6;"></div><div class="a" style="left:389.6px;top:328.5px;width:1.5px;height:975.9px;background:#dde0e6;"></div><div class="a" style="left:575.0px;top:328.5px;width:1.5px;height:975.9px;background:#dde0e6;"></div><div class="a" style="left:760.0px;top:328.5px;width:1.5px;height:975.9px;background:#dde0e6;"></div><div class="a" style="left:945.2px;top:328.5px;width:1.5px;height:975.9px;background:#dde0e6;"></div><div class="a" style="left:1130.7px;top:328.5px;width:1.5px;height:975.9px;background:#dde0e6;"></div><div class="a" style="left:1315.8px;top:328.5px;width:1.5px;height:975.9px;background:#dde0e6;"></div><div class="a" style="left:1501.0px;top:328.5px;width:1.5px;height:975.9px;background:#dde0e6;"></div><div class="a" style="left:1685.8px;top:328.5px;width:1.5px;height:975.9px;background:#dde0e6;"></div><div class="a t" style="top:363.9px;font-size:18.6px;line-height:18.6px;color:#1e2430;left:98.3px;">Q1 FY2025</div><svg class="a" style="left:207.0px;top:363.0px;" width="13" height="20" viewBox="0 0 13 20"><polyline points="1,7.6 6.5,1 12,7.6" fill="none" stroke="#1e2430" stroke-width="1.9" stroke-linecap="round" stroke-linejoin="round"/><polyline points="1,12.4 6.5,19 12,12.4" fill="none" stroke="#1e2430" stroke-width="1.9" stroke-linecap="round" stroke-linejoin="round"/></svg><div class="a t" style="top:437.1px;font-size:18.6px;line-height:18.6px;color:#1e2430;left:98.3px;">Quarter</div><div class="a t" style="top:465.0px;font-size:18.6px;line-height:18.6px;color:#1e2430;left:98.3px;">to date</div><svg class="a" style="left:207.0px;top:451.0px;" width="13" height="20" viewBox="0 0 13 20"><polyline points="1,7.6 6.5,1 12,7.6" fill="none" stroke="#1e2430" stroke-width="1.9" stroke-linecap="round" stroke-linejoin="round"/><polyline points="1,12.4 6.5,19 12,12.4" fill="none" stroke="#1e2430" stroke-width="1.9" stroke-linecap="round" stroke-linejoin="round"/></svg><div class="a t" style="top:539.9px;font-size:18.6px;line-height:18.6px;color:#1e2430;left:98.3px;">Period 1</div><svg class="a" style="left:202.0px;top:538.0px;" width="13" height="20" viewBox="0 0 13 20"><polyline points="1,7.6 6.5,1 12,7.6" fill="none" stroke="#1e2430" stroke-width="1.9" stroke-linecap="round" stroke-linejoin="round"/><polyline points="1,12.4 6.5,19 12,12.4" fill="none" stroke="#1e2430" stroke-width="1.9" stroke-linecap="round" stroke-linejoin="round"/></svg><svg class="a" style="left:99.0px;top:610.9px;" width="14" height="14" viewBox="0 0 14 14"><circle cx="7.0" cy="7.0" r="6.0" fill="none" stroke="#1a9c2a" stroke-width="1.7"/><polyline points="4.2,7.28 6.3,9.38 9.94,5.18" fill="none" stroke="#1a9c2a" stroke-width="1.7" stroke-linecap="round" stroke-linejoin="round"/></svg><div class="a t" style="top:607.8px;font-size:18.6px;line-height:18.6px;color:#1e2430;left:118.0px;">Week 1</div><svg class="a" style="left:185.0px;top:611.6px;" width="12.6" height="11.5" viewBox="0 0 12.6 11.5"><path d="M0.5 0.5 L12.1 0.5 L12.1 8.5 L3 8.5 L0.5 11.0 Z" fill="#252b36"/></svg><svg class="a" style="left:215.0px;top:607.1px;" width="13" height="20" viewBox="0 0 13 20"><polyline points="1,7.6 6.5,1 12,7.6" fill="none" stroke="#1e2430" stroke-width="1.9" stroke-linecap="round" stroke-linejoin="round"/><polyline points="1,12.4 6.5,19 12,12.4" fill="none" stroke="#1e2430" stroke-width="1.9" stroke-linecap="round" stroke-linejoin="round"/></svg><div class="a t" style="top:648.3px;font-size:16.1px;line-height:16.1px;color:#4f5b6b;left:98.3px;">03/20 - 03/26</div><svg class="a" style="left:219.1px;top:647.9px;" width="3.8" height="16.4" viewBox="0 0 3.8 16.4"><circle cx="1.9" cy="1.9" r="1.9" fill="#252b36"/><circle cx="1.9" cy="8.2" r="1.9" fill="#252b36"/><circle cx="1.9" cy="14.5" r="1.9" fill="#252b36"/></svg><svg class="a" style="left:99.0px;top:698.7px;" width="14" height="14" viewBox="0 0 14 14"><circle cx="7.0" cy="7.0" r="6.0" fill="none" stroke="#1a9c2a" stroke-width="1.7"/><polyline points="4.2,7.28 6.3,9.38 9.94,5.18" fill="none" stroke="#1a9c2a" stroke-width="1.7" stroke-linecap="round" stroke-linejoin="round"/></svg><div class="a t" style="top:695.6px;font-size:18.6px;line-height:18.6px;color:#1e2430;left:118.0px;">Week 2</div><svg class="a" style="left:185.0px;top:699.4px;" width="12.6" height="11.5" viewBox="0 0 12.6 11.5"><path d="M0.5 0.5 L12.1 0.5 L12.1 8.5 L3 8.5 L0.5 11.0 Z" fill="#252b36"/></svg><svg class="a" style="left:215.0px;top:694.9px;" width="13" height="20" viewBox="0 0 13 20"><polyline points="1,7.6 6.5,1 12,7.6" fill="none" stroke="#1e2430" stroke-width="1.9" stroke-linecap="round" stroke-linejoin="round"/><polyline points="1,12.4 6.5,19 12,12.4" fill="none" stroke="#1e2430" stroke-width="1.9" stroke-linecap="round" stroke-linejoin="round"/></svg><div class="a t" style="top:736.1px;font-size:16.1px;line-height:16.1px;color:#4f5b6b;left:98.3px;">03/20 - 03/26</div><svg class="a" style="left:219.1px;top:735.7px;" width="3.8" height="16.4" viewBox="0 0 3.8 16.4"><circle cx="1.9" cy="1.9" r="1.9" fill="#252b36"/><circle cx="1.9" cy="8.2" r="1.9" fill="#252b36"/><circle cx="1.9" cy="14.5" r="1.9" fill="#252b36"/></svg><svg class="a" style="left:99.0px;top:786.8px;" width="14" height="14" viewBox="0 0 14 14"><circle cx="7.0" cy="7.0" r="6.0" fill="none" stroke="#1a9c2a" stroke-width="1.7"/><polyline points="4.2,7.28 6.3,9.38 9.94,5.18" fill="none" stroke="#1a9c2a" stroke-width="1.7" stroke-linecap="round" stroke-linejoin="round"/></svg><div class="a t" style="top:783.7px;font-size:18.6px;line-height:18.6px;color:#1e2430;left:118.0px;">Week 3</div><svg class="a" style="left:185.0px;top:787.5px;" width="12.6" height="11.5" viewBox="0 0 12.6 11.5"><path d="M0.5 0.5 L12.1 0.5 L12.1 8.5 L3 8.5 L0.5 11.0 Z" fill="#252b36"/></svg><svg class="a" style="left:215.0px;top:783.0px;" width="13" height="20" viewBox="0 0 13 20"><polyline points="1,7.6 6.5,1 12,7.6" fill="none" stroke="#1e2430" stroke-width="1.9" stroke-linecap="round" stroke-linejoin="round"/><polyline points="1,12.4 6.5,19 12,12.4" fill="none" stroke="#1e2430" stroke-width="1.9" stroke-linecap="round" stroke-linejoin="round"/></svg><div class="a t" style="top:824.2px;font-size:16.1px;line-height:16.1px;color:#4f5b6b;left:98.3px;">03/20 - 03/26</div><svg class="a" style="left:219.1px;top:823.8px;" width="3.8" height="16.4" viewBox="0 0 3.8 16.4"><circle cx="1.9" cy="1.9" r="1.9" fill="#252b36"/><circle cx="1.9" cy="8.2" r="1.9" fill="#252b36"/><circle cx="1.9" cy="14.5" r="1.9" fill="#252b36"/></svg><svg class="a" style="left:99.0px;top:1011.2px;" width="14" height="14" viewBox="0 0 14 14"><circle cx="7.0" cy="7.0" r="6.0" fill="none" stroke="#1a9c2a" stroke-width="1.7"/><polyline points="4.2,7.28 6.3,9.38 9.94,5.18" fill="none" stroke="#1a9c2a" stroke-width="1.7" stroke-linecap="round" stroke-linejoin="round"/></svg><div class="a t" style="top:1008.1px;font-size:18.6px;line-height:18.6px;color:#1e2430;left:118.0px;">Week 4</div><svg class="a" style="left:185.0px;top:1011.9px;" width="12.6" height="11.5" viewBox="0 0 12.6 11.5"><path d="M0.5 0.5 L12.1 0.5 L12.1 8.5 L3 8.5 L0.5 11.0 Z" fill="#252b36"/></svg><svg class="a" style="left:215.0px;top:1007.4px;" width="13" height="20" viewBox="0 0 13 20"><polyline points="1,7.6 6.5,1 12,7.6" fill="none" stroke="#1e2430" stroke-width="1.9" stroke-linecap="round" stroke-linejoin="round"/><polyline points="1,12.4 6.5,19 12,12.4" fill="none" stroke="#1e2430" stroke-width="1.9" stroke-linecap="round" stroke-linejoin="round"/></svg><div class="a t" style="top:1048.5px;font-size:16.1px;line-height:16.1px;color:#4f5b6b;left:98.3px;">03/20 - 03/26</div><svg class="a" style="left:219.1px;top:1048.2px;" width="3.8" height="16.4" viewBox="0 0 3.8 16.4"><circle cx="1.9" cy="1.9" r="1.9" fill="#252b36"/><circle cx="1.9" cy="8.2" r="1.9" fill="#252b36"/><circle cx="1.9" cy="14.5" r="1.9" fill="#252b36"/></svg><div class="a t" style="top:1252.0px;font-size:18.6px;line-height:18.6px;color:#1e2430;left:98.5px;">Period 2</div><svg class="a" style="left:201.0px;top:1250.0px;" width="13" height="20" viewBox="0 0 13 20"><polyline points="1,7.6 6.5,1 12,7.6" fill="none" stroke="#1e2430" stroke-width="1.9" stroke-linecap="round" stroke-linejoin="round"/><polyline points="1,12.4 6.5,19 12,12.4" fill="none" stroke="#1e2430" stroke-width="1.9" stroke-linecap="round" stroke-linejoin="round"/></svg><div class="a t" style="top:341.3px;font-size:18.4px;line-height:18.4px;color:#1e2430;left:252.0px;">Actual</div><div class="a t" style="top:385.1px;font-size:18.4px;line-height:18.4px;color:#1e2430;left:252.0px;">Projection</div><div class="a t" style="top:428.6px;font-size:18.4px;line-height:18.4px;color:#1e2430;left:252.0px;">Actual</div><div class="a t" style="top:472.4px;font-size:18.4px;line-height:18.4px;color:#1e2430;left:252.0px;">Projection</div><div class="a t" style="top:516.4px;font-size:18.4px;line-height:18.4px;color:#1e2430;left:252.0px;">Actual</div><div class="a t" style="top:560.2px;font-size:18.4px;line-height:18.4px;color:#1e2430;left:252.0px;">Projection</div><div class="a t" style="top:604.6px;font-size:18.4px;line-height:18.4px;color:#1e2430;left:252.0px;">Actual</div><div class="a t" style="top:648.4px;font-size:18.4px;line-height:18.4px;color:#1e2430;left:252.0px;">Projection</div><div class="a t" style="top:692.4px;font-size:18.4px;line-height:18.4px;color:#1e2430;left:252.0px;">Actual</div><div class="a t" style="top:736.2px;font-size:18.4px;line-height:18.4px;color:#1e2430;left:252.0px;">Projection</div><div class="a t" style="top:780.5px;font-size:18.4px;line-height:18.4px;color:#1e2430;left:252.0px;">Actual</div><div class="a t" style="top:824.3px;font-size:18.4px;line-height:18.4px;color:#1e2430;left:252.0px;">Projection</div><svg class="a" style="left:256.6px;top:871.0px;" width="12.5" height="18" viewBox="0 0 12.5 18"><polyline points="1,6.84 6.25,1 11.5,6.84" fill="none" stroke="#1d6ac6" stroke-width="1.9" stroke-linecap="round" stroke-linejoin="round"/><polyline points="1,11.16 6.25,17 11.5,11.16" fill="none" stroke="#1d6ac6" stroke-width="1.9" stroke-linecap="round" stroke-linejoin="round"/></svg><div class="a t" style="top:872.8px;font-size:17px;line-height:17px;color:#1e2430;left:280.0px;">Merch. FCST</div><div class="a t" style="top:966.6px;font-size:18.4px;line-height:18.4px;color:#1e2430;left:252.0px;">Projection</div><div class="a t" style="top:1010.3px;font-size:18.4px;line-height:18.4px;color:#1e2430;left:252.0px;">FCST to PROJ</div><div class="a t" style="top:1054.1px;font-size:18.4px;line-height:18.4px;color:#1e2430;left:252.0px;">WoW FCST var</div><div class="a t" style="top:1097.8px;font-size:18.4px;line-height:18.4px;color:#1e2430;left:252.0px;">DS Forecast</div><div class="a t" style="top:1141.5px;font-size:18.4px;line-height:18.4px;color:#1e2430;left:252.0px;">Actual to date</div><div class="a t" style="top:1185.4px;font-size:18.4px;line-height:18.4px;color:#1e2430;left:252.0px;">Last year actual</div><div class="a t" style="top:1252.2px;font-size:18.4px;line-height:18.4px;color:#1e2430;left:252.0px;">FCST to PROJ</div><div class="a t" style="top:341.6px;font-size:18px;line-height:18px;color:#1d6e1d;left:402.9px;">($100,000)</div><div class="a t" style="top:385.4px;font-size:18px;line-height:18px;color:#a62a1a;left:402.9px;">$(100,000)</div><div class="a t" style="top:428.9px;font-size:18px;line-height:18px;color:#1d6e1d;left:402.9px;">($100,000)</div><div class="a t" style="top:472.7px;font-size:18px;line-height:18px;color:#a62a1a;left:402.9px;">$(100,000)</div><div class="a t" style="top:516.7px;font-size:18px;line-height:18px;color:#1d6e1d;left:402.9px;">($100,000)</div><div class="a t" style="top:560.5px;font-size:18px;line-height:18px;color:#a62a1a;left:402.9px;">$(100,000)</div><div class="a t" style="top:604.9px;font-size:18px;line-height:18px;color:#1d6e1d;left:402.9px;">$100,000</div><div class="a t" style="top:648.7px;font-size:18px;line-height:18px;color:#252b36;left:402.9px;">$5,000,000</div><div class="a t" style="top:692.7px;font-size:18px;line-height:18px;color:#1d6e1d;left:402.9px;">$100,000</div><div class="a t" style="top:736.5px;font-size:18px;line-height:18px;color:#252b36;left:402.9px;">$4,900,000</div><div class="a t" style="top:780.8px;font-size:18px;line-height:18px;color:#1d6e1d;left:402.9px;">$100,000</div><div class="a t" style="top:824.6px;font-size:18px;line-height:18px;color:#252b36;left:402.9px;">$4,900,000</div><div class="a t" style="top:869.2px;font-size:18px;line-height:18px;color:#1d6ac6;left:402.9px;">$5,000,000</div><div class="a t" style="top:866.0px;font-size:13.5px;line-height:13.5px;color:#4f5b6b;font-style:italic;left:510.4px;">+46% LY</div><div class="a t" style="top:966.9px;font-size:18px;line-height:18px;color:#1d6e1d;left:402.9px;">($400,000)</div><div class="a t" style="top:1010.6px;font-size:18px;line-height:18px;color:#a62a1a;left:402.9px;">($100,000)</div><div class="a t" style="top:1054.4px;font-size:18px;line-height:18px;color:#252b36;left:402.9px;">$5,000,000</div><div class="a t" style="top:1098.1px;font-size:18px;line-height:18px;color:#252b36;left:402.9px;">$4,900,000</div><div class="a t" style="top:1185.7px;font-size:18px;line-height:18px;color:#252b36;left:402.9px;">$4,900,000</div><div class="a t" style="top:1252.5px;font-size:18px;line-height:18px;color:#252b36;left:402.9px;">$100,000</div><div class="a t" style="top:341.6px;font-size:18px;line-height:18px;color:#1d6e1d;left:588.3px;">$100,000</div><div class="a t" style="top:342.6px;font-size:16.8px;line-height:16.8px;color:#4f5b6b;font-style:italic;left:-751.3px;width:1500px;text-align:right;">46.00%</div><div class="a t" style="top:385.4px;font-size:18px;line-height:18px;color:#1d6e1d;left:588.3px;">$100,000</div><div class="a t" style="top:386.4px;font-size:16.8px;line-height:16.8px;color:#4f5b6b;font-style:italic;left:-751.3px;width:1500px;text-align:right;">46.00%</div><div class="a t" style="top:428.9px;font-size:18px;line-height:18px;color:#1d6e1d;left:588.3px;">$100,000</div><div class="a t" style="top:429.9px;font-size:16.8px;line-height:16.8px;color:#4f5b6b;font-style:italic;left:-751.3px;width:1500px;text-align:right;">46.00%</div><div class="a t" style="top:472.7px;font-size:18px;line-height:18px;color:#1d6e1d;left:588.3px;">$100,000</div><div class="a t" style="top:473.7px;font-size:16.8px;line-height:16.8px;color:#4f5b6b;font-style:italic;left:-751.3px;width:1500px;text-align:right;">46.00%</div><div class="a t" style="top:516.7px;font-size:18px;line-height:18px;color:#1d6e1d;left:588.3px;">$100,000</div><div class="a t" style="top:517.7px;font-size:16.8px;line-height:16.8px;color:#4f5b6b;font-style:italic;left:-751.3px;width:1500px;text-align:right;">46.00%</div><div class="a t" style="top:560.5px;font-size:18px;line-height:18px;color:#1d6e1d;left:588.3px;">$100,000</div><div class="a t" style="top:561.5px;font-size:16.8px;line-height:16.8px;color:#4f5b6b;font-style:italic;left:-751.3px;width:1500px;text-align:right;">46.00%</div><div class="a t" style="top:604.9px;font-size:18px;line-height:18px;color:#1d6e1d;left:588.3px;">$100,000</div><div class="a t" style="top:605.9px;font-size:16.8px;line-height:16.8px;color:#4f5b6b;font-style:italic;left:-751.3px;width:1500px;text-align:right;">46.00%</div><div class="a t" style="top:648.7px;font-size:18px;line-height:18px;color:#252b36;left:588.3px;">$5,000,000</div><div class="a t" style="top:649.7px;font-size:16.8px;line-height:16.8px;color:#4f5b6b;font-style:italic;left:-751.3px;width:1500px;text-align:right;">46.00%</div><div class="a t" style="top:692.7px;font-size:18px;line-height:18px;color:#1d6e1d;left:588.3px;">$100,000</div><div class="a t" style="top:693.7px;font-size:16.8px;line-height:16.8px;color:#4f5b6b;font-style:italic;left:-751.3px;width:1500px;text-align:right;">46.00%</div><div class="a t" style="top:736.5px;font-size:18px;line-height:18px;color:#252b36;left:588.3px;">$5,000,000</div><div class="a t" style="top:737.5px;font-size:16.8px;line-height:16.8px;color:#4f5b6b;font-style:italic;left:-751.3px;width:1500px;text-align:right;">46.00%</div><div class="a t" style="top:780.8px;font-size:18px;line-height:18px;color:#1d6e1d;left:588.3px;">$100,000</div><div class="a t" style="top:781.8px;font-size:16.8px;line-height:16.8px;color:#4f5b6b;font-style:italic;left:-751.3px;width:1500px;text-align:right;">46.00%</div><div class="a t" style="top:824.6px;font-size:18px;line-height:18px;color:#252b36;left:588.3px;">$5,000,000</div><div class="a t" style="top:825.6px;font-size:16.8px;line-height:16.8px;color:#4f5b6b;font-style:italic;left:-751.3px;width:1500px;text-align:right;">46.00%</div><div class="a t" style="top:869.2px;font-size:18px;line-height:18px;color:#252b36;left:588.3px;">$5,000,000</div><div class="a t" style="top:870.2px;font-size:16.8px;line-height:16.8px;color:#4f5b6b;font-style:italic;left:-751.3px;width:1500px;text-align:right;">46.00%</div><div class="a t" style="top:966.9px;font-size:18px;line-height:18px;color:#1d6e1d;left:588.3px;">$100,000</div><div class="a t" style="top:967.9px;font-size:16.8px;line-height:16.8px;color:#4f5b6b;font-style:italic;left:-751.3px;width:1500px;text-align:right;">46.00%</div><div class="a t" style="top:1010.6px;font-size:18px;line-height:18px;color:#1d6e1d;left:588.3px;">$100,000</div><div class="a t" style="top:1011.6px;font-size:16.8px;line-height:16.8px;color:#4f5b6b;font-style:italic;left:-751.3px;width:1500px;text-align:right;">46.00%</div><div class="a t" style="top:1054.4px;font-size:18px;line-height:18px;color:#252b36;left:588.3px;">$5,000,000</div><div class="a t" style="top:1055.4px;font-size:16.8px;line-height:16.8px;color:#4f5b6b;font-style:italic;left:-751.3px;width:1500px;text-align:right;">46.00%</div><div class="a t" style="top:1098.1px;font-size:18px;line-height:18px;color:#252b36;left:588.3px;">$4,900,000</div><div class="a t" style="top:1099.1px;font-size:16.8px;line-height:16.8px;color:#4f5b6b;font-style:italic;left:-751.3px;width:1500px;text-align:right;">46.00%</div><div class="a t" style="top:1185.7px;font-size:18px;line-height:18px;color:#252b36;left:588.3px;">$100,000</div><div class="a t" style="top:1186.7px;font-size:16.8px;line-height:16.8px;color:#4f5b6b;font-style:italic;left:-751.3px;width:1500px;text-align:right;">46.00%</div><div class="a t" style="top:1252.5px;font-size:18px;line-height:18px;color:#252b36;left:588.3px;">$100,000</div><div class="a t" style="top:1253.5px;font-size:16.8px;line-height:16.8px;color:#4f5b6b;font-style:italic;left:-751.3px;width:1500px;text-align:right;">46.00%</div><div class="a t" style="top:341.6px;font-size:18px;line-height:18px;color:#1d6e1d;left:773.2px;">$100,000</div><div class="a t" style="top:342.6px;font-size:16.8px;line-height:16.8px;color:#4f5b6b;font-style:italic;left:-566.0px;width:1500px;text-align:right;">46.00%</div><div class="a t" style="top:385.4px;font-size:18px;line-height:18px;color:#1d6e1d;left:773.2px;">$100,000</div><div class="a t" style="top:386.4px;font-size:16.8px;line-height:16.8px;color:#4f5b6b;font-style:italic;left:-566.0px;width:1500px;text-align:right;">46.00%</div><div class="a t" style="top:428.9px;font-size:18px;line-height:18px;color:#1d6e1d;left:773.2px;">$100,000</div><div class="a t" style="top:429.9px;font-size:16.8px;line-height:16.8px;color:#4f5b6b;font-style:italic;left:-566.0px;width:1500px;text-align:right;">46.00%</div><div class="a t" style="top:472.7px;font-size:18px;line-height:18px;color:#1d6e1d;left:773.2px;">$100,000</div><div class="a t" style="top:473.7px;font-size:16.8px;line-height:16.8px;color:#4f5b6b;font-style:italic;left:-566.0px;width:1500px;text-align:right;">46.00%</div><div class="a t" style="top:516.7px;font-size:18px;line-height:18px;color:#1d6e1d;left:773.2px;">$100,000</div><div class="a t" style="top:517.7px;font-size:16.8px;line-height:16.8px;color:#4f5b6b;font-style:italic;left:-566.0px;width:1500px;text-align:right;">46.00%</div><div class="a t" style="top:560.5px;font-size:18px;line-height:18px;color:#1d6e1d;left:773.2px;">$100,000</div><div class="a t" style="top:561.5px;font-size:16.8px;line-height:16.8px;color:#4f5b6b;font-style:italic;left:-566.0px;width:1500px;text-align:right;">46.00%</div><div class="a t" style="top:604.9px;font-size:18px;line-height:18px;color:#1d6e1d;left:773.2px;">$100,000</div><div class="a t" style="top:605.9px;font-size:16.8px;line-height:16.8px;color:#4f5b6b;font-style:italic;left:-566.0px;width:1500px;text-align:right;">46.00%</div><div class="a t" style="top:648.7px;font-size:18px;line-height:18px;color:#252b36;left:773.2px;">$5,000,000</div><div class="a t" style="top:649.7px;font-size:16.8px;line-height:16.8px;color:#4f5b6b;font-style:italic;left:-566.0px;width:1500px;text-align:right;">46.00%</div><div class="a t" style="top:692.7px;font-size:18px;line-height:18px;color:#1d6e1d;left:773.2px;">$100,000</div><div class="a t" style="top:693.7px;font-size:16.8px;line-height:16.8px;color:#4f5b6b;font-style:italic;left:-566.0px;width:1500px;text-align:right;">46.00%</div><div class="a t" style="top:736.5px;font-size:18px;line-height:18px;color:#252b36;left:773.2px;">$5,000,000</div><div class="a t" style="top:737.5px;font-size:16.8px;line-height:16.8px;color:#4f5b6b;font-style:italic;left:-566.0px;width:1500px;text-align:right;">46.00%</div><div class="a t" style="top:780.8px;font-size:18px;line-height:18px;color:#1d6e1d;left:773.2px;">$100,000</div><div class="a t" style="top:781.8px;font-size:16.8px;line-height:16.8px;color:#4f5b6b;font-style:italic;left:-566.0px;width:1500px;text-align:right;">46.00%</div><div class="a t" style="top:824.6px;font-size:18px;line-height:18px;color:#252b36;left:773.2px;">$5,000,000</div><div class="a t" style="top:825.6px;font-size:16.8px;line-height:16.8px;color:#4f5b6b;font-style:italic;left:-566.0px;width:1500px;text-align:right;">46.00%</div><div class="a t" style="top:869.2px;font-size:18px;line-height:18px;color:#252b36;left:773.2px;">$5,000,000</div><div class="a t" style="top:870.2px;font-size:16.8px;line-height:16.8px;color:#4f5b6b;font-style:italic;left:-566.0px;width:1500px;text-align:right;">46.00%</div><div class="a t" style="top:966.9px;font-size:18px;line-height:18px;color:#1d6e1d;left:773.2px;">$100,000</div><div class="a t" style="top:967.9px;font-size:16.8px;line-height:16.8px;color:#4f5b6b;font-style:italic;left:-566.0px;width:1500px;text-align:right;">46.00%</div><div class="a t" style="top:1010.6px;font-size:18px;line-height:18px;color:#1d6e1d;left:773.2px;">$100,000</div><div class="a t" style="top:1011.6px;font-size:16.8px;line-height:16.8px;color:#4f5b6b;font-style:italic;left:-566.0px;width:1500px;text-align:right;">46.00%</div><div class="a t" style="top:1054.4px;font-size:18px;line-height:18px;color:#252b36;left:773.2px;">$5,000,000</div><div class="a t" style="top:1055.4px;font-size:16.8px;line-height:16.8px;color:#4f5b6b;font-style:italic;left:-566.0px;width:1500px;text-align:right;">46.00%</div><div class="a t" style="top:1098.1px;font-size:18px;line-height:18px;color:#252b36;left:773.2px;">$4,900,000</div><div class="a t" style="top:1099.1px;font-size:16.8px;line-height:16.8px;color:#4f5b6b;font-style:italic;left:-566.0px;width:1500px;text-align:right;">46.00%</div><div class="a t" style="top:1185.7px;font-size:18px;line-height:18px;color:#252b36;left:773.2px;">$100,000</div><div class="a t" style="top:1186.7px;font-size:16.8px;line-height:16.8px;color:#4f5b6b;font-style:italic;left:-566.0px;width:1500px;text-align:right;">46.00%</div><div class="a t" style="top:1252.5px;font-size:18px;line-height:18px;color:#252b36;left:773.2px;">$100,000</div><div class="a t" style="top:1253.5px;font-size:16.8px;line-height:16.8px;color:#4f5b6b;font-style:italic;left:-566.0px;width:1500px;text-align:right;">46.00%</div><div class="a t" style="top:341.6px;font-size:18px;line-height:18px;color:#1d6e1d;left:958.5px;">$100,000</div><div class="a t" style="top:342.6px;font-size:16.8px;line-height:16.8px;color:#4f5b6b;font-style:italic;left:-380.6px;width:1500px;text-align:right;">46.00%</div><div class="a t" style="top:385.4px;font-size:18px;line-height:18px;color:#1d6e1d;left:958.5px;">$100,000</div><div class="a t" style="top:386.4px;font-size:16.8px;line-height:16.8px;color:#4f5b6b;font-style:italic;left:-380.6px;width:1500px;text-align:right;">46.00%</div><div class="a t" style="top:428.9px;font-size:18px;line-height:18px;color:#1d6e1d;left:958.5px;">$100,000</div><div class="a t" style="top:429.9px;font-size:16.8px;line-height:16.8px;color:#4f5b6b;font-style:italic;left:-380.6px;width:1500px;text-align:right;">46.00%</div><div class="a t" style="top:472.7px;font-size:18px;line-height:18px;color:#1d6e1d;left:958.5px;">$100,000</div><div class="a t" style="top:473.7px;font-size:16.8px;line-height:16.8px;color:#4f5b6b;font-style:italic;left:-380.6px;width:1500px;text-align:right;">46.00%</div><div class="a t" style="top:516.7px;font-size:18px;line-height:18px;color:#1d6e1d;left:958.5px;">$100,000</div><div class="a t" style="top:517.7px;font-size:16.8px;line-height:16.8px;color:#4f5b6b;font-style:italic;left:-380.6px;width:1500px;text-align:right;">46.00%</div><div class="a t" style="top:560.5px;font-size:18px;line-height:18px;color:#1d6e1d;left:958.5px;">$100,000</div><div class="a t" style="top:561.5px;font-size:16.8px;line-height:16.8px;color:#4f5b6b;font-style:italic;left:-380.6px;width:1500px;text-align:right;">46.00%</div><div class="a t" style="top:604.9px;font-size:18px;line-height:18px;color:#1d6e1d;left:958.5px;">$100,000</div><div class="a t" style="top:605.9px;font-size:16.8px;line-height:16.8px;color:#4f5b6b;font-style:italic;left:-380.6px;width:1500px;text-align:right;">46.00%</div><div class="a t" style="top:648.7px;font-size:18px;line-height:18px;color:#252b36;left:958.5px;">$5,000,000</div><div class="a t" style="top:649.7px;font-size:16.8px;line-height:16.8px;color:#4f5b6b;font-style:italic;left:-380.6px;width:1500px;text-align:right;">46.00%</div><div class="a t" style="top:692.7px;font-size:18px;line-height:18px;color:#1d6e1d;left:958.5px;">$100,000</div><div class="a t" style="top:693.7px;font-size:16.8px;line-height:16.8px;color:#4f5b6b;font-style:italic;left:-380.6px;width:1500px;text-align:right;">46.00%</div><div class="a t" style="top:736.5px;font-size:18px;line-height:18px;color:#252b36;left:958.5px;">$5,000,000</div><div class="a t" style="top:737.5px;font-size:16.8px;line-height:16.8px;color:#4f5b6b;font-style:italic;left:-380.6px;width:1500px;text-align:right;">46.00%</div><div class="a t" style="top:780.8px;font-size:18px;line-height:18px;color:#1d6e1d;left:958.5px;">$100,000</div><div class="a t" style="top:781.8px;font-size:16.8px;line-height:16.8px;color:#4f5b6b;font-style:italic;left:-380.6px;width:1500px;text-align:right;">46.00%</div><div class="a t" style="top:824.6px;font-size:18px;line-height:18px;color:#252b36;left:958.5px;">$5,000,000</div><div class="a t" style="top:825.6px;font-size:16.8px;line-height:16.8px;color:#4f5b6b;font-style:italic;left:-380.6px;width:1500px;text-align:right;">46.00%</div><div class="a t" style="top:869.2px;font-size:18px;line-height:18px;color:#252b36;left:958.5px;">$5,000,000</div><div class="a t" style="top:870.2px;font-size:16.8px;line-height:16.8px;color:#4f5b6b;font-style:italic;left:-380.6px;width:1500px;text-align:right;">46.00%</div><div class="a t" style="top:966.9px;font-size:18px;line-height:18px;color:#1d6e1d;left:958.5px;">$100,000</div><div class="a t" style="top:967.9px;font-size:16.8px;line-height:16.8px;color:#4f5b6b;font-style:italic;left:-380.6px;width:1500px;text-align:right;">46.00%</div><div class="a t" style="top:1010.6px;font-size:18px;line-height:18px;color:#1d6e1d;left:958.5px;">$100,000</div><div class="a t" style="top:1011.6px;font-size:16.8px;line-height:16.8px;color:#4f5b6b;font-style:italic;left:-380.6px;width:1500px;text-align:right;">46.00%</div><div class="a t" style="top:1054.4px;font-size:18px;line-height:18px;color:#252b36;left:958.5px;">$5,000,000</div><div class="a t" style="top:1055.4px;font-size:16.8px;line-height:16.8px;color:#4f5b6b;font-style:italic;left:-380.6px;width:1500px;text-align:right;">46.00%</div><div class="a t" style="top:1098.1px;font-size:18px;line-height:18px;color:#252b36;left:958.5px;">$4,900,000</div><div class="a t" style="top:1099.1px;font-size:16.8px;line-height:16.8px;color:#4f5b6b;font-style:italic;left:-380.6px;width:1500px;text-align:right;">46.00%</div><div class="a t" style="top:1185.7px;font-size:18px;line-height:18px;color:#252b36;left:958.5px;">$100,000</div><div class="a t" style="top:1186.7px;font-size:16.8px;line-height:16.8px;color:#4f5b6b;font-style:italic;left:-380.6px;width:1500px;text-align:right;">46.00%</div><div class="a t" style="top:1252.5px;font-size:18px;line-height:18px;color:#252b36;left:958.5px;">$100,000</div><div class="a t" style="top:1253.5px;font-size:16.8px;line-height:16.8px;color:#4f5b6b;font-style:italic;left:-380.6px;width:1500px;text-align:right;">46.00%</div><div class="a t" style="top:341.6px;font-size:18px;line-height:18px;color:#1d6e1d;left:1143.9px;">$100,000</div><div class="a t" style="top:342.6px;font-size:16.8px;line-height:16.8px;color:#4f5b6b;font-style:italic;left:-195.5px;width:1500px;text-align:right;">46.00%</div><div class="a t" style="top:385.4px;font-size:18px;line-height:18px;color:#1d6e1d;left:1143.9px;">$100,000</div><div class="a t" style="top:386.4px;font-size:16.8px;line-height:16.8px;color:#4f5b6b;font-style:italic;left:-195.5px;width:1500px;text-align:right;">46.00%</div><div class="a t" style="top:428.9px;font-size:18px;line-height:18px;color:#1d6e1d;left:1143.9px;">$100,000</div><div class="a t" style="top:429.9px;font-size:16.8px;line-height:16.8px;color:#4f5b6b;font-style:italic;left:-195.5px;width:1500px;text-align:right;">46.00%</div><div class="a t" style="top:472.7px;font-size:18px;line-height:18px;color:#1d6e1d;left:1143.9px;">$100,000</div><div class="a t" style="top:473.7px;font-size:16.8px;line-height:16.8px;color:#4f5b6b;font-style:italic;left:-195.5px;width:1500px;text-align:right;">46.00%</div><div class="a t" style="top:516.7px;font-size:18px;line-height:18px;color:#1d6e1d;left:1143.9px;">$100,000</div><div class="a t" style="top:517.7px;font-size:16.8px;line-height:16.8px;color:#4f5b6b;font-style:italic;left:-195.5px;width:1500px;text-align:right;">46.00%</div><div class="a t" style="top:560.5px;font-size:18px;line-height:18px;color:#1d6e1d;left:1143.9px;">$100,000</div><div class="a t" style="top:561.5px;font-size:16.8px;line-height:16.8px;color:#4f5b6b;font-style:italic;left:-195.5px;width:1500px;text-align:right;">46.00%</div><div class="a t" style="top:604.9px;font-size:18px;line-height:18px;color:#1d6e1d;left:1143.9px;">$100,000</div><div class="a t" style="top:605.9px;font-size:16.8px;line-height:16.8px;color:#4f5b6b;font-style:italic;left:-195.5px;width:1500px;text-align:right;">46.00%</div><div class="a t" style="top:648.7px;font-size:18px;line-height:18px;color:#252b36;left:1143.9px;">$5,000,000</div><div class="a t" style="top:649.7px;font-size:16.8px;line-height:16.8px;color:#4f5b6b;font-style:italic;left:-195.5px;width:1500px;text-align:right;">46.00%</div><div class="a t" style="top:692.7px;font-size:18px;line-height:18px;color:#1d6e1d;left:1143.9px;">$100,000</div><div class="a t" style="top:693.7px;font-size:16.8px;line-height:16.8px;color:#4f5b6b;font-style:italic;left:-195.5px;width:1500px;text-align:right;">46.00%</div><div class="a t" style="top:736.5px;font-size:18px;line-height:18px;color:#252b36;left:1143.9px;">$5,000,000</div><div class="a t" style="top:737.5px;font-size:16.8px;line-height:16.8px;color:#4f5b6b;font-style:italic;left:-195.5px;width:1500px;text-align:right;">46.00%</div><div class="a t" style="top:780.8px;font-size:18px;line-height:18px;color:#1d6e1d;left:1143.9px;">$100,000</div><div class="a t" style="top:781.8px;font-size:16.8px;line-height:16.8px;color:#4f5b6b;font-style:italic;left:-195.5px;width:1500px;text-align:right;">46.00%</div><div class="a t" style="top:824.6px;font-size:18px;line-height:18px;color:#252b36;left:1143.9px;">$5,000,000</div><div class="a t" style="top:825.6px;font-size:16.8px;line-height:16.8px;color:#4f5b6b;font-style:italic;left:-195.5px;width:1500px;text-align:right;">46.00%</div><div class="a t" style="top:869.2px;font-size:18px;line-height:18px;color:#252b36;left:1143.9px;">$5,000,000</div><div class="a t" style="top:870.2px;font-size:16.8px;line-height:16.8px;color:#4f5b6b;font-style:italic;left:-195.5px;width:1500px;text-align:right;">46.00%</div><div class="a t" style="top:966.9px;font-size:18px;line-height:18px;color:#1d6e1d;left:1143.9px;">$100,000</div><div class="a t" style="top:967.9px;font-size:16.8px;line-height:16.8px;color:#4f5b6b;font-style:italic;left:-195.5px;width:1500px;text-align:right;">46.00%</div><div class="a t" style="top:1010.6px;font-size:18px;line-height:18px;color:#1d6e1d;left:1143.9px;">$100,000</div><div class="a t" style="top:1011.6px;font-size:16.8px;line-height:16.8px;color:#4f5b6b;font-style:italic;left:-195.5px;width:1500px;text-align:right;">46.00%</div><div class="a t" style="top:1054.4px;font-size:18px;line-height:18px;color:#252b36;left:1143.9px;">$5,000,000</div><div class="a t" style="top:1055.4px;font-size:16.8px;line-height:16.8px;color:#4f5b6b;font-style:italic;left:-195.5px;width:1500px;text-align:right;">46.00%</div><div class="a t" style="top:1098.1px;font-size:18px;line-height:18px;color:#252b36;left:1143.9px;">$4,900,000</div><div class="a t" style="top:1099.1px;font-size:16.8px;line-height:16.8px;color:#4f5b6b;font-style:italic;left:-195.5px;width:1500px;text-align:right;">46.00%</div><div class="a t" style="top:1185.7px;font-size:18px;line-height:18px;color:#252b36;left:1143.9px;">$100,000</div><div class="a t" style="top:1186.7px;font-size:16.8px;line-height:16.8px;color:#4f5b6b;font-style:italic;left:-195.5px;width:1500px;text-align:right;">46.00%</div><div class="a t" style="top:1252.5px;font-size:18px;line-height:18px;color:#252b36;left:1143.9px;">$100,000</div><div class="a t" style="top:1253.5px;font-size:16.8px;line-height:16.8px;color:#4f5b6b;font-style:italic;left:-195.5px;width:1500px;text-align:right;">46.00%</div><div class="a t" style="top:341.6px;font-size:18px;line-height:18px;color:#1d6e1d;left:1329.0px;">$100,000</div><div class="a t" style="top:342.6px;font-size:16.8px;line-height:16.8px;color:#4f5b6b;font-style:italic;left:-10.3px;width:1500px;text-align:right;">46.00%</div><div class="a t" style="top:385.4px;font-size:18px;line-height:18px;color:#1d6e1d;left:1329.0px;">$100,000</div><div class="a t" style="top:386.4px;font-size:16.8px;line-height:16.8px;color:#4f5b6b;font-style:italic;left:-10.3px;width:1500px;text-align:right;">46.00%</div><div class="a t" style="top:428.9px;font-size:18px;line-height:18px;color:#1d6e1d;left:1329.0px;">$100,000</div><div class="a t" style="top:429.9px;font-size:16.8px;line-height:16.8px;color:#4f5b6b;font-style:italic;left:-10.3px;width:1500px;text-align:right;">46.00%</div><div class="a t" style="top:472.7px;font-size:18px;line-height:18px;color:#1d6e1d;left:1329.0px;">$100,000</div><div class="a t" style="top:473.7px;font-size:16.8px;line-height:16.8px;color:#4f5b6b;font-style:italic;left:-10.3px;width:1500px;text-align:right;">46.00%</div><div class="a t" style="top:516.7px;font-size:18px;line-height:18px;color:#1d6e1d;left:1329.0px;">$100,000</div><div class="a t" style="top:517.7px;font-size:16.8px;line-height:16.8px;color:#4f5b6b;font-style:italic;left:-10.3px;width:1500px;text-align:right;">46.00%</div><div class="a t" style="top:560.5px;font-size:18px;line-height:18px;color:#1d6e1d;left:1329.0px;">$100,000</div><div class="a t" style="top:561.5px;font-size:16.8px;line-height:16.8px;color:#4f5b6b;font-style:italic;left:-10.3px;width:1500px;text-align:right;">46.00%</div><div class="a t" style="top:604.9px;font-size:18px;line-height:18px;color:#1d6e1d;left:1329.0px;">$100,000</div><div class="a t" style="top:605.9px;font-size:16.8px;line-height:16.8px;color:#4f5b6b;font-style:italic;left:-10.3px;width:1500px;text-align:right;">46.00%</div><div class="a t" style="top:648.7px;font-size:18px;line-height:18px;color:#252b36;left:1329.0px;">$5,000,000</div><div class="a t" style="top:649.7px;font-size:16.8px;line-height:16.8px;color:#4f5b6b;font-style:italic;left:-10.3px;width:1500px;text-align:right;">46.00%</div><div class="a t" style="top:692.7px;font-size:18px;line-height:18px;color:#1d6e1d;left:1329.0px;">$100,000</div><div class="a t" style="top:693.7px;font-size:16.8px;line-height:16.8px;color:#4f5b6b;font-style:italic;left:-10.3px;width:1500px;text-align:right;">46.00%</div><div class="a t" style="top:736.5px;font-size:18px;line-height:18px;color:#252b36;left:1329.0px;">$5,000,000</div><div class="a t" style="top:737.5px;font-size:16.8px;line-height:16.8px;color:#4f5b6b;font-style:italic;left:-10.3px;width:1500px;text-align:right;">46.00%</div><div class="a t" style="top:780.8px;font-size:18px;line-height:18px;color:#1d6e1d;left:1329.0px;">$100,000</div><div class="a t" style="top:781.8px;font-size:16.8px;line-height:16.8px;color:#4f5b6b;font-style:italic;left:-10.3px;width:1500px;text-align:right;">46.00%</div><div class="a t" style="top:824.6px;font-size:18px;line-height:18px;color:#252b36;left:1329.0px;">$5,000,000</div><div class="a t" style="top:825.6px;font-size:16.8px;line-height:16.8px;color:#4f5b6b;font-style:italic;left:-10.3px;width:1500px;text-align:right;">46.00%</div><div class="a t" style="top:869.2px;font-size:18px;line-height:18px;color:#252b36;left:1329.0px;">$5,000,000</div><div class="a t" style="top:870.2px;font-size:16.8px;line-height:16.8px;color:#4f5b6b;font-style:italic;left:-10.3px;width:1500px;text-align:right;">46.00%</div><div class="a t" style="top:966.9px;font-size:18px;line-height:18px;color:#1d6e1d;left:1329.0px;">$100,000</div><div class="a t" style="top:967.9px;font-size:16.8px;line-height:16.8px;color:#4f5b6b;font-style:italic;left:-10.3px;width:1500px;text-align:right;">46.00%</div><div class="a t" style="top:1010.6px;font-size:18px;line-height:18px;color:#1d6e1d;left:1329.0px;">$100,000</div><div class="a t" style="top:1011.6px;font-size:16.8px;line-height:16.8px;color:#4f5b6b;font-style:italic;left:-10.3px;width:1500px;text-align:right;">46.00%</div><div class="a t" style="top:1054.4px;font-size:18px;line-height:18px;color:#252b36;left:1329.0px;">$5,000,000</div><div class="a t" style="top:1055.4px;font-size:16.8px;line-height:16.8px;color:#4f5b6b;font-style:italic;left:-10.3px;width:1500px;text-align:right;">46.00%</div><div class="a t" style="top:1098.1px;font-size:18px;line-height:18px;color:#252b36;left:1329.0px;">$4,900,000</div><div class="a t" style="top:1099.1px;font-size:16.8px;line-height:16.8px;color:#4f5b6b;font-style:italic;left:-10.3px;width:1500px;text-align:right;">46.00%</div><div class="a t" style="top:1185.7px;font-size:18px;line-height:18px;color:#252b36;left:1329.0px;">$100,000</div><div class="a t" style="top:1186.7px;font-size:16.8px;line-height:16.8px;color:#4f5b6b;font-style:italic;left:-10.3px;width:1500px;text-align:right;">46.00%</div><div class="a t" style="top:1229.0px;font-size:18px;line-height:18px;color:#1d6e1d;left:1329.0px;">$100,000</div><div class="a t" style="top:1230.0px;font-size:16.8px;line-height:16.8px;color:#4f5b6b;font-style:italic;left:-10.3px;width:1500px;text-align:right;">46.00%</div><div class="a t" style="top:1272.7px;font-size:18px;line-height:18px;color:#1d6e1d;left:1329.0px;">$100,000</div><div class="a t" style="top:1273.7px;font-size:16.8px;line-height:16.8px;color:#4f5b6b;font-style:italic;left:-10.3px;width:1500px;text-align:right;">46.00%</div><div class="a t" style="top:341.6px;font-size:18px;line-height:18px;color:#1d6e1d;left:1514.2px;">$100,000</div><div class="a t" style="top:342.6px;font-size:16.8px;line-height:16.8px;color:#4f5b6b;font-style:italic;left:174.5px;width:1500px;text-align:right;">46.00%</div><div class="a t" style="top:385.4px;font-size:18px;line-height:18px;color:#1d6e1d;left:1514.2px;">$100,000</div><div class="a t" style="top:386.4px;font-size:16.8px;line-height:16.8px;color:#4f5b6b;font-style:italic;left:174.5px;width:1500px;text-align:right;">46.00%</div><div class="a t" style="top:428.9px;font-size:18px;line-height:18px;color:#1d6e1d;left:1514.2px;">$100,000</div><div class="a t" style="top:429.9px;font-size:16.8px;line-height:16.8px;color:#4f5b6b;font-style:italic;left:174.5px;width:1500px;text-align:right;">46.00%</div><div class="a t" style="top:472.7px;font-size:18px;line-height:18px;color:#1d6e1d;left:1514.2px;">$100,000</div><div class="a t" style="top:473.7px;font-size:16.8px;line-height:16.8px;color:#4f5b6b;font-style:italic;left:174.5px;width:1500px;text-align:right;">46.00%</div><div class="a t" style="top:516.7px;font-size:18px;line-height:18px;color:#1d6e1d;left:1514.2px;">$100,000</div><div class="a t" style="top:517.7px;font-size:16.8px;line-height:16.8px;color:#4f5b6b;font-style:italic;left:174.5px;width:1500px;text-align:right;">46.00%</div><div class="a t" style="top:560.5px;font-size:18px;line-height:18px;color:#1d6e1d;left:1514.2px;">$100,000</div><div class="a t" style="top:561.5px;font-size:16.8px;line-height:16.8px;color:#4f5b6b;font-style:italic;left:174.5px;width:1500px;text-align:right;">46.00%</div><div class="a t" style="top:604.9px;font-size:18px;line-height:18px;color:#1d6e1d;left:1514.2px;">$100,000</div><div class="a t" style="top:605.9px;font-size:16.8px;line-height:16.8px;color:#4f5b6b;font-style:italic;left:174.5px;width:1500px;text-align:right;">46.00%</div><div class="a t" style="top:648.7px;font-size:18px;line-height:18px;color:#252b36;left:1514.2px;">$5,000,000</div><div class="a t" style="top:649.7px;font-size:16.8px;line-height:16.8px;color:#4f5b6b;font-style:italic;left:174.5px;width:1500px;text-align:right;">46.00%</div><div class="a t" style="top:692.7px;font-size:18px;line-height:18px;color:#1d6e1d;left:1514.2px;">$100,000</div><div class="a t" style="top:693.7px;font-size:16.8px;line-height:16.8px;color:#4f5b6b;font-style:italic;left:174.5px;width:1500px;text-align:right;">46.00%</div><div class="a t" style="top:736.5px;font-size:18px;line-height:18px;color:#252b36;left:1514.2px;">$5,000,000</div><div class="a t" style="top:737.5px;font-size:16.8px;line-height:16.8px;color:#4f5b6b;font-style:italic;left:174.5px;width:1500px;text-align:right;">46.00%</div><div class="a t" style="top:780.8px;font-size:18px;line-height:18px;color:#1d6e1d;left:1514.2px;">$100,000</div><div class="a t" style="top:781.8px;font-size:16.8px;line-height:16.8px;color:#4f5b6b;font-style:italic;left:174.5px;width:1500px;text-align:right;">46.00%</div><div class="a t" style="top:824.6px;font-size:18px;line-height:18px;color:#252b36;left:1514.2px;">$5,000,000</div><div class="a t" style="top:825.6px;font-size:16.8px;line-height:16.8px;color:#4f5b6b;font-style:italic;left:174.5px;width:1500px;text-align:right;">46.00%</div><div class="a t" style="top:869.2px;font-size:18px;line-height:18px;color:#1d6ac6;left:1514.2px;">$5,000,000</div><div class="a t" style="top:870.2px;font-size:16.8px;line-height:16.8px;color:#4f5b6b;font-style:italic;left:174.5px;width:1500px;text-align:right;">46.00%</div><div class="a t" style="top:896.3px;font-size:16.9px;line-height:16.9px;color:#252b36;left:1514.2px;">Selling: $4,900,000</div><div class="a t" style="top:924.0px;font-size:16.5px;line-height:16.5px;color:#252b36;left:1514.2px;">Non-s...: $4,900,000</div><div class="a t" style="top:966.9px;font-size:18px;line-height:18px;color:#1d6e1d;left:1514.2px;">$100,000</div><div class="a t" style="top:967.9px;font-size:16.8px;line-height:16.8px;color:#4f5b6b;font-style:italic;left:174.5px;width:1500px;text-align:right;">46.00%</div><div class="a t" style="top:1010.6px;font-size:18px;line-height:18px;color:#1d6e1d;left:1514.2px;">$100,000</div><div class="a t" style="top:1011.6px;font-size:16.8px;line-height:16.8px;color:#4f5b6b;font-style:italic;left:174.5px;width:1500px;text-align:right;">46.00%</div><div class="a t" style="top:1054.4px;font-size:18px;line-height:18px;color:#252b36;left:1514.2px;">$5,000,000</div><div class="a t" style="top:1055.4px;font-size:16.8px;line-height:16.8px;color:#4f5b6b;font-style:italic;left:174.5px;width:1500px;text-align:right;">46.00%</div><div class="a t" style="top:1098.1px;font-size:18px;line-height:18px;color:#252b36;left:1514.2px;">$4,900,000</div><div class="a t" style="top:1099.1px;font-size:16.8px;line-height:16.8px;color:#4f5b6b;font-style:italic;left:174.5px;width:1500px;text-align:right;">46.00%</div><div class="a t" style="top:1185.7px;font-size:18px;line-height:18px;color:#252b36;left:1514.2px;">$100,000</div><div class="a t" style="top:1186.7px;font-size:16.8px;line-height:16.8px;color:#4f5b6b;font-style:italic;left:174.5px;width:1500px;text-align:right;">46.00%</div><div class="a t" style="top:1252.5px;font-size:18px;line-height:18px;color:#252b36;left:1514.2px;">$100,000</div><div class="a t" style="top:1253.5px;font-size:16.8px;line-height:16.8px;color:#4f5b6b;font-style:italic;left:174.5px;width:1500px;text-align:right;">46.00%</div><div class="a t" style="top:341.6px;font-size:18px;line-height:18px;color:#1d6e1d;left:1699.0px;">$100,000</div><div class="a t" style="top:342.6px;font-size:16.8px;line-height:16.8px;color:#4f5b6b;font-style:italic;left:359.7px;width:1500px;text-align:right;">46.00%</div><div class="a t" style="top:385.4px;font-size:18px;line-height:18px;color:#1d6e1d;left:1699.0px;">$100,000</div><div class="a t" style="top:386.4px;font-size:16.8px;line-height:16.8px;color:#4f5b6b;font-style:italic;left:359.7px;width:1500px;text-align:right;">46.00%</div><div class="a t" style="top:428.9px;font-size:18px;line-height:18px;color:#1d6e1d;left:1699.0px;">$100,000</div><div class="a t" style="top:429.9px;font-size:16.8px;line-height:16.8px;color:#4f5b6b;font-style:italic;left:359.7px;width:1500px;text-align:right;">46.00%</div><div class="a t" style="top:472.7px;font-size:18px;line-height:18px;color:#1d6e1d;left:1699.0px;">$100,000</div><div class="a t" style="top:473.7px;font-size:16.8px;line-height:16.8px;color:#4f5b6b;font-style:italic;left:359.7px;width:1500px;text-align:right;">46.00%</div><div class="a t" style="top:516.7px;font-size:18px;line-height:18px;color:#1d6e1d;left:1699.0px;">$100,000</div><div class="a t" style="top:517.7px;font-size:16.8px;line-height:16.8px;color:#4f5b6b;font-style:italic;left:359.7px;width:1500px;text-align:right;">46.00%</div><div class="a t" style="top:560.5px;font-size:18px;line-height:18px;color:#1d6e1d;left:1699.0px;">$100,000</div><div class="a t" style="top:561.5px;font-size:16.8px;line-height:16.8px;color:#4f5b6b;font-style:italic;left:359.7px;width:1500px;text-align:right;">46.00%</div><div class="a t" style="top:604.9px;font-size:18px;line-height:18px;color:#1d6e1d;left:1699.0px;">$100,000</div><div class="a t" style="top:605.9px;font-size:16.8px;line-height:16.8px;color:#4f5b6b;font-style:italic;left:359.7px;width:1500px;text-align:right;">46.00%</div><div class="a t" style="top:648.7px;font-size:18px;line-height:18px;color:#252b36;left:1699.0px;">$5,000,000</div><div class="a t" style="top:649.7px;font-size:16.8px;line-height:16.8px;color:#4f5b6b;font-style:italic;left:359.7px;width:1500px;text-align:right;">46.00%</div><div class="a t" style="top:692.7px;font-size:18px;line-height:18px;color:#1d6e1d;left:1699.0px;">$100,000</div><div class="a t" style="top:693.7px;font-size:16.8px;line-height:16.8px;color:#4f5b6b;font-style:italic;left:359.7px;width:1500px;text-align:right;">46.00%</div><div class="a t" style="top:736.5px;font-size:18px;line-height:18px;color:#252b36;left:1699.0px;">$5,000,000</div><div class="a t" style="top:737.5px;font-size:16.8px;line-height:16.8px;color:#4f5b6b;font-style:italic;left:359.7px;width:1500px;text-align:right;">46.00%</div><div class="a t" style="top:780.8px;font-size:18px;line-height:18px;color:#1d6e1d;left:1699.0px;">$100,000</div><div class="a t" style="top:781.8px;font-size:16.8px;line-height:16.8px;color:#4f5b6b;font-style:italic;left:359.7px;width:1500px;text-align:right;">46.00%</div><div class="a t" style="top:824.6px;font-size:18px;line-height:18px;color:#252b36;left:1699.0px;">$5,000,000</div><div class="a t" style="top:825.6px;font-size:16.8px;line-height:16.8px;color:#4f5b6b;font-style:italic;left:359.7px;width:1500px;text-align:right;">46.00%</div><div class="a t" style="top:869.2px;font-size:18px;line-height:18px;color:#1d6ac6;left:1699.0px;">$5,000,000</div><div class="a t" style="top:870.2px;font-size:16.8px;line-height:16.8px;color:#4f5b6b;font-style:italic;left:359.7px;width:1500px;text-align:right;">46.00%</div><div class="a t" style="top:966.9px;font-size:18px;line-height:18px;color:#1d6e1d;left:1699.0px;">$100,000</div><div class="a t" style="top:967.9px;font-size:16.8px;line-height:16.8px;color:#4f5b6b;font-style:italic;left:359.7px;width:1500px;text-align:right;">46.00%</div><div class="a t" style="top:1010.6px;font-size:18px;line-height:18px;color:#1d6e1d;left:1699.0px;">$100,000</div><div class="a t" style="top:1011.6px;font-size:16.8px;line-height:16.8px;color:#4f5b6b;font-style:italic;left:359.7px;width:1500px;text-align:right;">46.00%</div><div class="a t" style="top:1054.4px;font-size:18px;line-height:18px;color:#252b36;left:1699.0px;">$5,000,000</div><div class="a t" style="top:1055.4px;font-size:16.8px;line-height:16.8px;color:#4f5b6b;font-style:italic;left:359.7px;width:1500px;text-align:right;">46.00%</div><div class="a t" style="top:1098.1px;font-size:18px;line-height:18px;color:#252b36;left:1699.0px;">$4,900,000</div><div class="a t" style="top:1099.1px;font-size:16.8px;line-height:16.8px;color:#4f5b6b;font-style:italic;left:359.7px;width:1500px;text-align:right;">46.00%</div><div class="a t" style="top:1185.7px;font-size:18px;line-height:18px;color:#252b36;left:1699.0px;">$100,000</div><div class="a t" style="top:1186.7px;font-size:16.8px;line-height:16.8px;color:#4f5b6b;font-style:italic;left:359.7px;width:1500px;text-align:right;">46.00%</div><div class="a t" style="top:1252.5px;font-size:18px;line-height:18px;color:#252b36;left:1699.0px;">$100,000</div><div class="a t" style="top:1253.5px;font-size:16.8px;line-height:16.8px;color:#4f5b6b;font-style:italic;left:359.7px;width:1500px;text-align:right;">46.00%</div><div class="a" style="left:1806.6px;top:273.6px;width:10.8px;height:388.8px;background:rgba(105,114,128,0.62);border-radius:5.4px;"></div></div></div>
</body></html>
